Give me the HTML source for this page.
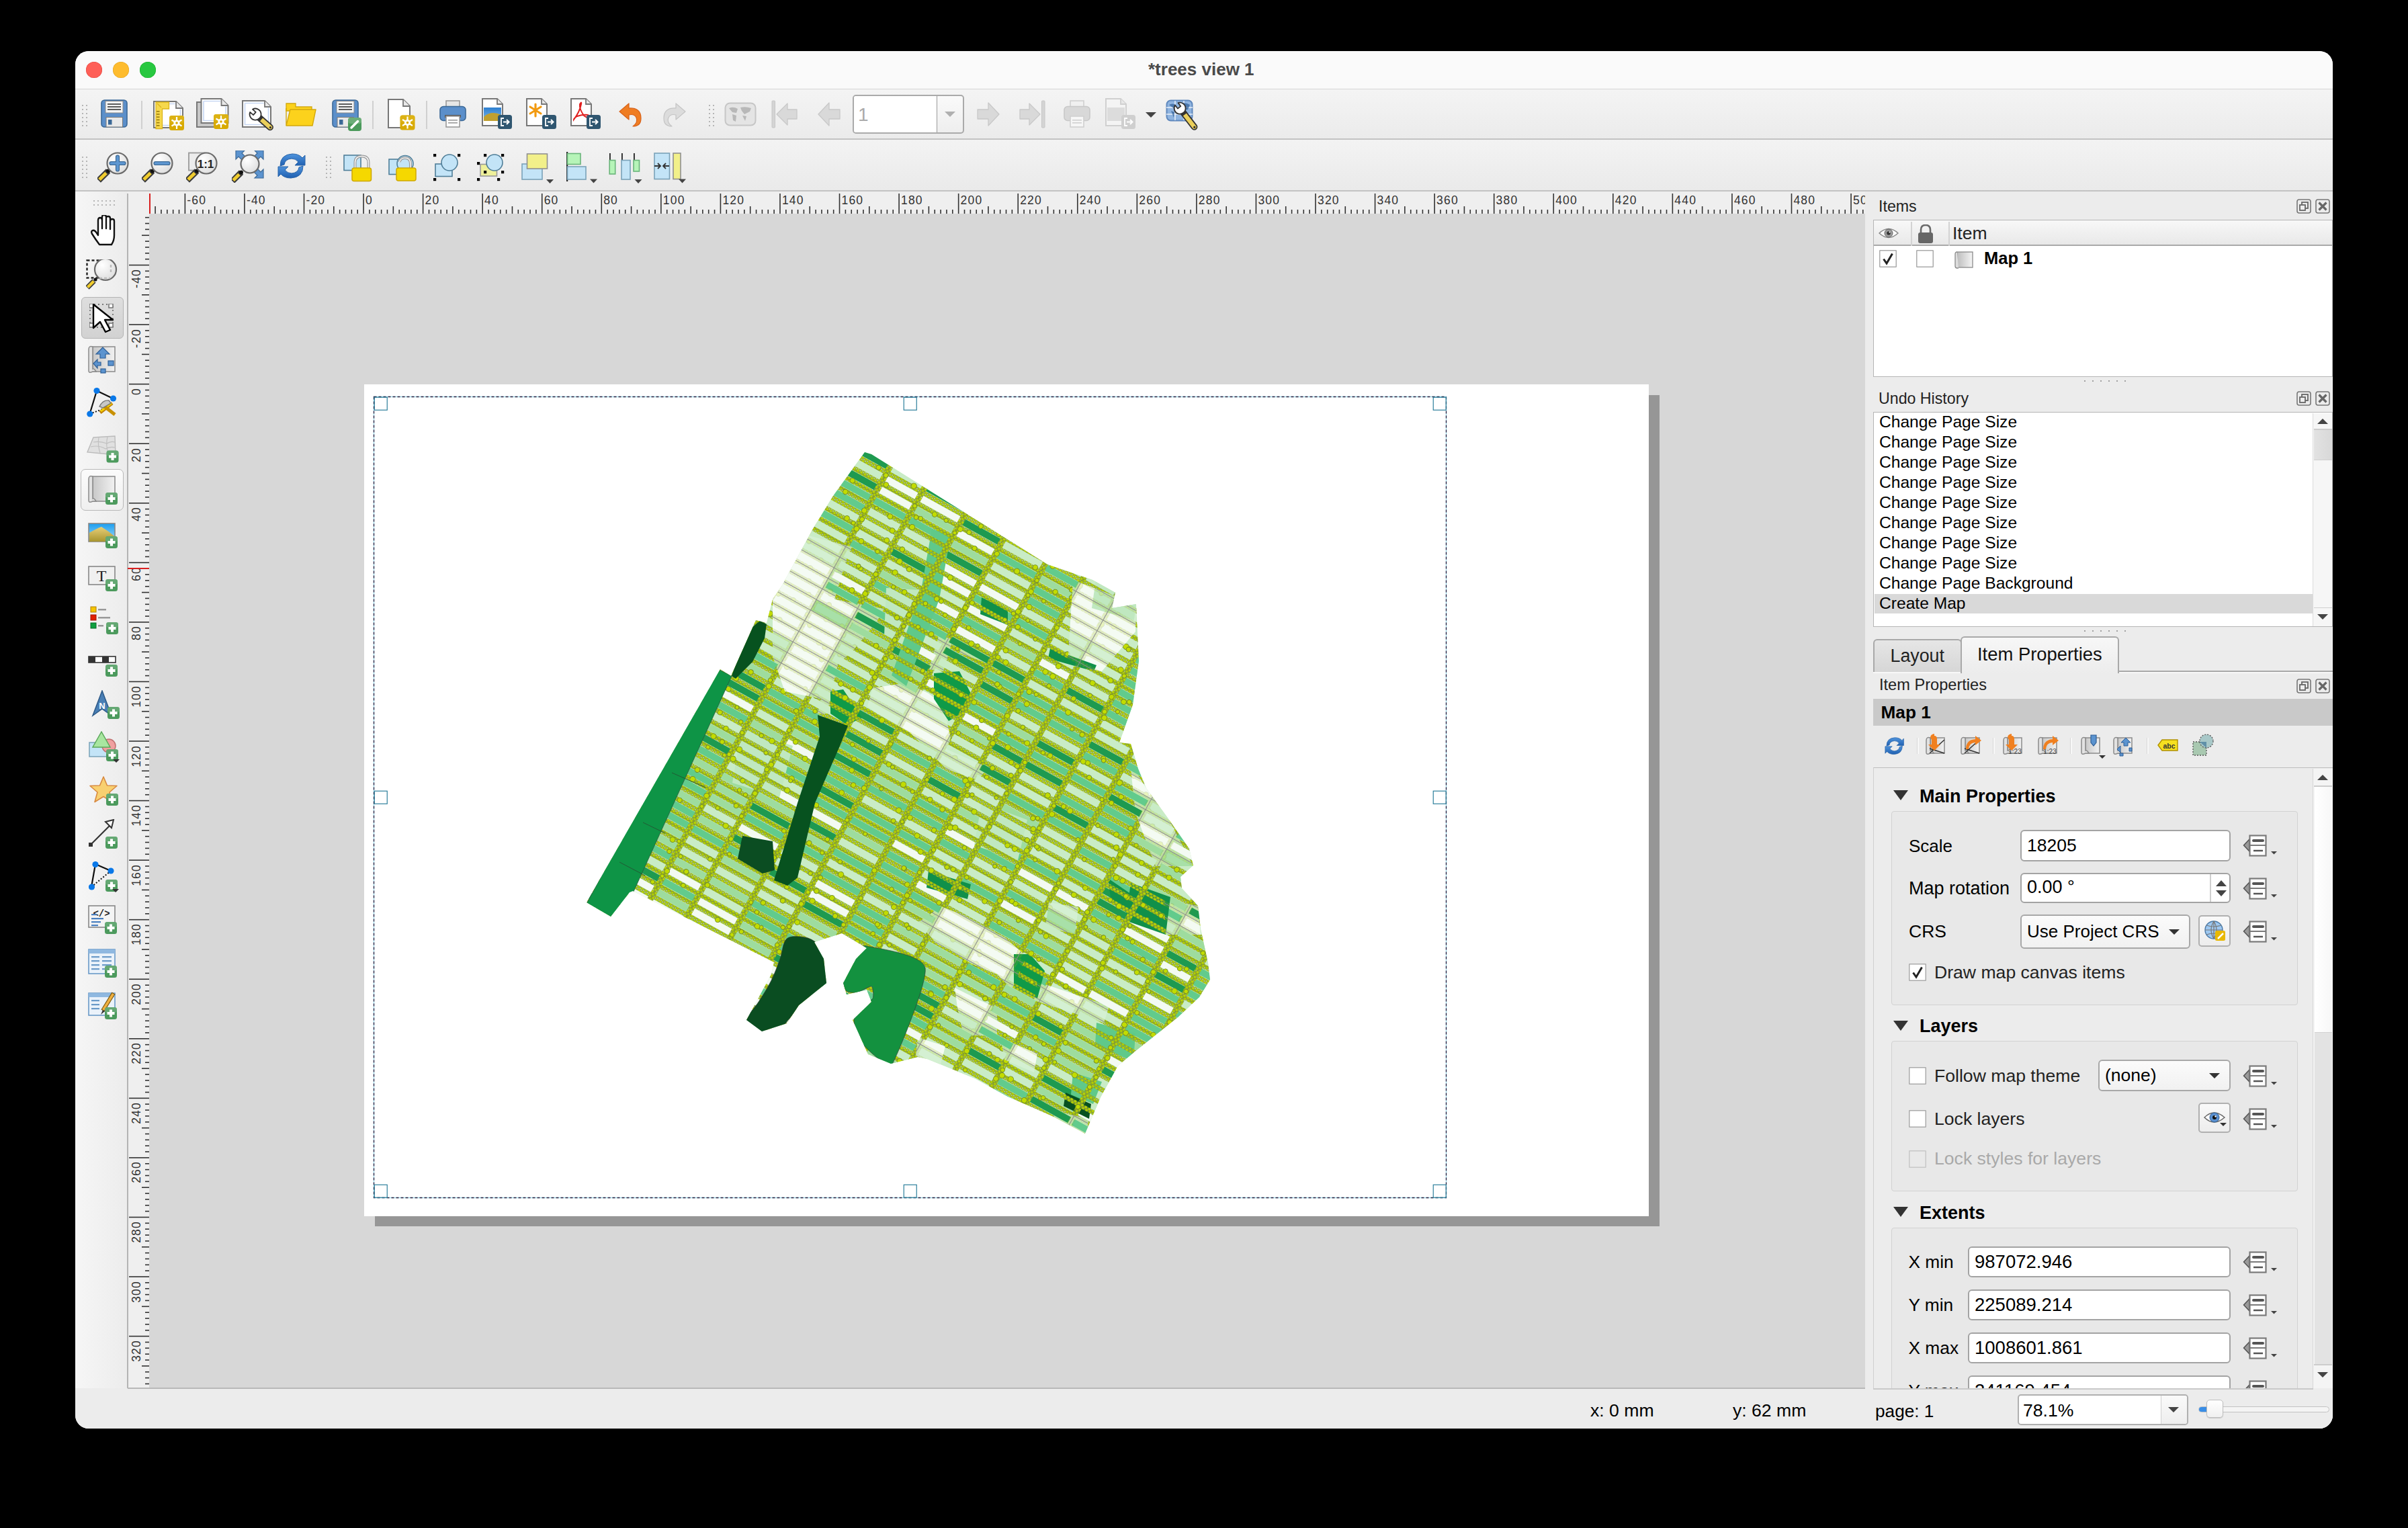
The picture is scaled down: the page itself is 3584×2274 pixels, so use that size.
<!DOCTYPE html>
<html><head><meta charset="utf-8"><title>trees view 1</title>
<style>
html,body{margin:0;padding:0;background:#000;}
body{width:3584px;height:2274px;overflow:hidden;position:relative;font-family:"Liberation Sans", sans-serif;}
#win{position:absolute;left:0;top:0;width:3584px;height:2274px;clip-path:inset(76px 112px 148px 112px round 20px);background:#ececec;}
</style></head><body><div id="win">
<div style="position:absolute;left:112px;top:76px;width:3360px;height:57px;background:#fafafa;border-bottom:1px solid #d6d6d6;box-sizing:border-box"></div><div style="position:absolute;left:128px;top:92px;width:24px;height:24px;border-radius:50%;background:#fe5f57;box-shadow:inset 0 0 0 0.5px #e0443e"></div><div style="position:absolute;left:168px;top:92px;width:24px;height:24px;border-radius:50%;background:#febc2e;box-shadow:inset 0 0 0 0.5px #dea123"></div><div style="position:absolute;left:208px;top:92px;width:24px;height:24px;border-radius:50%;background:#28c840;box-shadow:inset 0 0 0 0.5px #1aab29"></div><div style="position:absolute;left:1709px;top:89.90px;font-size:26px;line-height:1;font-weight:700;color:#4a4a4a;white-space:nowrap;">*trees view 1</div><div style="position:absolute;left:112px;top:133px;width:3360px;height:75px;background:linear-gradient(#f4f4f4,#ebebeb);border-bottom:2px solid #c3c3c3;box-sizing:border-box"></div><div style="position:absolute;left:112px;top:208px;width:3360px;height:77px;background:linear-gradient(#f3f3f3,#eaeaea);border-bottom:2px solid #c3c3c3;box-sizing:border-box"></div><div style="position:absolute;left:112px;top:285px;width:78px;height:1781px;background:linear-gradient(90deg,#f6f6f6,#ececec)"></div><div style="position:absolute;left:112px;top:2066px;width:3360px;height:60px;background:#ececec"></div><svg style="position:absolute;left:122px;top:156px;" width="8" height="32" viewBox="0 0 8 32"><rect x="0" y="0" width="2" height="2" fill="#b5b5b5"/><rect x="6" y="0" width="2" height="2" fill="#b5b5b5"/><rect x="0" y="6" width="2" height="2" fill="#b5b5b5"/><rect x="6" y="6" width="2" height="2" fill="#b5b5b5"/><rect x="0" y="12" width="2" height="2" fill="#b5b5b5"/><rect x="6" y="12" width="2" height="2" fill="#b5b5b5"/><rect x="0" y="18" width="2" height="2" fill="#b5b5b5"/><rect x="6" y="18" width="2" height="2" fill="#b5b5b5"/><rect x="0" y="24" width="2" height="2" fill="#b5b5b5"/><rect x="6" y="24" width="2" height="2" fill="#b5b5b5"/><rect x="0" y="30" width="2" height="2" fill="#b5b5b5"/><rect x="6" y="30" width="2" height="2" fill="#b5b5b5"/></svg><svg style="position:absolute;left:122px;top:233px;" width="8" height="32" viewBox="0 0 8 32"><rect x="0" y="0" width="2" height="2" fill="#b5b5b5"/><rect x="6" y="0" width="2" height="2" fill="#b5b5b5"/><rect x="0" y="6" width="2" height="2" fill="#b5b5b5"/><rect x="6" y="6" width="2" height="2" fill="#b5b5b5"/><rect x="0" y="12" width="2" height="2" fill="#b5b5b5"/><rect x="6" y="12" width="2" height="2" fill="#b5b5b5"/><rect x="0" y="18" width="2" height="2" fill="#b5b5b5"/><rect x="6" y="18" width="2" height="2" fill="#b5b5b5"/><rect x="0" y="24" width="2" height="2" fill="#b5b5b5"/><rect x="6" y="24" width="2" height="2" fill="#b5b5b5"/><rect x="0" y="30" width="2" height="2" fill="#b5b5b5"/><rect x="6" y="30" width="2" height="2" fill="#b5b5b5"/></svg><svg style="position:absolute;left:1055px;top:156px;" width="8" height="32" viewBox="0 0 8 32"><rect x="0" y="0" width="2" height="2" fill="#b5b5b5"/><rect x="6" y="0" width="2" height="2" fill="#b5b5b5"/><rect x="0" y="6" width="2" height="2" fill="#b5b5b5"/><rect x="6" y="6" width="2" height="2" fill="#b5b5b5"/><rect x="0" y="12" width="2" height="2" fill="#b5b5b5"/><rect x="6" y="12" width="2" height="2" fill="#b5b5b5"/><rect x="0" y="18" width="2" height="2" fill="#b5b5b5"/><rect x="6" y="18" width="2" height="2" fill="#b5b5b5"/><rect x="0" y="24" width="2" height="2" fill="#b5b5b5"/><rect x="6" y="24" width="2" height="2" fill="#b5b5b5"/><rect x="0" y="30" width="2" height="2" fill="#b5b5b5"/><rect x="6" y="30" width="2" height="2" fill="#b5b5b5"/></svg><svg style="position:absolute;left:485px;top:233px;" width="8" height="32" viewBox="0 0 8 32"><rect x="0" y="0" width="2" height="2" fill="#b5b5b5"/><rect x="6" y="0" width="2" height="2" fill="#b5b5b5"/><rect x="0" y="6" width="2" height="2" fill="#b5b5b5"/><rect x="6" y="6" width="2" height="2" fill="#b5b5b5"/><rect x="0" y="12" width="2" height="2" fill="#b5b5b5"/><rect x="6" y="12" width="2" height="2" fill="#b5b5b5"/><rect x="0" y="18" width="2" height="2" fill="#b5b5b5"/><rect x="6" y="18" width="2" height="2" fill="#b5b5b5"/><rect x="0" y="24" width="2" height="2" fill="#b5b5b5"/><rect x="6" y="24" width="2" height="2" fill="#b5b5b5"/><rect x="0" y="30" width="2" height="2" fill="#b5b5b5"/><rect x="6" y="30" width="2" height="2" fill="#b5b5b5"/></svg><svg style="position:absolute;left:139px;top:298px;" width="32" height="8" viewBox="0 0 32 8"><rect x="0" y="0" width="2" height="2" fill="#b5b5b5"/><rect x="6" y="0" width="2" height="2" fill="#b5b5b5"/><rect x="12" y="0" width="2" height="2" fill="#b5b5b5"/><rect x="18" y="0" width="2" height="2" fill="#b5b5b5"/><rect x="24" y="0" width="2" height="2" fill="#b5b5b5"/><rect x="30" y="0" width="2" height="2" fill="#b5b5b5"/><rect x="0" y="6" width="2" height="2" fill="#b5b5b5"/><rect x="6" y="6" width="2" height="2" fill="#b5b5b5"/><rect x="12" y="6" width="2" height="2" fill="#b5b5b5"/><rect x="18" y="6" width="2" height="2" fill="#b5b5b5"/><rect x="24" y="6" width="2" height="2" fill="#b5b5b5"/><rect x="30" y="6" width="2" height="2" fill="#b5b5b5"/></svg><div style="position:absolute;left:210px;top:150px;width:2px;height:42px;background:#d0d0d0"></div><div style="position:absolute;left:554px;top:150px;width:2px;height:42px;background:#d0d0d0"></div><div style="position:absolute;left:634px;top:150px;width:2px;height:42px;background:#d0d0d0"></div><div style="position:absolute;left:190px;top:285px;width:2586px;height:33px;background:#efefef"></div><div style="position:absolute;left:190px;top:318px;width:32px;height:1748px;background:#efefef"></div><div style="position:absolute;left:189px;top:288px;width:2px;height:1778px;background:#b4b4b4"></div><div style="position:absolute;left:222px;top:318px;width:2554px;height:1748px;background:#d7d7d7"></div><div style="position:absolute;left:190px;top:2065px;width:2586px;height:2px;background:#b8b8b8"></div><svg style="position:absolute;left:222px;top:288px;" width="2554" height="30" viewBox="0 0 2554 30"><rect x="-0.57" y="24" width="1.6" height="6" fill="#333"/><rect x="8.29" y="19" width="1.6" height="11" fill="#333"/><rect x="17.15" y="24" width="1.6" height="6" fill="#333"/><rect x="26.00" y="24" width="1.6" height="6" fill="#333"/><rect x="34.86" y="24" width="1.6" height="6" fill="#333"/><rect x="43.71" y="24" width="1.6" height="6" fill="#333"/><rect x="52.57" y="0" width="1.6" height="30" fill="#333"/><rect x="61.43" y="24" width="1.6" height="6" fill="#333"/><rect x="70.28" y="24" width="1.6" height="6" fill="#333"/><rect x="79.14" y="24" width="1.6" height="6" fill="#333"/><rect x="87.99" y="24" width="1.6" height="6" fill="#333"/><rect x="96.85" y="19" width="1.6" height="11" fill="#333"/><rect x="105.71" y="24" width="1.6" height="6" fill="#333"/><rect x="114.56" y="24" width="1.6" height="6" fill="#333"/><rect x="123.42" y="24" width="1.6" height="6" fill="#333"/><rect x="132.27" y="24" width="1.6" height="6" fill="#333"/><rect x="141.13" y="0" width="1.6" height="30" fill="#333"/><rect x="149.99" y="24" width="1.6" height="6" fill="#333"/><rect x="158.84" y="24" width="1.6" height="6" fill="#333"/><rect x="167.70" y="24" width="1.6" height="6" fill="#333"/><rect x="176.55" y="24" width="1.6" height="6" fill="#333"/><rect x="185.41" y="19" width="1.6" height="11" fill="#333"/><rect x="194.27" y="24" width="1.6" height="6" fill="#333"/><rect x="203.12" y="24" width="1.6" height="6" fill="#333"/><rect x="211.98" y="24" width="1.6" height="6" fill="#333"/><rect x="220.83" y="24" width="1.6" height="6" fill="#333"/><rect x="229.69" y="0" width="1.6" height="30" fill="#333"/><rect x="238.55" y="24" width="1.6" height="6" fill="#333"/><rect x="247.40" y="24" width="1.6" height="6" fill="#333"/><rect x="256.26" y="24" width="1.6" height="6" fill="#333"/><rect x="265.11" y="24" width="1.6" height="6" fill="#333"/><rect x="273.97" y="19" width="1.6" height="11" fill="#333"/><rect x="282.83" y="24" width="1.6" height="6" fill="#333"/><rect x="291.68" y="24" width="1.6" height="6" fill="#333"/><rect x="300.54" y="24" width="1.6" height="6" fill="#333"/><rect x="309.39" y="24" width="1.6" height="6" fill="#333"/><rect x="318.25" y="0" width="1.6" height="30" fill="#333"/><rect x="327.11" y="24" width="1.6" height="6" fill="#333"/><rect x="335.96" y="24" width="1.6" height="6" fill="#333"/><rect x="344.82" y="24" width="1.6" height="6" fill="#333"/><rect x="353.67" y="24" width="1.6" height="6" fill="#333"/><rect x="362.53" y="19" width="1.6" height="11" fill="#333"/><rect x="371.39" y="24" width="1.6" height="6" fill="#333"/><rect x="380.24" y="24" width="1.6" height="6" fill="#333"/><rect x="389.10" y="24" width="1.6" height="6" fill="#333"/><rect x="397.95" y="24" width="1.6" height="6" fill="#333"/><rect x="406.81" y="0" width="1.6" height="30" fill="#333"/><rect x="415.67" y="24" width="1.6" height="6" fill="#333"/><rect x="424.52" y="24" width="1.6" height="6" fill="#333"/><rect x="433.38" y="24" width="1.6" height="6" fill="#333"/><rect x="442.23" y="24" width="1.6" height="6" fill="#333"/><rect x="451.09" y="19" width="1.6" height="11" fill="#333"/><rect x="459.95" y="24" width="1.6" height="6" fill="#333"/><rect x="468.80" y="24" width="1.6" height="6" fill="#333"/><rect x="477.66" y="24" width="1.6" height="6" fill="#333"/><rect x="486.51" y="24" width="1.6" height="6" fill="#333"/><rect x="495.37" y="0" width="1.6" height="30" fill="#333"/><rect x="504.23" y="24" width="1.6" height="6" fill="#333"/><rect x="513.08" y="24" width="1.6" height="6" fill="#333"/><rect x="521.94" y="24" width="1.6" height="6" fill="#333"/><rect x="530.79" y="24" width="1.6" height="6" fill="#333"/><rect x="539.65" y="19" width="1.6" height="11" fill="#333"/><rect x="548.51" y="24" width="1.6" height="6" fill="#333"/><rect x="557.36" y="24" width="1.6" height="6" fill="#333"/><rect x="566.22" y="24" width="1.6" height="6" fill="#333"/><rect x="575.07" y="24" width="1.6" height="6" fill="#333"/><rect x="583.93" y="0" width="1.6" height="30" fill="#333"/><rect x="592.79" y="24" width="1.6" height="6" fill="#333"/><rect x="601.64" y="24" width="1.6" height="6" fill="#333"/><rect x="610.50" y="24" width="1.6" height="6" fill="#333"/><rect x="619.35" y="24" width="1.6" height="6" fill="#333"/><rect x="628.21" y="19" width="1.6" height="11" fill="#333"/><rect x="637.07" y="24" width="1.6" height="6" fill="#333"/><rect x="645.92" y="24" width="1.6" height="6" fill="#333"/><rect x="654.78" y="24" width="1.6" height="6" fill="#333"/><rect x="663.63" y="24" width="1.6" height="6" fill="#333"/><rect x="672.49" y="0" width="1.6" height="30" fill="#333"/><rect x="681.35" y="24" width="1.6" height="6" fill="#333"/><rect x="690.20" y="24" width="1.6" height="6" fill="#333"/><rect x="699.06" y="24" width="1.6" height="6" fill="#333"/><rect x="707.91" y="24" width="1.6" height="6" fill="#333"/><rect x="716.77" y="19" width="1.6" height="11" fill="#333"/><rect x="725.63" y="24" width="1.6" height="6" fill="#333"/><rect x="734.48" y="24" width="1.6" height="6" fill="#333"/><rect x="743.34" y="24" width="1.6" height="6" fill="#333"/><rect x="752.19" y="24" width="1.6" height="6" fill="#333"/><rect x="761.05" y="0" width="1.6" height="30" fill="#333"/><rect x="769.91" y="24" width="1.6" height="6" fill="#333"/><rect x="778.76" y="24" width="1.6" height="6" fill="#333"/><rect x="787.62" y="24" width="1.6" height="6" fill="#333"/><rect x="796.47" y="24" width="1.6" height="6" fill="#333"/><rect x="805.33" y="19" width="1.6" height="11" fill="#333"/><rect x="814.19" y="24" width="1.6" height="6" fill="#333"/><rect x="823.04" y="24" width="1.6" height="6" fill="#333"/><rect x="831.90" y="24" width="1.6" height="6" fill="#333"/><rect x="840.75" y="24" width="1.6" height="6" fill="#333"/><rect x="849.61" y="0" width="1.6" height="30" fill="#333"/><rect x="858.47" y="24" width="1.6" height="6" fill="#333"/><rect x="867.32" y="24" width="1.6" height="6" fill="#333"/><rect x="876.18" y="24" width="1.6" height="6" fill="#333"/><rect x="885.03" y="24" width="1.6" height="6" fill="#333"/><rect x="893.89" y="19" width="1.6" height="11" fill="#333"/><rect x="902.75" y="24" width="1.6" height="6" fill="#333"/><rect x="911.60" y="24" width="1.6" height="6" fill="#333"/><rect x="920.46" y="24" width="1.6" height="6" fill="#333"/><rect x="929.31" y="24" width="1.6" height="6" fill="#333"/><rect x="938.17" y="0" width="1.6" height="30" fill="#333"/><rect x="947.03" y="24" width="1.6" height="6" fill="#333"/><rect x="955.88" y="24" width="1.6" height="6" fill="#333"/><rect x="964.74" y="24" width="1.6" height="6" fill="#333"/><rect x="973.59" y="24" width="1.6" height="6" fill="#333"/><rect x="982.45" y="19" width="1.6" height="11" fill="#333"/><rect x="991.31" y="24" width="1.6" height="6" fill="#333"/><rect x="1000.16" y="24" width="1.6" height="6" fill="#333"/><rect x="1009.02" y="24" width="1.6" height="6" fill="#333"/><rect x="1017.87" y="24" width="1.6" height="6" fill="#333"/><rect x="1026.73" y="0" width="1.6" height="30" fill="#333"/><rect x="1035.59" y="24" width="1.6" height="6" fill="#333"/><rect x="1044.44" y="24" width="1.6" height="6" fill="#333"/><rect x="1053.30" y="24" width="1.6" height="6" fill="#333"/><rect x="1062.15" y="24" width="1.6" height="6" fill="#333"/><rect x="1071.01" y="19" width="1.6" height="11" fill="#333"/><rect x="1079.87" y="24" width="1.6" height="6" fill="#333"/><rect x="1088.72" y="24" width="1.6" height="6" fill="#333"/><rect x="1097.58" y="24" width="1.6" height="6" fill="#333"/><rect x="1106.43" y="24" width="1.6" height="6" fill="#333"/><rect x="1115.29" y="0" width="1.6" height="30" fill="#333"/><rect x="1124.15" y="24" width="1.6" height="6" fill="#333"/><rect x="1133.00" y="24" width="1.6" height="6" fill="#333"/><rect x="1141.86" y="24" width="1.6" height="6" fill="#333"/><rect x="1150.71" y="24" width="1.6" height="6" fill="#333"/><rect x="1159.57" y="19" width="1.6" height="11" fill="#333"/><rect x="1168.43" y="24" width="1.6" height="6" fill="#333"/><rect x="1177.28" y="24" width="1.6" height="6" fill="#333"/><rect x="1186.14" y="24" width="1.6" height="6" fill="#333"/><rect x="1194.99" y="24" width="1.6" height="6" fill="#333"/><rect x="1203.85" y="0" width="1.6" height="30" fill="#333"/><rect x="1212.71" y="24" width="1.6" height="6" fill="#333"/><rect x="1221.56" y="24" width="1.6" height="6" fill="#333"/><rect x="1230.42" y="24" width="1.6" height="6" fill="#333"/><rect x="1239.27" y="24" width="1.6" height="6" fill="#333"/><rect x="1248.13" y="19" width="1.6" height="11" fill="#333"/><rect x="1256.99" y="24" width="1.6" height="6" fill="#333"/><rect x="1265.84" y="24" width="1.6" height="6" fill="#333"/><rect x="1274.70" y="24" width="1.6" height="6" fill="#333"/><rect x="1283.55" y="24" width="1.6" height="6" fill="#333"/><rect x="1292.41" y="0" width="1.6" height="30" fill="#333"/><rect x="1301.27" y="24" width="1.6" height="6" fill="#333"/><rect x="1310.12" y="24" width="1.6" height="6" fill="#333"/><rect x="1318.98" y="24" width="1.6" height="6" fill="#333"/><rect x="1327.83" y="24" width="1.6" height="6" fill="#333"/><rect x="1336.69" y="19" width="1.6" height="11" fill="#333"/><rect x="1345.55" y="24" width="1.6" height="6" fill="#333"/><rect x="1354.40" y="24" width="1.6" height="6" fill="#333"/><rect x="1363.26" y="24" width="1.6" height="6" fill="#333"/><rect x="1372.11" y="24" width="1.6" height="6" fill="#333"/><rect x="1380.97" y="0" width="1.6" height="30" fill="#333"/><rect x="1389.83" y="24" width="1.6" height="6" fill="#333"/><rect x="1398.68" y="24" width="1.6" height="6" fill="#333"/><rect x="1407.54" y="24" width="1.6" height="6" fill="#333"/><rect x="1416.39" y="24" width="1.6" height="6" fill="#333"/><rect x="1425.25" y="19" width="1.6" height="11" fill="#333"/><rect x="1434.11" y="24" width="1.6" height="6" fill="#333"/><rect x="1442.96" y="24" width="1.6" height="6" fill="#333"/><rect x="1451.82" y="24" width="1.6" height="6" fill="#333"/><rect x="1460.67" y="24" width="1.6" height="6" fill="#333"/><rect x="1469.53" y="0" width="1.6" height="30" fill="#333"/><rect x="1478.39" y="24" width="1.6" height="6" fill="#333"/><rect x="1487.24" y="24" width="1.6" height="6" fill="#333"/><rect x="1496.10" y="24" width="1.6" height="6" fill="#333"/><rect x="1504.95" y="24" width="1.6" height="6" fill="#333"/><rect x="1513.81" y="19" width="1.6" height="11" fill="#333"/><rect x="1522.67" y="24" width="1.6" height="6" fill="#333"/><rect x="1531.52" y="24" width="1.6" height="6" fill="#333"/><rect x="1540.38" y="24" width="1.6" height="6" fill="#333"/><rect x="1549.23" y="24" width="1.6" height="6" fill="#333"/><rect x="1558.09" y="0" width="1.6" height="30" fill="#333"/><rect x="1566.95" y="24" width="1.6" height="6" fill="#333"/><rect x="1575.80" y="24" width="1.6" height="6" fill="#333"/><rect x="1584.66" y="24" width="1.6" height="6" fill="#333"/><rect x="1593.51" y="24" width="1.6" height="6" fill="#333"/><rect x="1602.37" y="19" width="1.6" height="11" fill="#333"/><rect x="1611.23" y="24" width="1.6" height="6" fill="#333"/><rect x="1620.08" y="24" width="1.6" height="6" fill="#333"/><rect x="1628.94" y="24" width="1.6" height="6" fill="#333"/><rect x="1637.79" y="24" width="1.6" height="6" fill="#333"/><rect x="1646.65" y="0" width="1.6" height="30" fill="#333"/><rect x="1655.51" y="24" width="1.6" height="6" fill="#333"/><rect x="1664.36" y="24" width="1.6" height="6" fill="#333"/><rect x="1673.22" y="24" width="1.6" height="6" fill="#333"/><rect x="1682.07" y="24" width="1.6" height="6" fill="#333"/><rect x="1690.93" y="19" width="1.6" height="11" fill="#333"/><rect x="1699.79" y="24" width="1.6" height="6" fill="#333"/><rect x="1708.64" y="24" width="1.6" height="6" fill="#333"/><rect x="1717.50" y="24" width="1.6" height="6" fill="#333"/><rect x="1726.35" y="24" width="1.6" height="6" fill="#333"/><rect x="1735.21" y="0" width="1.6" height="30" fill="#333"/><rect x="1744.07" y="24" width="1.6" height="6" fill="#333"/><rect x="1752.92" y="24" width="1.6" height="6" fill="#333"/><rect x="1761.78" y="24" width="1.6" height="6" fill="#333"/><rect x="1770.63" y="24" width="1.6" height="6" fill="#333"/><rect x="1779.49" y="19" width="1.6" height="11" fill="#333"/><rect x="1788.35" y="24" width="1.6" height="6" fill="#333"/><rect x="1797.20" y="24" width="1.6" height="6" fill="#333"/><rect x="1806.06" y="24" width="1.6" height="6" fill="#333"/><rect x="1814.91" y="24" width="1.6" height="6" fill="#333"/><rect x="1823.77" y="0" width="1.6" height="30" fill="#333"/><rect x="1832.63" y="24" width="1.6" height="6" fill="#333"/><rect x="1841.48" y="24" width="1.6" height="6" fill="#333"/><rect x="1850.34" y="24" width="1.6" height="6" fill="#333"/><rect x="1859.19" y="24" width="1.6" height="6" fill="#333"/><rect x="1868.05" y="19" width="1.6" height="11" fill="#333"/><rect x="1876.91" y="24" width="1.6" height="6" fill="#333"/><rect x="1885.76" y="24" width="1.6" height="6" fill="#333"/><rect x="1894.62" y="24" width="1.6" height="6" fill="#333"/><rect x="1903.47" y="24" width="1.6" height="6" fill="#333"/><rect x="1912.33" y="0" width="1.6" height="30" fill="#333"/><rect x="1921.19" y="24" width="1.6" height="6" fill="#333"/><rect x="1930.04" y="24" width="1.6" height="6" fill="#333"/><rect x="1938.90" y="24" width="1.6" height="6" fill="#333"/><rect x="1947.75" y="24" width="1.6" height="6" fill="#333"/><rect x="1956.61" y="19" width="1.6" height="11" fill="#333"/><rect x="1965.47" y="24" width="1.6" height="6" fill="#333"/><rect x="1974.32" y="24" width="1.6" height="6" fill="#333"/><rect x="1983.18" y="24" width="1.6" height="6" fill="#333"/><rect x="1992.03" y="24" width="1.6" height="6" fill="#333"/><rect x="2000.89" y="0" width="1.6" height="30" fill="#333"/><rect x="2009.75" y="24" width="1.6" height="6" fill="#333"/><rect x="2018.60" y="24" width="1.6" height="6" fill="#333"/><rect x="2027.46" y="24" width="1.6" height="6" fill="#333"/><rect x="2036.31" y="24" width="1.6" height="6" fill="#333"/><rect x="2045.17" y="19" width="1.6" height="11" fill="#333"/><rect x="2054.03" y="24" width="1.6" height="6" fill="#333"/><rect x="2062.88" y="24" width="1.6" height="6" fill="#333"/><rect x="2071.74" y="24" width="1.6" height="6" fill="#333"/><rect x="2080.59" y="24" width="1.6" height="6" fill="#333"/><rect x="2089.45" y="0" width="1.6" height="30" fill="#333"/><rect x="2098.31" y="24" width="1.6" height="6" fill="#333"/><rect x="2107.16" y="24" width="1.6" height="6" fill="#333"/><rect x="2116.02" y="24" width="1.6" height="6" fill="#333"/><rect x="2124.87" y="24" width="1.6" height="6" fill="#333"/><rect x="2133.73" y="19" width="1.6" height="11" fill="#333"/><rect x="2142.59" y="24" width="1.6" height="6" fill="#333"/><rect x="2151.44" y="24" width="1.6" height="6" fill="#333"/><rect x="2160.30" y="24" width="1.6" height="6" fill="#333"/><rect x="2169.15" y="24" width="1.6" height="6" fill="#333"/><rect x="2178.01" y="0" width="1.6" height="30" fill="#333"/><rect x="2186.87" y="24" width="1.6" height="6" fill="#333"/><rect x="2195.72" y="24" width="1.6" height="6" fill="#333"/><rect x="2204.58" y="24" width="1.6" height="6" fill="#333"/><rect x="2213.43" y="24" width="1.6" height="6" fill="#333"/><rect x="2222.29" y="19" width="1.6" height="11" fill="#333"/><rect x="2231.15" y="24" width="1.6" height="6" fill="#333"/><rect x="2240.00" y="24" width="1.6" height="6" fill="#333"/><rect x="2248.86" y="24" width="1.6" height="6" fill="#333"/><rect x="2257.71" y="24" width="1.6" height="6" fill="#333"/><rect x="2266.57" y="0" width="1.6" height="30" fill="#333"/><rect x="2275.43" y="24" width="1.6" height="6" fill="#333"/><rect x="2284.28" y="24" width="1.6" height="6" fill="#333"/><rect x="2293.14" y="24" width="1.6" height="6" fill="#333"/><rect x="2301.99" y="24" width="1.6" height="6" fill="#333"/><rect x="2310.85" y="19" width="1.6" height="11" fill="#333"/><rect x="2319.71" y="24" width="1.6" height="6" fill="#333"/><rect x="2328.56" y="24" width="1.6" height="6" fill="#333"/><rect x="2337.42" y="24" width="1.6" height="6" fill="#333"/><rect x="2346.27" y="24" width="1.6" height="6" fill="#333"/><rect x="2355.13" y="0" width="1.6" height="30" fill="#333"/><rect x="2363.99" y="24" width="1.6" height="6" fill="#333"/><rect x="2372.84" y="24" width="1.6" height="6" fill="#333"/><rect x="2381.70" y="24" width="1.6" height="6" fill="#333"/><rect x="2390.55" y="24" width="1.6" height="6" fill="#333"/><rect x="2399.41" y="19" width="1.6" height="11" fill="#333"/><rect x="2408.27" y="24" width="1.6" height="6" fill="#333"/><rect x="2417.12" y="24" width="1.6" height="6" fill="#333"/><rect x="2425.98" y="24" width="1.6" height="6" fill="#333"/><rect x="2434.83" y="24" width="1.6" height="6" fill="#333"/><rect x="2443.69" y="0" width="1.6" height="30" fill="#333"/><rect x="2452.55" y="24" width="1.6" height="6" fill="#333"/><rect x="2461.40" y="24" width="1.6" height="6" fill="#333"/><rect x="2470.26" y="24" width="1.6" height="6" fill="#333"/><rect x="2479.11" y="24" width="1.6" height="6" fill="#333"/><rect x="2487.97" y="19" width="1.6" height="11" fill="#333"/><rect x="2496.83" y="24" width="1.6" height="6" fill="#333"/><rect x="2505.68" y="24" width="1.6" height="6" fill="#333"/><rect x="2514.54" y="24" width="1.6" height="6" fill="#333"/><rect x="2523.39" y="24" width="1.6" height="6" fill="#333"/><rect x="2532.25" y="0" width="1.6" height="30" fill="#333"/><rect x="2541.11" y="24" width="1.6" height="6" fill="#333"/><rect x="2549.96" y="24" width="1.6" height="6" fill="#333"/></svg><div style="position:absolute;left:222px;top:285px;width:2554px;height:33px;overflow:hidden"><div style="position:absolute;margin-left:-222px;left:278.3px;top:-285px;margin-top:289.62px;font-size:17.5px;line-height:1;font-weight:400;color:#333;white-space:nowrap;letter-spacing:1.2px">-60</div><div style="position:absolute;margin-left:-222px;left:366.9px;top:-285px;margin-top:289.62px;font-size:17.5px;line-height:1;font-weight:400;color:#333;white-space:nowrap;letter-spacing:1.2px">-40</div><div style="position:absolute;margin-left:-222px;left:455.4px;top:-285px;margin-top:289.62px;font-size:17.5px;line-height:1;font-weight:400;color:#333;white-space:nowrap;letter-spacing:1.2px">-20</div><div style="position:absolute;margin-left:-222px;left:544.0px;top:-285px;margin-top:289.62px;font-size:17.5px;line-height:1;font-weight:400;color:#333;white-space:nowrap;letter-spacing:1.2px">0</div><div style="position:absolute;margin-left:-222px;left:632.6px;top:-285px;margin-top:289.62px;font-size:17.5px;line-height:1;font-weight:400;color:#333;white-space:nowrap;letter-spacing:1.2px">20</div><div style="position:absolute;margin-left:-222px;left:721.1px;top:-285px;margin-top:289.62px;font-size:17.5px;line-height:1;font-weight:400;color:#333;white-space:nowrap;letter-spacing:1.2px">40</div><div style="position:absolute;margin-left:-222px;left:809.7px;top:-285px;margin-top:289.62px;font-size:17.5px;line-height:1;font-weight:400;color:#333;white-space:nowrap;letter-spacing:1.2px">60</div><div style="position:absolute;margin-left:-222px;left:898.2px;top:-285px;margin-top:289.62px;font-size:17.5px;line-height:1;font-weight:400;color:#333;white-space:nowrap;letter-spacing:1.2px">80</div><div style="position:absolute;margin-left:-222px;left:986.8px;top:-285px;margin-top:289.62px;font-size:17.5px;line-height:1;font-weight:400;color:#333;white-space:nowrap;letter-spacing:1.2px">100</div><div style="position:absolute;margin-left:-222px;left:1075.4px;top:-285px;margin-top:289.62px;font-size:17.5px;line-height:1;font-weight:400;color:#333;white-space:nowrap;letter-spacing:1.2px">120</div><div style="position:absolute;margin-left:-222px;left:1163.9px;top:-285px;margin-top:289.62px;font-size:17.5px;line-height:1;font-weight:400;color:#333;white-space:nowrap;letter-spacing:1.2px">140</div><div style="position:absolute;margin-left:-222px;left:1252.5px;top:-285px;margin-top:289.62px;font-size:17.5px;line-height:1;font-weight:400;color:#333;white-space:nowrap;letter-spacing:1.2px">160</div><div style="position:absolute;margin-left:-222px;left:1341.0px;top:-285px;margin-top:289.62px;font-size:17.5px;line-height:1;font-weight:400;color:#333;white-space:nowrap;letter-spacing:1.2px">180</div><div style="position:absolute;margin-left:-222px;left:1429.6px;top:-285px;margin-top:289.62px;font-size:17.5px;line-height:1;font-weight:400;color:#333;white-space:nowrap;letter-spacing:1.2px">200</div><div style="position:absolute;margin-left:-222px;left:1518.2px;top:-285px;margin-top:289.62px;font-size:17.5px;line-height:1;font-weight:400;color:#333;white-space:nowrap;letter-spacing:1.2px">220</div><div style="position:absolute;margin-left:-222px;left:1606.7px;top:-285px;margin-top:289.62px;font-size:17.5px;line-height:1;font-weight:400;color:#333;white-space:nowrap;letter-spacing:1.2px">240</div><div style="position:absolute;margin-left:-222px;left:1695.3px;top:-285px;margin-top:289.62px;font-size:17.5px;line-height:1;font-weight:400;color:#333;white-space:nowrap;letter-spacing:1.2px">260</div><div style="position:absolute;margin-left:-222px;left:1783.8px;top:-285px;margin-top:289.62px;font-size:17.5px;line-height:1;font-weight:400;color:#333;white-space:nowrap;letter-spacing:1.2px">280</div><div style="position:absolute;margin-left:-222px;left:1872.4px;top:-285px;margin-top:289.62px;font-size:17.5px;line-height:1;font-weight:400;color:#333;white-space:nowrap;letter-spacing:1.2px">300</div><div style="position:absolute;margin-left:-222px;left:1961.0px;top:-285px;margin-top:289.62px;font-size:17.5px;line-height:1;font-weight:400;color:#333;white-space:nowrap;letter-spacing:1.2px">320</div><div style="position:absolute;margin-left:-222px;left:2049.5px;top:-285px;margin-top:289.62px;font-size:17.5px;line-height:1;font-weight:400;color:#333;white-space:nowrap;letter-spacing:1.2px">340</div><div style="position:absolute;margin-left:-222px;left:2138.1px;top:-285px;margin-top:289.62px;font-size:17.5px;line-height:1;font-weight:400;color:#333;white-space:nowrap;letter-spacing:1.2px">360</div><div style="position:absolute;margin-left:-222px;left:2226.6px;top:-285px;margin-top:289.62px;font-size:17.5px;line-height:1;font-weight:400;color:#333;white-space:nowrap;letter-spacing:1.2px">380</div><div style="position:absolute;margin-left:-222px;left:2315.2px;top:-285px;margin-top:289.62px;font-size:17.5px;line-height:1;font-weight:400;color:#333;white-space:nowrap;letter-spacing:1.2px">400</div><div style="position:absolute;margin-left:-222px;left:2403.8px;top:-285px;margin-top:289.62px;font-size:17.5px;line-height:1;font-weight:400;color:#333;white-space:nowrap;letter-spacing:1.2px">420</div><div style="position:absolute;margin-left:-222px;left:2492.3px;top:-285px;margin-top:289.62px;font-size:17.5px;line-height:1;font-weight:400;color:#333;white-space:nowrap;letter-spacing:1.2px">440</div><div style="position:absolute;margin-left:-222px;left:2580.9px;top:-285px;margin-top:289.62px;font-size:17.5px;line-height:1;font-weight:400;color:#333;white-space:nowrap;letter-spacing:1.2px">460</div><div style="position:absolute;margin-left:-222px;left:2669.4px;top:-285px;margin-top:289.62px;font-size:17.5px;line-height:1;font-weight:400;color:#333;white-space:nowrap;letter-spacing:1.2px">480</div><div style="position:absolute;margin-left:-222px;left:2758.0px;top:-285px;margin-top:289.62px;font-size:17.5px;line-height:1;font-weight:400;color:#333;white-space:nowrap;letter-spacing:1.2px">500</div></div><div style="position:absolute;left:222px;top:288px;width:2px;height:30px;background:#d92020"></div><svg style="position:absolute;left:192px;top:318px;" width="30" height="1748" viewBox="0 0 30 1748"><rect x="24" y="4.88" width="6" height="1.6" fill="#333"/><rect x="24" y="13.74" width="6" height="1.6" fill="#333"/><rect x="24" y="22.59" width="6" height="1.6" fill="#333"/><rect x="19" y="31.45" width="11" height="1.6" fill="#333"/><rect x="24" y="40.31" width="6" height="1.6" fill="#333"/><rect x="24" y="49.16" width="6" height="1.6" fill="#333"/><rect x="24" y="58.02" width="6" height="1.6" fill="#333"/><rect x="24" y="66.87" width="6" height="1.6" fill="#333"/><rect x="0" y="75.73" width="30" height="1.6" fill="#333"/><rect x="24" y="84.59" width="6" height="1.6" fill="#333"/><rect x="24" y="93.44" width="6" height="1.6" fill="#333"/><rect x="24" y="102.30" width="6" height="1.6" fill="#333"/><rect x="24" y="111.15" width="6" height="1.6" fill="#333"/><rect x="19" y="120.01" width="11" height="1.6" fill="#333"/><rect x="24" y="128.87" width="6" height="1.6" fill="#333"/><rect x="24" y="137.72" width="6" height="1.6" fill="#333"/><rect x="24" y="146.58" width="6" height="1.6" fill="#333"/><rect x="24" y="155.43" width="6" height="1.6" fill="#333"/><rect x="0" y="164.29" width="30" height="1.6" fill="#333"/><rect x="24" y="173.15" width="6" height="1.6" fill="#333"/><rect x="24" y="182.00" width="6" height="1.6" fill="#333"/><rect x="24" y="190.86" width="6" height="1.6" fill="#333"/><rect x="24" y="199.71" width="6" height="1.6" fill="#333"/><rect x="19" y="208.57" width="11" height="1.6" fill="#333"/><rect x="24" y="217.43" width="6" height="1.6" fill="#333"/><rect x="24" y="226.28" width="6" height="1.6" fill="#333"/><rect x="24" y="235.14" width="6" height="1.6" fill="#333"/><rect x="24" y="243.99" width="6" height="1.6" fill="#333"/><rect x="0" y="252.85" width="30" height="1.6" fill="#333"/><rect x="24" y="261.71" width="6" height="1.6" fill="#333"/><rect x="24" y="270.56" width="6" height="1.6" fill="#333"/><rect x="24" y="279.42" width="6" height="1.6" fill="#333"/><rect x="24" y="288.27" width="6" height="1.6" fill="#333"/><rect x="19" y="297.13" width="11" height="1.6" fill="#333"/><rect x="24" y="305.99" width="6" height="1.6" fill="#333"/><rect x="24" y="314.84" width="6" height="1.6" fill="#333"/><rect x="24" y="323.70" width="6" height="1.6" fill="#333"/><rect x="24" y="332.55" width="6" height="1.6" fill="#333"/><rect x="0" y="341.41" width="30" height="1.6" fill="#333"/><rect x="24" y="350.27" width="6" height="1.6" fill="#333"/><rect x="24" y="359.12" width="6" height="1.6" fill="#333"/><rect x="24" y="367.98" width="6" height="1.6" fill="#333"/><rect x="24" y="376.83" width="6" height="1.6" fill="#333"/><rect x="19" y="385.69" width="11" height="1.6" fill="#333"/><rect x="24" y="394.55" width="6" height="1.6" fill="#333"/><rect x="24" y="403.40" width="6" height="1.6" fill="#333"/><rect x="24" y="412.26" width="6" height="1.6" fill="#333"/><rect x="24" y="421.11" width="6" height="1.6" fill="#333"/><rect x="0" y="429.97" width="30" height="1.6" fill="#333"/><rect x="24" y="438.83" width="6" height="1.6" fill="#333"/><rect x="24" y="447.68" width="6" height="1.6" fill="#333"/><rect x="24" y="456.54" width="6" height="1.6" fill="#333"/><rect x="24" y="465.39" width="6" height="1.6" fill="#333"/><rect x="19" y="474.25" width="11" height="1.6" fill="#333"/><rect x="24" y="483.11" width="6" height="1.6" fill="#333"/><rect x="24" y="491.96" width="6" height="1.6" fill="#333"/><rect x="24" y="500.82" width="6" height="1.6" fill="#333"/><rect x="24" y="509.67" width="6" height="1.6" fill="#333"/><rect x="0" y="518.53" width="30" height="1.6" fill="#333"/><rect x="24" y="527.39" width="6" height="1.6" fill="#333"/><rect x="24" y="536.24" width="6" height="1.6" fill="#333"/><rect x="24" y="545.10" width="6" height="1.6" fill="#333"/><rect x="24" y="553.95" width="6" height="1.6" fill="#333"/><rect x="19" y="562.81" width="11" height="1.6" fill="#333"/><rect x="24" y="571.67" width="6" height="1.6" fill="#333"/><rect x="24" y="580.52" width="6" height="1.6" fill="#333"/><rect x="24" y="589.38" width="6" height="1.6" fill="#333"/><rect x="24" y="598.23" width="6" height="1.6" fill="#333"/><rect x="0" y="607.09" width="30" height="1.6" fill="#333"/><rect x="24" y="615.95" width="6" height="1.6" fill="#333"/><rect x="24" y="624.80" width="6" height="1.6" fill="#333"/><rect x="24" y="633.66" width="6" height="1.6" fill="#333"/><rect x="24" y="642.51" width="6" height="1.6" fill="#333"/><rect x="19" y="651.37" width="11" height="1.6" fill="#333"/><rect x="24" y="660.23" width="6" height="1.6" fill="#333"/><rect x="24" y="669.08" width="6" height="1.6" fill="#333"/><rect x="24" y="677.94" width="6" height="1.6" fill="#333"/><rect x="24" y="686.79" width="6" height="1.6" fill="#333"/><rect x="0" y="695.65" width="30" height="1.6" fill="#333"/><rect x="24" y="704.51" width="6" height="1.6" fill="#333"/><rect x="24" y="713.36" width="6" height="1.6" fill="#333"/><rect x="24" y="722.22" width="6" height="1.6" fill="#333"/><rect x="24" y="731.07" width="6" height="1.6" fill="#333"/><rect x="19" y="739.93" width="11" height="1.6" fill="#333"/><rect x="24" y="748.79" width="6" height="1.6" fill="#333"/><rect x="24" y="757.64" width="6" height="1.6" fill="#333"/><rect x="24" y="766.50" width="6" height="1.6" fill="#333"/><rect x="24" y="775.35" width="6" height="1.6" fill="#333"/><rect x="0" y="784.21" width="30" height="1.6" fill="#333"/><rect x="24" y="793.07" width="6" height="1.6" fill="#333"/><rect x="24" y="801.92" width="6" height="1.6" fill="#333"/><rect x="24" y="810.78" width="6" height="1.6" fill="#333"/><rect x="24" y="819.63" width="6" height="1.6" fill="#333"/><rect x="19" y="828.49" width="11" height="1.6" fill="#333"/><rect x="24" y="837.35" width="6" height="1.6" fill="#333"/><rect x="24" y="846.20" width="6" height="1.6" fill="#333"/><rect x="24" y="855.06" width="6" height="1.6" fill="#333"/><rect x="24" y="863.91" width="6" height="1.6" fill="#333"/><rect x="0" y="872.77" width="30" height="1.6" fill="#333"/><rect x="24" y="881.63" width="6" height="1.6" fill="#333"/><rect x="24" y="890.48" width="6" height="1.6" fill="#333"/><rect x="24" y="899.34" width="6" height="1.6" fill="#333"/><rect x="24" y="908.19" width="6" height="1.6" fill="#333"/><rect x="19" y="917.05" width="11" height="1.6" fill="#333"/><rect x="24" y="925.91" width="6" height="1.6" fill="#333"/><rect x="24" y="934.76" width="6" height="1.6" fill="#333"/><rect x="24" y="943.62" width="6" height="1.6" fill="#333"/><rect x="24" y="952.47" width="6" height="1.6" fill="#333"/><rect x="0" y="961.33" width="30" height="1.6" fill="#333"/><rect x="24" y="970.19" width="6" height="1.6" fill="#333"/><rect x="24" y="979.04" width="6" height="1.6" fill="#333"/><rect x="24" y="987.90" width="6" height="1.6" fill="#333"/><rect x="24" y="996.75" width="6" height="1.6" fill="#333"/><rect x="19" y="1005.61" width="11" height="1.6" fill="#333"/><rect x="24" y="1014.47" width="6" height="1.6" fill="#333"/><rect x="24" y="1023.32" width="6" height="1.6" fill="#333"/><rect x="24" y="1032.18" width="6" height="1.6" fill="#333"/><rect x="24" y="1041.03" width="6" height="1.6" fill="#333"/><rect x="0" y="1049.89" width="30" height="1.6" fill="#333"/><rect x="24" y="1058.75" width="6" height="1.6" fill="#333"/><rect x="24" y="1067.60" width="6" height="1.6" fill="#333"/><rect x="24" y="1076.46" width="6" height="1.6" fill="#333"/><rect x="24" y="1085.31" width="6" height="1.6" fill="#333"/><rect x="19" y="1094.17" width="11" height="1.6" fill="#333"/><rect x="24" y="1103.03" width="6" height="1.6" fill="#333"/><rect x="24" y="1111.88" width="6" height="1.6" fill="#333"/><rect x="24" y="1120.74" width="6" height="1.6" fill="#333"/><rect x="24" y="1129.59" width="6" height="1.6" fill="#333"/><rect x="0" y="1138.45" width="30" height="1.6" fill="#333"/><rect x="24" y="1147.31" width="6" height="1.6" fill="#333"/><rect x="24" y="1156.16" width="6" height="1.6" fill="#333"/><rect x="24" y="1165.02" width="6" height="1.6" fill="#333"/><rect x="24" y="1173.87" width="6" height="1.6" fill="#333"/><rect x="19" y="1182.73" width="11" height="1.6" fill="#333"/><rect x="24" y="1191.59" width="6" height="1.6" fill="#333"/><rect x="24" y="1200.44" width="6" height="1.6" fill="#333"/><rect x="24" y="1209.30" width="6" height="1.6" fill="#333"/><rect x="24" y="1218.15" width="6" height="1.6" fill="#333"/><rect x="0" y="1227.01" width="30" height="1.6" fill="#333"/><rect x="24" y="1235.87" width="6" height="1.6" fill="#333"/><rect x="24" y="1244.72" width="6" height="1.6" fill="#333"/><rect x="24" y="1253.58" width="6" height="1.6" fill="#333"/><rect x="24" y="1262.43" width="6" height="1.6" fill="#333"/><rect x="19" y="1271.29" width="11" height="1.6" fill="#333"/><rect x="24" y="1280.15" width="6" height="1.6" fill="#333"/><rect x="24" y="1289.00" width="6" height="1.6" fill="#333"/><rect x="24" y="1297.86" width="6" height="1.6" fill="#333"/><rect x="24" y="1306.71" width="6" height="1.6" fill="#333"/><rect x="0" y="1315.57" width="30" height="1.6" fill="#333"/><rect x="24" y="1324.43" width="6" height="1.6" fill="#333"/><rect x="24" y="1333.28" width="6" height="1.6" fill="#333"/><rect x="24" y="1342.14" width="6" height="1.6" fill="#333"/><rect x="24" y="1350.99" width="6" height="1.6" fill="#333"/><rect x="19" y="1359.85" width="11" height="1.6" fill="#333"/><rect x="24" y="1368.71" width="6" height="1.6" fill="#333"/><rect x="24" y="1377.56" width="6" height="1.6" fill="#333"/><rect x="24" y="1386.42" width="6" height="1.6" fill="#333"/><rect x="24" y="1395.27" width="6" height="1.6" fill="#333"/><rect x="0" y="1404.13" width="30" height="1.6" fill="#333"/><rect x="24" y="1412.99" width="6" height="1.6" fill="#333"/><rect x="24" y="1421.84" width="6" height="1.6" fill="#333"/><rect x="24" y="1430.70" width="6" height="1.6" fill="#333"/><rect x="24" y="1439.55" width="6" height="1.6" fill="#333"/><rect x="19" y="1448.41" width="11" height="1.6" fill="#333"/><rect x="24" y="1457.27" width="6" height="1.6" fill="#333"/><rect x="24" y="1466.12" width="6" height="1.6" fill="#333"/><rect x="24" y="1474.98" width="6" height="1.6" fill="#333"/><rect x="24" y="1483.83" width="6" height="1.6" fill="#333"/><rect x="0" y="1492.69" width="30" height="1.6" fill="#333"/><rect x="24" y="1501.55" width="6" height="1.6" fill="#333"/><rect x="24" y="1510.40" width="6" height="1.6" fill="#333"/><rect x="24" y="1519.26" width="6" height="1.6" fill="#333"/><rect x="24" y="1528.11" width="6" height="1.6" fill="#333"/><rect x="19" y="1536.97" width="11" height="1.6" fill="#333"/><rect x="24" y="1545.83" width="6" height="1.6" fill="#333"/><rect x="24" y="1554.68" width="6" height="1.6" fill="#333"/><rect x="24" y="1563.54" width="6" height="1.6" fill="#333"/><rect x="24" y="1572.39" width="6" height="1.6" fill="#333"/><rect x="0" y="1581.25" width="30" height="1.6" fill="#333"/><rect x="24" y="1590.11" width="6" height="1.6" fill="#333"/><rect x="24" y="1598.96" width="6" height="1.6" fill="#333"/><rect x="24" y="1607.82" width="6" height="1.6" fill="#333"/><rect x="24" y="1616.67" width="6" height="1.6" fill="#333"/><rect x="19" y="1625.53" width="11" height="1.6" fill="#333"/><rect x="24" y="1634.39" width="6" height="1.6" fill="#333"/><rect x="24" y="1643.24" width="6" height="1.6" fill="#333"/><rect x="24" y="1652.10" width="6" height="1.6" fill="#333"/><rect x="24" y="1660.95" width="6" height="1.6" fill="#333"/><rect x="0" y="1669.81" width="30" height="1.6" fill="#333"/><rect x="24" y="1678.67" width="6" height="1.6" fill="#333"/><rect x="24" y="1687.52" width="6" height="1.6" fill="#333"/><rect x="24" y="1696.38" width="6" height="1.6" fill="#333"/><rect x="24" y="1705.23" width="6" height="1.6" fill="#333"/><rect x="19" y="1714.09" width="11" height="1.6" fill="#333"/><rect x="24" y="1722.95" width="6" height="1.6" fill="#333"/><rect x="24" y="1731.80" width="6" height="1.6" fill="#333"/><rect x="24" y="1740.66" width="6" height="1.6" fill="#333"/></svg><div style="position:absolute;left:195px;top:400.0px;width:0;height:0"><div style="position:absolute;left:0;top:0;transform-origin:0 0;transform:rotate(-90deg) translate(-100%,0);font-size:17.5px;letter-spacing:1.2px;line-height:1;color:#333;white-space:nowrap;padding:0 0 0 0">-40</div></div><div style="position:absolute;left:195px;top:488.5px;width:0;height:0"><div style="position:absolute;left:0;top:0;transform-origin:0 0;transform:rotate(-90deg) translate(-100%,0);font-size:17.5px;letter-spacing:1.2px;line-height:1;color:#333;white-space:nowrap;padding:0 0 0 0">-20</div></div><div style="position:absolute;left:195px;top:577.1px;width:0;height:0"><div style="position:absolute;left:0;top:0;transform-origin:0 0;transform:rotate(-90deg) translate(-100%,0);font-size:17.5px;letter-spacing:1.2px;line-height:1;color:#333;white-space:nowrap;padding:0 0 0 0">0</div></div><div style="position:absolute;left:195px;top:665.7px;width:0;height:0"><div style="position:absolute;left:0;top:0;transform-origin:0 0;transform:rotate(-90deg) translate(-100%,0);font-size:17.5px;letter-spacing:1.2px;line-height:1;color:#333;white-space:nowrap;padding:0 0 0 0">20</div></div><div style="position:absolute;left:195px;top:754.2px;width:0;height:0"><div style="position:absolute;left:0;top:0;transform-origin:0 0;transform:rotate(-90deg) translate(-100%,0);font-size:17.5px;letter-spacing:1.2px;line-height:1;color:#333;white-space:nowrap;padding:0 0 0 0">40</div></div><div style="position:absolute;left:195px;top:842.8px;width:0;height:0"><div style="position:absolute;left:0;top:0;transform-origin:0 0;transform:rotate(-90deg) translate(-100%,0);font-size:17.5px;letter-spacing:1.2px;line-height:1;color:#333;white-space:nowrap;padding:0 0 0 0">60</div></div><div style="position:absolute;left:195px;top:931.3px;width:0;height:0"><div style="position:absolute;left:0;top:0;transform-origin:0 0;transform:rotate(-90deg) translate(-100%,0);font-size:17.5px;letter-spacing:1.2px;line-height:1;color:#333;white-space:nowrap;padding:0 0 0 0">80</div></div><div style="position:absolute;left:195px;top:1019.9px;width:0;height:0"><div style="position:absolute;left:0;top:0;transform-origin:0 0;transform:rotate(-90deg) translate(-100%,0);font-size:17.5px;letter-spacing:1.2px;line-height:1;color:#333;white-space:nowrap;padding:0 0 0 0">100</div></div><div style="position:absolute;left:195px;top:1108.5px;width:0;height:0"><div style="position:absolute;left:0;top:0;transform-origin:0 0;transform:rotate(-90deg) translate(-100%,0);font-size:17.5px;letter-spacing:1.2px;line-height:1;color:#333;white-space:nowrap;padding:0 0 0 0">120</div></div><div style="position:absolute;left:195px;top:1197.0px;width:0;height:0"><div style="position:absolute;left:0;top:0;transform-origin:0 0;transform:rotate(-90deg) translate(-100%,0);font-size:17.5px;letter-spacing:1.2px;line-height:1;color:#333;white-space:nowrap;padding:0 0 0 0">140</div></div><div style="position:absolute;left:195px;top:1285.6px;width:0;height:0"><div style="position:absolute;left:0;top:0;transform-origin:0 0;transform:rotate(-90deg) translate(-100%,0);font-size:17.5px;letter-spacing:1.2px;line-height:1;color:#333;white-space:nowrap;padding:0 0 0 0">160</div></div><div style="position:absolute;left:195px;top:1374.1px;width:0;height:0"><div style="position:absolute;left:0;top:0;transform-origin:0 0;transform:rotate(-90deg) translate(-100%,0);font-size:17.5px;letter-spacing:1.2px;line-height:1;color:#333;white-space:nowrap;padding:0 0 0 0">180</div></div><div style="position:absolute;left:195px;top:1462.7px;width:0;height:0"><div style="position:absolute;left:0;top:0;transform-origin:0 0;transform:rotate(-90deg) translate(-100%,0);font-size:17.5px;letter-spacing:1.2px;line-height:1;color:#333;white-space:nowrap;padding:0 0 0 0">200</div></div><div style="position:absolute;left:195px;top:1551.3px;width:0;height:0"><div style="position:absolute;left:0;top:0;transform-origin:0 0;transform:rotate(-90deg) translate(-100%,0);font-size:17.5px;letter-spacing:1.2px;line-height:1;color:#333;white-space:nowrap;padding:0 0 0 0">220</div></div><div style="position:absolute;left:195px;top:1639.8px;width:0;height:0"><div style="position:absolute;left:0;top:0;transform-origin:0 0;transform:rotate(-90deg) translate(-100%,0);font-size:17.5px;letter-spacing:1.2px;line-height:1;color:#333;white-space:nowrap;padding:0 0 0 0">240</div></div><div style="position:absolute;left:195px;top:1728.4px;width:0;height:0"><div style="position:absolute;left:0;top:0;transform-origin:0 0;transform:rotate(-90deg) translate(-100%,0);font-size:17.5px;letter-spacing:1.2px;line-height:1;color:#333;white-space:nowrap;padding:0 0 0 0">260</div></div><div style="position:absolute;left:195px;top:1816.9px;width:0;height:0"><div style="position:absolute;left:0;top:0;transform-origin:0 0;transform:rotate(-90deg) translate(-100%,0);font-size:17.5px;letter-spacing:1.2px;line-height:1;color:#333;white-space:nowrap;padding:0 0 0 0">280</div></div><div style="position:absolute;left:195px;top:1905.5px;width:0;height:0"><div style="position:absolute;left:0;top:0;transform-origin:0 0;transform:rotate(-90deg) translate(-100%,0);font-size:17.5px;letter-spacing:1.2px;line-height:1;color:#333;white-space:nowrap;padding:0 0 0 0">300</div></div><div style="position:absolute;left:195px;top:1994.1px;width:0;height:0"><div style="position:absolute;left:0;top:0;transform-origin:0 0;transform:rotate(-90deg) translate(-100%,0);font-size:17.5px;letter-spacing:1.2px;line-height:1;color:#333;white-space:nowrap;padding:0 0 0 0">320</div></div><div style="position:absolute;left:190px;top:845px;width:32px;height:2px;background:#d92020"></div><div style="position:absolute;left:558px;top:588px;width:1912px;height:1237px;background:#969696"></div><div style="position:absolute;left:542px;top:572px;width:1912px;height:1238px;background:#fff"></div><svg style="position:absolute;left:850px;top:640px" width="1000" height="1080" viewBox="0 0 1000 1080"><defs><clipPath id="mclip"><polygon points="437,33 447,36 709,200 776,223 810,242 805,265 841,259 845,344 836,409 816,465 833,467 844,504 856,533 890,580 920,623 926,648 907,665 909,682 933,708 937,742 948,793 951,818 935,844 903,874 839,925 814,946 788,993 774,1026 765,1047 716,1021 650,992 601,965 530,936 516,933 476,943 442,929 419,878 447,851 440,833 410,840 405,823 424,787 440,771 403,749 362,762 376,787 380,823 339,856 321,883 284,895 261,878 298,810 302,792 92,686 87,688 59,724 23,703 222,356 238,366 275,283 291,287 300,252 313,233 360,147 390,98 437,33"/></clipPath><pattern id="dotp" width="6" height="8" patternUnits="userSpaceOnUse" y="-4"><rect x="0" y="2.6" width="6" height="2.8" fill="#7d9a3a" opacity="0.85"/><circle cx="3" cy="2.2" r="2.4" fill="#bcd700" stroke="#7a9236" stroke-width="0.9"/><circle cx="0" cy="5.8" r="2.4" fill="#b2cf00" stroke="#7a9236" stroke-width="0.9"/><circle cx="6" cy="5.8" r="2.4" fill="#b2cf00" stroke="#7a9236" stroke-width="0.9"/></pattern><mask id="wzmask" maskUnits="userSpaceOnUse" x="0" y="0" width="1000" height="1080"><rect x="0" y="0" width="1000" height="1080" fill="#fff"/><polygon points="342,154 418,174 412,186 392,252 466,266 455,285 433,312 419,329 397,348 381,422 367,422 372,400 318,389 300,337 300,252 313,233" fill="#3a3a3a"/><polygon points="449,384 499,376 532,392 554,409 565,458 559,475 620,502 606,521 559,505 504,450 455,422 441,411" fill="#3a3a3a"/><polygon points="548,304 568,312 554,359 532,356" fill="#3a3a3a"/><polygon points="581,323 620,337 614,345 578,332" fill="#3a3a3a"/><polygon points="516,733 551,709 584,722 645,755 678,783 656,832 634,810 595,794 562,772 546,766" fill="#3a3a3a"/><polygon points="571,830 609,849 634,860 634,901 584,901 575,860" fill="#3a3a3a"/><polygon points="639,904 694,928 689,956 645,937" fill="#3a3a3a"/><polygon points="694,821 801,857 793,882 689,849" fill="#3a3a3a"/><polygon points="711,703 755,710 750,750 706,740" fill="#3a3a3a"/><polygon points="516,904 557,917 549,948 513,931" fill="#3a3a3a"/><polygon points="722,1014 771,1025 766,1047 716,1027" fill="#3a3a3a"/><polygon points="747,223 841,259 840,300 790,359 739,350" fill="#3a3a3a"/><polygon points="832,495 856,533 890,580 926,649 870,649 840,570" fill="#3a3a3a"/><polygon points="883,700 933,708 937,751 885,751" fill="#3a3a3a"/></mask><clipPath id="wzclip"><polygon points="342,154 418,174 412,186 392,252 466,266 455,285 433,312 419,329 397,348 381,422 367,422 372,400 318,389 300,337 300,252 313,233"/><polygon points="449,384 499,376 532,392 554,409 565,458 559,475 620,502 606,521 559,505 504,450 455,422 441,411"/><polygon points="548,304 568,312 554,359 532,356"/><polygon points="581,323 620,337 614,345 578,332"/><polygon points="516,733 551,709 584,722 645,755 678,783 656,832 634,810 595,794 562,772 546,766"/><polygon points="571,830 609,849 634,860 634,901 584,901 575,860"/><polygon points="639,904 694,928 689,956 645,937"/><polygon points="694,821 801,857 793,882 689,849"/><polygon points="711,703 755,710 750,750 706,740"/><polygon points="516,904 557,917 549,948 513,931"/><polygon points="722,1014 771,1025 766,1047 716,1027"/><polygon points="747,223 841,259 840,300 790,359 739,350"/><polygon points="832,495 856,533 890,580 926,649 870,649 840,570"/><polygon points="883,700 933,708 937,751 885,751"/></clipPath></defs><g clip-path="url(#mclip)"><rect x="0" y="0" width="1000" height="1080" fill="#c9ecc6"/><g transform="translate(480,540) rotate(29)"><rect x="-297" y="-426.0" width="54" height="10" fill="#1e9a50"/><rect x="-237" y="-426.0" width="54" height="10" fill="#c9ecc6"/><rect x="-177" y="-426.0" width="66" height="10" fill="#1e9a50"/><rect x="-105" y="-426.0" width="62" height="10" fill="#c9ecc6"/><rect x="-37" y="-426.0" width="66" height="10" fill="#9edc9e"/><rect x="35" y="-426.0" width="54" height="10" fill="#c9ecc6"/><rect x="95" y="-426.0" width="50" height="10" fill="#c9ecc6"/><rect x="-297" y="-408.0" width="54" height="10" fill="#c9ecc6"/><rect x="-237" y="-408.0" width="54" height="10" fill="#f3faf2"/><rect x="-177" y="-408.0" width="66" height="10" fill="#f3faf2"/><rect x="-105" y="-408.0" width="62" height="10" fill="#1e9a50"/><rect x="-37" y="-408.0" width="66" height="10" fill="#c9ecc6"/><rect x="35" y="-408.0" width="54" height="10" fill="#62cb8c"/><rect x="-297" y="-390.0" width="54" height="10" fill="#1e9a50"/><rect x="-237" y="-390.0" width="54" height="10" fill="#f3faf2"/><rect x="-177" y="-390.0" width="66" height="10" fill="#9edc9e"/><rect x="-105" y="-390.0" width="62" height="10" fill="#f3faf2"/><rect x="-37" y="-390.0" width="66" height="10" fill="#62cb8c"/><rect x="35" y="-390.0" width="54" height="10" fill="#9edc9e"/><rect x="-297" y="-372.0" width="54" height="10" fill="#62cb8c"/><rect x="-237" y="-372.0" width="54" height="10" fill="#62cb8c"/><rect x="-177" y="-372.0" width="66" height="10" fill="#62cb8c"/><rect x="-105" y="-372.0" width="62" height="10" fill="#9edc9e"/><rect x="-37" y="-372.0" width="66" height="10" fill="#c9ecc6"/><rect x="35" y="-372.0" width="54" height="10" fill="#62cb8c"/><rect x="219" y="-372.0" width="58" height="10" fill="#9edc9e"/><rect x="-297" y="-354.0" width="54" height="10" fill="#62cb8c"/><rect x="-237" y="-354.0" width="54" height="10" fill="#c9ecc6"/><rect x="-177" y="-354.0" width="66" height="10" fill="#c9ecc6"/><rect x="-105" y="-354.0" width="62" height="10" fill="#1e9a50"/><rect x="-37" y="-354.0" width="66" height="10" fill="#c9ecc6"/><rect x="35" y="-354.0" width="54" height="10" fill="#62cb8c"/><rect x="219" y="-354.0" width="58" height="10" fill="#62cb8c"/><rect x="-297" y="-336.0" width="54" height="10" fill="#c9ecc6"/><rect x="-237" y="-336.0" width="54" height="10" fill="#c9ecc6"/><rect x="-177" y="-336.0" width="66" height="10" fill="#c9ecc6"/><rect x="-105" y="-336.0" width="62" height="10" fill="#f3faf2"/><rect x="-37" y="-336.0" width="66" height="10" fill="#f3faf2"/><rect x="35" y="-336.0" width="54" height="10" fill="#c9ecc6"/><rect x="219" y="-336.0" width="58" height="10" fill="#62cb8c"/><rect x="-297" y="-318.0" width="54" height="10" fill="#62cb8c"/><rect x="-237" y="-318.0" width="54" height="10" fill="#c9ecc6"/><rect x="-177" y="-318.0" width="66" height="10" fill="#1e9a50"/><rect x="-105" y="-318.0" width="62" height="10" fill="#f3faf2"/><rect x="-37" y="-318.0" width="66" height="10" fill="#62cb8c"/><rect x="35" y="-318.0" width="54" height="10" fill="#62cb8c"/><rect x="95" y="-318.0" width="50" height="10" fill="#c9ecc6"/><rect x="219" y="-318.0" width="58" height="10" fill="#62cb8c"/><rect x="-297" y="-300.0" width="54" height="10" fill="#c9ecc6"/><rect x="-237" y="-300.0" width="54" height="10" fill="#62cb8c"/><rect x="-177" y="-300.0" width="66" height="10" fill="#c9ecc6"/><rect x="-105" y="-300.0" width="62" height="10" fill="#c9ecc6"/><rect x="-37" y="-300.0" width="66" height="10" fill="#f3faf2"/><rect x="35" y="-300.0" width="54" height="10" fill="#c9ecc6"/><rect x="95" y="-300.0" width="50" height="10" fill="#c9ecc6"/><rect x="151" y="-300.0" width="62" height="10" fill="#c9ecc6"/><rect x="219" y="-300.0" width="58" height="10" fill="#62cb8c"/><rect x="-237" y="-282.0" width="54" height="10" fill="#c9ecc6"/><rect x="-177" y="-282.0" width="66" height="10" fill="#9edc9e"/><rect x="-105" y="-282.0" width="62" height="10" fill="#f3faf2"/><rect x="-37" y="-282.0" width="66" height="10" fill="#62cb8c"/><rect x="35" y="-282.0" width="54" height="10" fill="#9edc9e"/><rect x="95" y="-282.0" width="50" height="10" fill="#f3faf2"/><rect x="151" y="-282.0" width="62" height="10" fill="#c9ecc6"/><rect x="219" y="-282.0" width="58" height="10" fill="#62cb8c"/><rect x="-237" y="-264.0" width="54" height="10" fill="#c9ecc6"/><rect x="-177" y="-264.0" width="66" height="10" fill="#62cb8c"/><rect x="-105" y="-264.0" width="62" height="10" fill="#62cb8c"/><rect x="-37" y="-264.0" width="66" height="10" fill="#f3faf2"/><rect x="35" y="-264.0" width="54" height="10" fill="#c9ecc6"/><rect x="95" y="-264.0" width="50" height="10" fill="#62cb8c"/><rect x="151" y="-264.0" width="62" height="10" fill="#1e9a50"/><rect x="219" y="-264.0" width="58" height="10" fill="#62cb8c"/><rect x="-237" y="-246.0" width="54" height="10" fill="#f3faf2"/><rect x="-177" y="-246.0" width="66" height="10" fill="#c9ecc6"/><rect x="-105" y="-246.0" width="62" height="10" fill="#62cb8c"/><rect x="-37" y="-246.0" width="66" height="10" fill="#1e9a50"/><rect x="35" y="-246.0" width="54" height="10" fill="#1e9a50"/><rect x="95" y="-246.0" width="50" height="10" fill="#c9ecc6"/><rect x="151" y="-246.0" width="62" height="10" fill="#c9ecc6"/><rect x="219" y="-246.0" width="58" height="10" fill="#c9ecc6"/><rect x="-237" y="-228.0" width="54" height="10" fill="#62cb8c"/><rect x="-177" y="-228.0" width="66" height="10" fill="#62cb8c"/><rect x="-105" y="-228.0" width="62" height="10" fill="#c9ecc6"/><rect x="-37" y="-228.0" width="66" height="10" fill="#1e9a50"/><rect x="35" y="-228.0" width="54" height="10" fill="#62cb8c"/><rect x="95" y="-228.0" width="50" height="10" fill="#62cb8c"/><rect x="151" y="-228.0" width="62" height="10" fill="#62cb8c"/><rect x="219" y="-228.0" width="58" height="10" fill="#c9ecc6"/><rect x="283" y="-228.0" width="54" height="10" fill="#c9ecc6"/><rect x="-177" y="-210.0" width="66" height="10" fill="#1e9a50"/><rect x="-105" y="-210.0" width="62" height="10" fill="#f3faf2"/><rect x="-37" y="-210.0" width="66" height="10" fill="#c9ecc6"/><rect x="35" y="-210.0" width="54" height="10" fill="#1e9a50"/><rect x="95" y="-210.0" width="50" height="10" fill="#62cb8c"/><rect x="151" y="-210.0" width="62" height="10" fill="#62cb8c"/><rect x="219" y="-210.0" width="58" height="10" fill="#1e9a50"/><rect x="283" y="-210.0" width="54" height="10" fill="#62cb8c"/><rect x="-177" y="-192.0" width="66" height="10" fill="#9edc9e"/><rect x="-105" y="-192.0" width="62" height="10" fill="#1e9a50"/><rect x="-37" y="-192.0" width="66" height="10" fill="#c9ecc6"/><rect x="35" y="-192.0" width="54" height="10" fill="#62cb8c"/><rect x="95" y="-192.0" width="50" height="10" fill="#c9ecc6"/><rect x="151" y="-192.0" width="62" height="10" fill="#c9ecc6"/><rect x="219" y="-192.0" width="58" height="10" fill="#62cb8c"/><rect x="343" y="-192.0" width="50" height="10" fill="#1e9a50"/><rect x="-177" y="-174.0" width="66" height="10" fill="#c9ecc6"/><rect x="-105" y="-174.0" width="62" height="10" fill="#9edc9e"/><rect x="-37" y="-174.0" width="66" height="10" fill="#f3faf2"/><rect x="35" y="-174.0" width="54" height="10" fill="#62cb8c"/><rect x="95" y="-174.0" width="50" height="10" fill="#9edc9e"/><rect x="151" y="-174.0" width="62" height="10" fill="#1e9a50"/><rect x="219" y="-174.0" width="58" height="10" fill="#c9ecc6"/><rect x="283" y="-174.0" width="54" height="10" fill="#62cb8c"/><rect x="343" y="-174.0" width="50" height="10" fill="#c9ecc6"/><rect x="-177" y="-156.0" width="66" height="10" fill="#c9ecc6"/><rect x="-105" y="-156.0" width="62" height="10" fill="#9edc9e"/><rect x="35" y="-156.0" width="54" height="10" fill="#f3faf2"/><rect x="95" y="-156.0" width="50" height="10" fill="#62cb8c"/><rect x="151" y="-156.0" width="62" height="10" fill="#62cb8c"/><rect x="219" y="-156.0" width="58" height="10" fill="#62cb8c"/><rect x="283" y="-156.0" width="54" height="10" fill="#1e9a50"/><rect x="399" y="-156.0" width="66" height="10" fill="#62cb8c"/><rect x="-369" y="-138.0" width="66" height="10" fill="#9edc9e"/><rect x="-177" y="-138.0" width="66" height="10" fill="#c9ecc6"/><rect x="35" y="-138.0" width="54" height="10" fill="#9edc9e"/><rect x="95" y="-138.0" width="50" height="10" fill="#1e9a50"/><rect x="151" y="-138.0" width="62" height="10" fill="#1e9a50"/><rect x="219" y="-138.0" width="58" height="10" fill="#c9ecc6"/><rect x="283" y="-138.0" width="54" height="10" fill="#62cb8c"/><rect x="399" y="-138.0" width="66" height="10" fill="#f3faf2"/><rect x="-369" y="-120.0" width="66" height="10" fill="#c9ecc6"/><rect x="-297" y="-120.0" width="54" height="10" fill="#c9ecc6"/><rect x="-177" y="-120.0" width="66" height="10" fill="#62cb8c"/><rect x="35" y="-120.0" width="54" height="10" fill="#c9ecc6"/><rect x="95" y="-120.0" width="50" height="10" fill="#c9ecc6"/><rect x="151" y="-120.0" width="62" height="10" fill="#c9ecc6"/><rect x="219" y="-120.0" width="58" height="10" fill="#62cb8c"/><rect x="283" y="-120.0" width="54" height="10" fill="#62cb8c"/><rect x="343" y="-120.0" width="50" height="10" fill="#9edc9e"/><rect x="-369" y="-102.0" width="66" height="10" fill="#c9ecc6"/><rect x="-297" y="-102.0" width="54" height="10" fill="#c9ecc6"/><rect x="-177" y="-102.0" width="66" height="10" fill="#c9ecc6"/><rect x="95" y="-102.0" width="50" height="10" fill="#1e9a50"/><rect x="151" y="-102.0" width="62" height="10" fill="#c9ecc6"/><rect x="219" y="-102.0" width="58" height="10" fill="#1e9a50"/><rect x="283" y="-102.0" width="54" height="10" fill="#c9ecc6"/><rect x="343" y="-102.0" width="50" height="10" fill="#c9ecc6"/><rect x="399" y="-102.0" width="66" height="10" fill="#9edc9e"/><rect x="-369" y="-84.0" width="66" height="10" fill="#62cb8c"/><rect x="-297" y="-84.0" width="54" height="10" fill="#62cb8c"/><rect x="-177" y="-84.0" width="66" height="10" fill="#c9ecc6"/><rect x="-105" y="-84.0" width="62" height="10" fill="#1e9a50"/><rect x="-37" y="-84.0" width="66" height="10" fill="#c9ecc6"/><rect x="95" y="-84.0" width="50" height="10" fill="#c9ecc6"/><rect x="151" y="-84.0" width="62" height="10" fill="#62cb8c"/><rect x="219" y="-84.0" width="58" height="10" fill="#62cb8c"/><rect x="283" y="-84.0" width="54" height="10" fill="#c9ecc6"/><rect x="343" y="-84.0" width="50" height="10" fill="#c9ecc6"/><rect x="399" y="-84.0" width="66" height="10" fill="#c9ecc6"/><rect x="471" y="-84.0" width="50" height="10" fill="#62cb8c"/><rect x="-297" y="-66.0" width="54" height="10" fill="#9edc9e"/><rect x="-177" y="-66.0" width="66" height="10" fill="#c9ecc6"/><rect x="-105" y="-66.0" width="62" height="10" fill="#c9ecc6"/><rect x="-37" y="-66.0" width="66" height="10" fill="#62cb8c"/><rect x="35" y="-66.0" width="54" height="10" fill="#62cb8c"/><rect x="95" y="-66.0" width="50" height="10" fill="#c9ecc6"/><rect x="151" y="-66.0" width="62" height="10" fill="#9edc9e"/><rect x="219" y="-66.0" width="58" height="10" fill="#c9ecc6"/><rect x="283" y="-66.0" width="54" height="10" fill="#62cb8c"/><rect x="343" y="-66.0" width="50" height="10" fill="#c9ecc6"/><rect x="399" y="-66.0" width="66" height="10" fill="#9edc9e"/><rect x="471" y="-66.0" width="50" height="10" fill="#1e9a50"/><rect x="-369" y="-48.0" width="66" height="10" fill="#c9ecc6"/><rect x="-297" y="-48.0" width="54" height="10" fill="#1e9a50"/><rect x="-237" y="-48.0" width="54" height="10" fill="#62cb8c"/><rect x="-177" y="-48.0" width="66" height="10" fill="#62cb8c"/><rect x="-105" y="-48.0" width="62" height="10" fill="#1e9a50"/><rect x="-37" y="-48.0" width="66" height="10" fill="#c9ecc6"/><rect x="35" y="-48.0" width="54" height="10" fill="#1e9a50"/><rect x="95" y="-48.0" width="50" height="10" fill="#c9ecc6"/><rect x="151" y="-48.0" width="62" height="10" fill="#c9ecc6"/><rect x="219" y="-48.0" width="58" height="10" fill="#c9ecc6"/><rect x="283" y="-48.0" width="54" height="10" fill="#c9ecc6"/><rect x="343" y="-48.0" width="50" height="10" fill="#62cb8c"/><rect x="399" y="-48.0" width="66" height="10" fill="#62cb8c"/><rect x="-369" y="-30.0" width="66" height="10" fill="#62cb8c"/><rect x="-297" y="-30.0" width="54" height="10" fill="#1e9a50"/><rect x="-237" y="-30.0" width="54" height="10" fill="#62cb8c"/><rect x="-177" y="-30.0" width="66" height="10" fill="#62cb8c"/><rect x="-105" y="-30.0" width="62" height="10" fill="#62cb8c"/><rect x="-37" y="-30.0" width="66" height="10" fill="#9edc9e"/><rect x="35" y="-30.0" width="54" height="10" fill="#c9ecc6"/><rect x="95" y="-30.0" width="50" height="10" fill="#9edc9e"/><rect x="151" y="-30.0" width="62" height="10" fill="#9edc9e"/><rect x="219" y="-30.0" width="58" height="10" fill="#c9ecc6"/><rect x="283" y="-30.0" width="54" height="10" fill="#62cb8c"/><rect x="343" y="-30.0" width="50" height="10" fill="#1e9a50"/><rect x="399" y="-30.0" width="66" height="10" fill="#c9ecc6"/><rect x="471" y="-30.0" width="50" height="10" fill="#9edc9e"/><rect x="-369" y="-12.0" width="66" height="10" fill="#c9ecc6"/><rect x="-297" y="-12.0" width="54" height="10" fill="#f3faf2"/><rect x="-237" y="-12.0" width="54" height="10" fill="#c9ecc6"/><rect x="-177" y="-12.0" width="66" height="10" fill="#9edc9e"/><rect x="-105" y="-12.0" width="62" height="10" fill="#1e9a50"/><rect x="-37" y="-12.0" width="66" height="10" fill="#9edc9e"/><rect x="35" y="-12.0" width="54" height="10" fill="#62cb8c"/><rect x="95" y="-12.0" width="50" height="10" fill="#c9ecc6"/><rect x="151" y="-12.0" width="62" height="10" fill="#62cb8c"/><rect x="219" y="-12.0" width="58" height="10" fill="#62cb8c"/><rect x="283" y="-12.0" width="54" height="10" fill="#c9ecc6"/><rect x="343" y="-12.0" width="50" height="10" fill="#1e9a50"/><rect x="399" y="-12.0" width="66" height="10" fill="#f3faf2"/><rect x="471" y="-12.0" width="50" height="10" fill="#9edc9e"/><rect x="527" y="-12.0" width="66" height="10" fill="#c9ecc6"/><rect x="-369" y="6.0" width="66" height="10" fill="#62cb8c"/><rect x="-297" y="6.0" width="54" height="10" fill="#62cb8c"/><rect x="-237" y="6.0" width="54" height="10" fill="#9edc9e"/><rect x="-177" y="6.0" width="66" height="10" fill="#f3faf2"/><rect x="-105" y="6.0" width="62" height="10" fill="#62cb8c"/><rect x="-37" y="6.0" width="66" height="10" fill="#62cb8c"/><rect x="35" y="6.0" width="54" height="10" fill="#62cb8c"/><rect x="95" y="6.0" width="50" height="10" fill="#f3faf2"/><rect x="151" y="6.0" width="62" height="10" fill="#62cb8c"/><rect x="219" y="6.0" width="58" height="10" fill="#f3faf2"/><rect x="283" y="6.0" width="54" height="10" fill="#f3faf2"/><rect x="343" y="6.0" width="50" height="10" fill="#62cb8c"/><rect x="399" y="6.0" width="66" height="10" fill="#f3faf2"/><rect x="471" y="6.0" width="50" height="10" fill="#1e9a50"/><rect x="527" y="6.0" width="66" height="10" fill="#62cb8c"/><rect x="-369" y="24.0" width="66" height="10" fill="#f3faf2"/><rect x="-297" y="24.0" width="54" height="10" fill="#c9ecc6"/><rect x="-237" y="24.0" width="54" height="10" fill="#c9ecc6"/><rect x="-177" y="24.0" width="66" height="10" fill="#9edc9e"/><rect x="-105" y="24.0" width="62" height="10" fill="#62cb8c"/><rect x="-37" y="24.0" width="66" height="10" fill="#c9ecc6"/><rect x="35" y="24.0" width="54" height="10" fill="#c9ecc6"/><rect x="95" y="24.0" width="50" height="10" fill="#62cb8c"/><rect x="151" y="24.0" width="62" height="10" fill="#c9ecc6"/><rect x="219" y="24.0" width="58" height="10" fill="#c9ecc6"/><rect x="343" y="24.0" width="50" height="10" fill="#9edc9e"/><rect x="399" y="24.0" width="66" height="10" fill="#62cb8c"/><rect x="471" y="24.0" width="50" height="10" fill="#f3faf2"/><rect x="527" y="24.0" width="66" height="10" fill="#62cb8c"/><rect x="-369" y="42.0" width="66" height="10" fill="#62cb8c"/><rect x="-297" y="42.0" width="54" height="10" fill="#9edc9e"/><rect x="-237" y="42.0" width="54" height="10" fill="#9edc9e"/><rect x="-177" y="42.0" width="66" height="10" fill="#62cb8c"/><rect x="-105" y="42.0" width="62" height="10" fill="#1e9a50"/><rect x="-37" y="42.0" width="66" height="10" fill="#62cb8c"/><rect x="35" y="42.0" width="54" height="10" fill="#62cb8c"/><rect x="95" y="42.0" width="50" height="10" fill="#c9ecc6"/><rect x="151" y="42.0" width="62" height="10" fill="#c9ecc6"/><rect x="219" y="42.0" width="58" height="10" fill="#62cb8c"/><rect x="343" y="42.0" width="50" height="10" fill="#c9ecc6"/><rect x="399" y="42.0" width="66" height="10" fill="#62cb8c"/><rect x="471" y="42.0" width="50" height="10" fill="#1e9a50"/><rect x="527" y="42.0" width="66" height="10" fill="#62cb8c"/><rect x="-369" y="60.0" width="66" height="10" fill="#62cb8c"/><rect x="-297" y="60.0" width="54" height="10" fill="#1e9a50"/><rect x="-237" y="60.0" width="54" height="10" fill="#c9ecc6"/><rect x="-177" y="60.0" width="66" height="10" fill="#c9ecc6"/><rect x="-105" y="60.0" width="62" height="10" fill="#62cb8c"/><rect x="-37" y="60.0" width="66" height="10" fill="#62cb8c"/><rect x="35" y="60.0" width="54" height="10" fill="#f3faf2"/><rect x="95" y="60.0" width="50" height="10" fill="#c9ecc6"/><rect x="151" y="60.0" width="62" height="10" fill="#62cb8c"/><rect x="219" y="60.0" width="58" height="10" fill="#f3faf2"/><rect x="283" y="60.0" width="54" height="10" fill="#c9ecc6"/><rect x="343" y="60.0" width="50" height="10" fill="#c9ecc6"/><rect x="399" y="60.0" width="66" height="10" fill="#c9ecc6"/><rect x="471" y="60.0" width="50" height="10" fill="#62cb8c"/><rect x="527" y="60.0" width="66" height="10" fill="#c9ecc6"/><rect x="-369" y="78.0" width="66" height="10" fill="#9edc9e"/><rect x="-297" y="78.0" width="54" height="10" fill="#62cb8c"/><rect x="-237" y="78.0" width="54" height="10" fill="#c9ecc6"/><rect x="-177" y="78.0" width="66" height="10" fill="#f3faf2"/><rect x="-105" y="78.0" width="62" height="10" fill="#f3faf2"/><rect x="-37" y="78.0" width="66" height="10" fill="#9edc9e"/><rect x="35" y="78.0" width="54" height="10" fill="#62cb8c"/><rect x="95" y="78.0" width="50" height="10" fill="#c9ecc6"/><rect x="151" y="78.0" width="62" height="10" fill="#c9ecc6"/><rect x="219" y="78.0" width="58" height="10" fill="#9edc9e"/><rect x="283" y="78.0" width="54" height="10" fill="#9edc9e"/><rect x="343" y="78.0" width="50" height="10" fill="#c9ecc6"/><rect x="399" y="78.0" width="66" height="10" fill="#c9ecc6"/><rect x="471" y="78.0" width="50" height="10" fill="#f3faf2"/><rect x="527" y="78.0" width="66" height="10" fill="#62cb8c"/><rect x="-369" y="96.0" width="66" height="10" fill="#62cb8c"/><rect x="-297" y="96.0" width="54" height="10" fill="#9edc9e"/><rect x="-237" y="96.0" width="54" height="10" fill="#9edc9e"/><rect x="-177" y="96.0" width="66" height="10" fill="#9edc9e"/><rect x="-105" y="96.0" width="62" height="10" fill="#1e9a50"/><rect x="-37" y="96.0" width="66" height="10" fill="#c9ecc6"/><rect x="35" y="96.0" width="54" height="10" fill="#62cb8c"/><rect x="95" y="96.0" width="50" height="10" fill="#f3faf2"/><rect x="151" y="96.0" width="62" height="10" fill="#c9ecc6"/><rect x="219" y="96.0" width="58" height="10" fill="#62cb8c"/><rect x="283" y="96.0" width="54" height="10" fill="#62cb8c"/><rect x="343" y="96.0" width="50" height="10" fill="#c9ecc6"/><rect x="399" y="96.0" width="66" height="10" fill="#62cb8c"/><rect x="471" y="96.0" width="50" height="10" fill="#62cb8c"/><rect x="527" y="96.0" width="66" height="10" fill="#f3faf2"/><rect x="-369" y="114.0" width="66" height="10" fill="#c9ecc6"/><rect x="-297" y="114.0" width="54" height="10" fill="#62cb8c"/><rect x="-237" y="114.0" width="54" height="10" fill="#9edc9e"/><rect x="-177" y="114.0" width="66" height="10" fill="#1e9a50"/><rect x="-105" y="114.0" width="62" height="10" fill="#9edc9e"/><rect x="-37" y="114.0" width="66" height="10" fill="#62cb8c"/><rect x="35" y="114.0" width="54" height="10" fill="#62cb8c"/><rect x="95" y="114.0" width="50" height="10" fill="#62cb8c"/><rect x="283" y="114.0" width="54" height="10" fill="#c9ecc6"/><rect x="343" y="114.0" width="50" height="10" fill="#f3faf2"/><rect x="399" y="114.0" width="66" height="10" fill="#f3faf2"/><rect x="471" y="114.0" width="50" height="10" fill="#62cb8c"/><rect x="-369" y="132.0" width="66" height="10" fill="#c9ecc6"/><rect x="-297" y="132.0" width="54" height="10" fill="#62cb8c"/><rect x="-237" y="132.0" width="54" height="10" fill="#9edc9e"/><rect x="-177" y="132.0" width="66" height="10" fill="#62cb8c"/><rect x="-105" y="132.0" width="62" height="10" fill="#62cb8c"/><rect x="-37" y="132.0" width="66" height="10" fill="#c9ecc6"/><rect x="35" y="132.0" width="54" height="10" fill="#62cb8c"/><rect x="95" y="132.0" width="50" height="10" fill="#9edc9e"/><rect x="283" y="132.0" width="54" height="10" fill="#62cb8c"/><rect x="471" y="132.0" width="50" height="10" fill="#62cb8c"/><rect x="-369" y="150.0" width="66" height="10" fill="#62cb8c"/><rect x="-297" y="150.0" width="54" height="10" fill="#9edc9e"/><rect x="-237" y="150.0" width="54" height="10" fill="#c9ecc6"/><rect x="-177" y="150.0" width="66" height="10" fill="#f3faf2"/><rect x="-105" y="150.0" width="62" height="10" fill="#c9ecc6"/><rect x="-37" y="150.0" width="66" height="10" fill="#62cb8c"/><rect x="35" y="150.0" width="54" height="10" fill="#c9ecc6"/><rect x="95" y="150.0" width="50" height="10" fill="#c9ecc6"/><rect x="283" y="150.0" width="54" height="10" fill="#c9ecc6"/><rect x="399" y="150.0" width="66" height="10" fill="#c9ecc6"/><rect x="471" y="150.0" width="50" height="10" fill="#9edc9e"/><rect x="-369" y="168.0" width="66" height="10" fill="#9edc9e"/><rect x="-297" y="168.0" width="54" height="10" fill="#62cb8c"/><rect x="-237" y="168.0" width="54" height="10" fill="#9edc9e"/><rect x="-177" y="168.0" width="66" height="10" fill="#1e9a50"/><rect x="-105" y="168.0" width="62" height="10" fill="#c9ecc6"/><rect x="-37" y="168.0" width="66" height="10" fill="#f3faf2"/><rect x="35" y="168.0" width="54" height="10" fill="#62cb8c"/><rect x="95" y="168.0" width="50" height="10" fill="#9edc9e"/><rect x="151" y="168.0" width="62" height="10" fill="#9edc9e"/><rect x="219" y="168.0" width="58" height="10" fill="#62cb8c"/><rect x="283" y="168.0" width="54" height="10" fill="#9edc9e"/><rect x="343" y="168.0" width="50" height="10" fill="#c9ecc6"/><rect x="399" y="168.0" width="66" height="10" fill="#9edc9e"/><rect x="471" y="168.0" width="50" height="10" fill="#9edc9e"/><rect x="-369" y="186.0" width="66" height="10" fill="#9edc9e"/><rect x="-297" y="186.0" width="54" height="10" fill="#62cb8c"/><rect x="-237" y="186.0" width="54" height="10" fill="#62cb8c"/><rect x="-177" y="186.0" width="66" height="10" fill="#62cb8c"/><rect x="-105" y="186.0" width="62" height="10" fill="#1e9a50"/><rect x="-37" y="186.0" width="66" height="10" fill="#f3faf2"/><rect x="35" y="186.0" width="54" height="10" fill="#62cb8c"/><rect x="95" y="186.0" width="50" height="10" fill="#c9ecc6"/><rect x="151" y="186.0" width="62" height="10" fill="#9edc9e"/><rect x="219" y="186.0" width="58" height="10" fill="#9edc9e"/><rect x="283" y="186.0" width="54" height="10" fill="#62cb8c"/><rect x="343" y="186.0" width="50" height="10" fill="#1e9a50"/><rect x="399" y="186.0" width="66" height="10" fill="#9edc9e"/><rect x="471" y="186.0" width="50" height="10" fill="#f3faf2"/><rect x="-369" y="204.0" width="66" height="10" fill="#62cb8c"/><rect x="-297" y="204.0" width="54" height="10" fill="#9edc9e"/><rect x="-237" y="204.0" width="54" height="10" fill="#c9ecc6"/><rect x="-177" y="204.0" width="66" height="10" fill="#9edc9e"/><rect x="-105" y="204.0" width="62" height="10" fill="#c9ecc6"/><rect x="-37" y="204.0" width="66" height="10" fill="#1e9a50"/><rect x="35" y="204.0" width="54" height="10" fill="#62cb8c"/><rect x="95" y="204.0" width="50" height="10" fill="#c9ecc6"/><rect x="151" y="204.0" width="62" height="10" fill="#9edc9e"/><rect x="283" y="204.0" width="54" height="10" fill="#9edc9e"/><rect x="343" y="204.0" width="50" height="10" fill="#62cb8c"/><rect x="399" y="204.0" width="66" height="10" fill="#9edc9e"/><rect x="471" y="204.0" width="50" height="10" fill="#1e9a50"/><rect x="-369" y="222.0" width="66" height="10" fill="#c9ecc6"/><rect x="-297" y="222.0" width="54" height="10" fill="#9edc9e"/><rect x="-237" y="222.0" width="54" height="10" fill="#c9ecc6"/><rect x="-177" y="222.0" width="66" height="10" fill="#c9ecc6"/><rect x="-105" y="222.0" width="62" height="10" fill="#c9ecc6"/><rect x="-37" y="222.0" width="66" height="10" fill="#9edc9e"/><rect x="35" y="222.0" width="54" height="10" fill="#62cb8c"/><rect x="95" y="222.0" width="50" height="10" fill="#62cb8c"/><rect x="151" y="222.0" width="62" height="10" fill="#62cb8c"/><rect x="283" y="222.0" width="54" height="10" fill="#f3faf2"/><rect x="343" y="222.0" width="50" height="10" fill="#9edc9e"/><rect x="399" y="222.0" width="66" height="10" fill="#9edc9e"/><rect x="471" y="222.0" width="50" height="10" fill="#c9ecc6"/><rect x="-369" y="240.0" width="66" height="10" fill="#62cb8c"/><rect x="-297" y="240.0" width="54" height="10" fill="#62cb8c"/><rect x="-237" y="240.0" width="54" height="10" fill="#9edc9e"/><rect x="-177" y="240.0" width="66" height="10" fill="#9edc9e"/><rect x="-105" y="240.0" width="62" height="10" fill="#62cb8c"/><rect x="-37" y="240.0" width="66" height="10" fill="#c9ecc6"/><rect x="35" y="240.0" width="54" height="10" fill="#f3faf2"/><rect x="95" y="240.0" width="50" height="10" fill="#62cb8c"/><rect x="151" y="240.0" width="62" height="10" fill="#1e9a50"/><rect x="219" y="240.0" width="58" height="10" fill="#c9ecc6"/><rect x="283" y="240.0" width="54" height="10" fill="#62cb8c"/><rect x="399" y="240.0" width="66" height="10" fill="#c9ecc6"/><rect x="471" y="240.0" width="50" height="10" fill="#c9ecc6"/><rect x="-369" y="258.0" width="66" height="10" fill="#f3faf2"/><rect x="-297" y="258.0" width="54" height="10" fill="#c9ecc6"/><rect x="-237" y="258.0" width="54" height="10" fill="#f3faf2"/><rect x="-177" y="258.0" width="66" height="10" fill="#c9ecc6"/><rect x="-105" y="258.0" width="62" height="10" fill="#62cb8c"/><rect x="-37" y="258.0" width="66" height="10" fill="#62cb8c"/><rect x="35" y="258.0" width="54" height="10" fill="#62cb8c"/><rect x="95" y="258.0" width="50" height="10" fill="#f3faf2"/><rect x="151" y="258.0" width="62" height="10" fill="#1e9a50"/><rect x="219" y="258.0" width="58" height="10" fill="#9edc9e"/><rect x="283" y="258.0" width="54" height="10" fill="#c9ecc6"/><rect x="399" y="258.0" width="66" height="10" fill="#1e9a50"/><rect x="471" y="258.0" width="50" height="10" fill="#c9ecc6"/><rect x="-369" y="276.0" width="66" height="10" fill="#9edc9e"/><rect x="-297" y="276.0" width="54" height="10" fill="#1e9a50"/><rect x="-237" y="276.0" width="54" height="10" fill="#62cb8c"/><rect x="-177" y="276.0" width="66" height="10" fill="#f3faf2"/><rect x="-105" y="276.0" width="62" height="10" fill="#9edc9e"/><rect x="-37" y="276.0" width="66" height="10" fill="#62cb8c"/><rect x="35" y="276.0" width="54" height="10" fill="#c9ecc6"/><rect x="95" y="276.0" width="50" height="10" fill="#62cb8c"/><rect x="151" y="276.0" width="62" height="10" fill="#62cb8c"/><rect x="219" y="276.0" width="58" height="10" fill="#9edc9e"/><rect x="283" y="276.0" width="54" height="10" fill="#1e9a50"/><rect x="343" y="276.0" width="50" height="10" fill="#c9ecc6"/><rect x="399" y="276.0" width="66" height="10" fill="#9edc9e"/><rect x="471" y="276.0" width="50" height="10" fill="#f3faf2"/><rect x="-369" y="294.0" width="66" height="10" fill="#9edc9e"/><rect x="-297" y="294.0" width="54" height="10" fill="#f3faf2"/><rect x="-237" y="294.0" width="54" height="10" fill="#9edc9e"/><rect x="-177" y="294.0" width="66" height="10" fill="#f3faf2"/><rect x="-105" y="294.0" width="62" height="10" fill="#9edc9e"/><rect x="-37" y="294.0" width="66" height="10" fill="#1e9a50"/><rect x="35" y="294.0" width="54" height="10" fill="#1e9a50"/><rect x="95" y="294.0" width="50" height="10" fill="#c9ecc6"/><rect x="151" y="294.0" width="62" height="10" fill="#f3faf2"/><rect x="283" y="294.0" width="54" height="10" fill="#c9ecc6"/><rect x="343" y="294.0" width="50" height="10" fill="#62cb8c"/><rect x="399" y="294.0" width="66" height="10" fill="#1e9a50"/><rect x="471" y="294.0" width="50" height="10" fill="#62cb8c"/><rect x="-369" y="312.0" width="66" height="10" fill="#f3faf2"/><rect x="-297" y="312.0" width="54" height="10" fill="#f3faf2"/><rect x="-237" y="312.0" width="54" height="10" fill="#f3faf2"/><rect x="-177" y="312.0" width="66" height="10" fill="#c9ecc6"/><rect x="-105" y="312.0" width="62" height="10" fill="#c9ecc6"/><rect x="-37" y="312.0" width="66" height="10" fill="#f3faf2"/><rect x="35" y="312.0" width="54" height="10" fill="#c9ecc6"/><rect x="95" y="312.0" width="50" height="10" fill="#c9ecc6"/><rect x="151" y="312.0" width="62" height="10" fill="#62cb8c"/><rect x="283" y="312.0" width="54" height="10" fill="#c9ecc6"/><rect x="343" y="312.0" width="50" height="10" fill="#62cb8c"/><rect x="399" y="312.0" width="66" height="10" fill="#62cb8c"/><rect x="-369" y="330.0" width="66" height="10" fill="#9edc9e"/><rect x="-297" y="330.0" width="54" height="10" fill="#c9ecc6"/><rect x="-37" y="330.0" width="66" height="10" fill="#f3faf2"/><rect x="35" y="330.0" width="54" height="10" fill="#62cb8c"/><rect x="95" y="330.0" width="50" height="10" fill="#c9ecc6"/><rect x="151" y="330.0" width="62" height="10" fill="#c9ecc6"/><rect x="219" y="330.0" width="58" height="10" fill="#f3faf2"/><rect x="-369" y="348.0" width="66" height="10" fill="#1e9a50"/><rect x="-297" y="348.0" width="54" height="10" fill="#62cb8c"/><rect x="-37" y="348.0" width="66" height="10" fill="#62cb8c"/><rect x="95" y="348.0" width="50" height="10" fill="#c9ecc6"/><rect x="151" y="348.0" width="62" height="10" fill="#9edc9e"/><rect x="-369" y="366.0" width="66" height="10" fill="#62cb8c"/><rect x="-297" y="366.0" width="54" height="10" fill="#9edc9e"/><rect x="-37" y="366.0" width="66" height="10" fill="#f3faf2"/><rect x="-37" y="384.0" width="66" height="10" fill="#c9ecc6"/></g><g clip-path="url(#wzclip)"><g transform="translate(480,540) rotate(29)"><rect x="92" y="-412.0" width="56" height="18" fill="#f4fbf3"/><rect x="148" y="-412.0" width="68" height="18" fill="#d4f0d2"/><rect x="92" y="-394.0" width="56" height="18" fill="#f4fbf3"/><rect x="148" y="-394.0" width="68" height="18" fill="#f4fbf3"/><rect x="92" y="-376.0" width="56" height="18" fill="#f4fbf3"/><rect x="148" y="-376.0" width="68" height="18" fill="#f4fbf3"/><rect x="92" y="-358.0" width="56" height="18" fill="#f4fbf3"/><rect x="148" y="-358.0" width="68" height="18" fill="#f4fbf3"/><rect x="92" y="-340.0" width="56" height="18" fill="#d4f0d2"/><rect x="148" y="-340.0" width="68" height="18" fill="#d4f0d2"/><rect x="148" y="-322.0" width="68" height="18" fill="#f4fbf3"/><rect x="-300" y="-286.0" width="60" height="18" fill="#d4f0d2"/><rect x="-300" y="-268.0" width="60" height="18" fill="#d4f0d2"/><rect x="-300" y="-250.0" width="60" height="18" fill="#f4fbf3"/><rect x="-300" y="-232.0" width="60" height="18" fill="#f4fbf3"/><rect x="-300" y="-214.0" width="60" height="18" fill="#f4fbf3"/><rect x="-240" y="-214.0" width="60" height="18" fill="#f4fbf3"/><rect x="-300" y="-196.0" width="60" height="18" fill="#f4fbf3"/><rect x="-240" y="-196.0" width="60" height="18" fill="#a8e0a8"/><rect x="280" y="-196.0" width="60" height="18" fill="#f4fbf3"/><rect x="-300" y="-178.0" width="60" height="18" fill="#f4fbf3"/><rect x="-240" y="-178.0" width="60" height="18" fill="#f4fbf3"/><rect x="-300" y="-160.0" width="60" height="18" fill="#f4fbf3"/><rect x="-240" y="-160.0" width="60" height="18" fill="#f4fbf3"/><rect x="-40" y="-160.0" width="72" height="18" fill="#f4fbf3"/><rect x="340" y="-160.0" width="56" height="18" fill="#d4f0d2"/><rect x="-300" y="-142.0" width="60" height="18" fill="#f4fbf3"/><rect x="-240" y="-142.0" width="60" height="18" fill="#f4fbf3"/><rect x="-108" y="-142.0" width="68" height="18" fill="#f4fbf3"/><rect x="-40" y="-142.0" width="72" height="18" fill="#d4f0d2"/><rect x="340" y="-142.0" width="56" height="18" fill="#f4fbf3"/><rect x="-240" y="-124.0" width="60" height="18" fill="#f4fbf3"/><rect x="-108" y="-124.0" width="68" height="18" fill="#d4f0d2"/><rect x="-40" y="-124.0" width="72" height="18" fill="#f4fbf3"/><rect x="396" y="-124.0" width="72" height="18" fill="#a8e0a8"/><rect x="-240" y="-106.0" width="60" height="18" fill="#f4fbf3"/><rect x="-108" y="-106.0" width="68" height="18" fill="#d4f0d2"/><rect x="-40" y="-106.0" width="72" height="18" fill="#f4fbf3"/><rect x="32" y="-106.0" width="60" height="18" fill="#d4f0d2"/><rect x="-240" y="-88.0" width="60" height="18" fill="#f4fbf3"/><rect x="32" y="-88.0" width="60" height="18" fill="#d4f0d2"/><rect x="-240" y="-70.0" width="60" height="18" fill="#f4fbf3"/><rect x="468" y="-52.0" width="56" height="18" fill="#f4fbf3"/><rect x="280" y="20.0" width="60" height="18" fill="#d4f0d2"/><rect x="280" y="38.0" width="60" height="18" fill="#a8e0a8"/><rect x="148" y="110.0" width="68" height="18" fill="#f4fbf3"/><rect x="216" y="110.0" width="64" height="18" fill="#f4fbf3"/><rect x="148" y="128.0" width="68" height="18" fill="#f4fbf3"/><rect x="216" y="128.0" width="64" height="18" fill="#f4fbf3"/><rect x="340" y="128.0" width="56" height="18" fill="#f4fbf3"/><rect x="396" y="128.0" width="72" height="18" fill="#d4f0d2"/><rect x="148" y="146.0" width="68" height="18" fill="#d4f0d2"/><rect x="216" y="146.0" width="64" height="18" fill="#f4fbf3"/><rect x="340" y="146.0" width="56" height="18" fill="#d4f0d2"/><rect x="216" y="200.0" width="64" height="18" fill="#f4fbf3"/><rect x="216" y="218.0" width="64" height="18" fill="#f4fbf3"/><rect x="340" y="236.0" width="56" height="18" fill="#f4fbf3"/><rect x="340" y="254.0" width="56" height="18" fill="#d4f0d2"/><rect x="216" y="290.0" width="64" height="18" fill="#f4fbf3"/><rect x="216" y="308.0" width="64" height="18" fill="#d4f0d2"/></g></g><polygon points="469,235 518,238 526,290 499,329 466,307" fill="#c0e8c0"/><polygon points="537,147 565,156 548,252 499,381 477,365 521,238" fill="#5fc98a"/><polygon points="540,362 578,359 595,392 590,417 562,433 540,400" fill="#0f9a48"/><polygon points="386,389 405,386 433,428 411,439 386,422" fill="#0f9a48"/><polygon points="611,249 650,268 650,290 609,274" fill="#10904a"/><polygon points="713,325 782,350 778,359 710,340" fill="#10904a"/><polygon points="833,674 892,695 885,751 825,730" fill="#10904a"/><polygon points="659,780 683,780 705,805 694,846 659,830" fill="#0f9a48"/><polygon points="532,656 595,676 590,698 529,681" fill="#10904a"/><polygon points="736,986 774,1003 771,1025 733,1006" fill="#07501f"/><polygon points="799,667 840,695 837,725 804,703" fill="#10904a"/><polygon points="782,882 840,898 837,940 780,915" fill="#5fc98a"/><polygon points="747,956 790,970 777,1003 744,989" fill="#5fc98a"/><polygon points="611,555 679,580 665,640 600,618" fill="#c0e8c0"/><polygon points="254,444 330,470 310,547 240,525" fill="#c0e8c0"/><polygon points="781,223 841,259 838,283 775,265" fill="#c0e8c0"/><g mask="url(#wzmask)"><g transform="translate(480,540) rotate(29)"><g stroke="url(#dotp)" stroke-width="7"><line x1="-720" y1="-700.0" x2="720" y2="-700.0"/><line x1="-720" y1="-682.0" x2="720" y2="-682.0"/><line x1="-720" y1="-664.0" x2="720" y2="-664.0"/><line x1="-720" y1="-646.0" x2="720" y2="-646.0"/><line x1="-720" y1="-628.0" x2="720" y2="-628.0"/><line x1="-720" y1="-610.0" x2="720" y2="-610.0"/><line x1="-720" y1="-592.0" x2="720" y2="-592.0"/><line x1="-720" y1="-574.0" x2="720" y2="-574.0"/><line x1="-720" y1="-556.0" x2="720" y2="-556.0"/><line x1="-720" y1="-538.0" x2="720" y2="-538.0"/><line x1="-720" y1="-520.0" x2="720" y2="-520.0"/><line x1="-720" y1="-502.0" x2="720" y2="-502.0"/><line x1="-720" y1="-484.0" x2="720" y2="-484.0"/><line x1="-720" y1="-466.0" x2="720" y2="-466.0"/><line x1="-720" y1="-448.0" x2="720" y2="-448.0"/><line x1="-720" y1="-430.0" x2="720" y2="-430.0"/><line x1="-720" y1="-412.0" x2="720" y2="-412.0"/><line x1="-720" y1="-394.0" x2="720" y2="-394.0"/><line x1="-720" y1="-376.0" x2="720" y2="-376.0"/><line x1="-720" y1="-358.0" x2="720" y2="-358.0"/><line x1="-720" y1="-340.0" x2="720" y2="-340.0"/><line x1="-720" y1="-322.0" x2="720" y2="-322.0"/><line x1="-720" y1="-304.0" x2="720" y2="-304.0"/><line x1="-720" y1="-286.0" x2="720" y2="-286.0"/><line x1="-720" y1="-268.0" x2="720" y2="-268.0"/><line x1="-720" y1="-250.0" x2="720" y2="-250.0"/><line x1="-720" y1="-232.0" x2="720" y2="-232.0"/><line x1="-720" y1="-214.0" x2="720" y2="-214.0"/><line x1="-720" y1="-196.0" x2="720" y2="-196.0"/><line x1="-720" y1="-178.0" x2="720" y2="-178.0"/><line x1="-720" y1="-160.0" x2="720" y2="-160.0"/><line x1="-720" y1="-142.0" x2="720" y2="-142.0"/><line x1="-720" y1="-124.0" x2="720" y2="-124.0"/><line x1="-720" y1="-106.0" x2="720" y2="-106.0"/><line x1="-720" y1="-88.0" x2="720" y2="-88.0"/><line x1="-720" y1="-70.0" x2="720" y2="-70.0"/><line x1="-720" y1="-52.0" x2="720" y2="-52.0"/><line x1="-720" y1="-34.0" x2="720" y2="-34.0"/><line x1="-720" y1="-16.0" x2="720" y2="-16.0"/><line x1="-720" y1="2.0" x2="720" y2="2.0"/><line x1="-720" y1="20.0" x2="720" y2="20.0"/><line x1="-720" y1="38.0" x2="720" y2="38.0"/><line x1="-720" y1="56.0" x2="720" y2="56.0"/><line x1="-720" y1="74.0" x2="720" y2="74.0"/><line x1="-720" y1="92.0" x2="720" y2="92.0"/><line x1="-720" y1="110.0" x2="720" y2="110.0"/><line x1="-720" y1="128.0" x2="720" y2="128.0"/><line x1="-720" y1="146.0" x2="720" y2="146.0"/><line x1="-720" y1="164.0" x2="720" y2="164.0"/><line x1="-720" y1="182.0" x2="720" y2="182.0"/><line x1="-720" y1="200.0" x2="720" y2="200.0"/><line x1="-720" y1="218.0" x2="720" y2="218.0"/><line x1="-720" y1="236.0" x2="720" y2="236.0"/><line x1="-720" y1="254.0" x2="720" y2="254.0"/><line x1="-720" y1="272.0" x2="720" y2="272.0"/><line x1="-720" y1="290.0" x2="720" y2="290.0"/><line x1="-720" y1="308.0" x2="720" y2="308.0"/><line x1="-720" y1="326.0" x2="720" y2="326.0"/><line x1="-720" y1="344.0" x2="720" y2="344.0"/><line x1="-720" y1="362.0" x2="720" y2="362.0"/><line x1="-720" y1="380.0" x2="720" y2="380.0"/><line x1="-720" y1="398.0" x2="720" y2="398.0"/><line x1="-720" y1="416.0" x2="720" y2="416.0"/><line x1="-720" y1="434.0" x2="720" y2="434.0"/><line x1="-720" y1="452.0" x2="720" y2="452.0"/><line x1="-720" y1="470.0" x2="720" y2="470.0"/><line x1="-720" y1="488.0" x2="720" y2="488.0"/><line x1="-720" y1="506.0" x2="720" y2="506.0"/><line x1="-720" y1="524.0" x2="720" y2="524.0"/><line x1="-720" y1="542.0" x2="720" y2="542.0"/><line x1="-720" y1="560.0" x2="720" y2="560.0"/><line x1="-720" y1="578.0" x2="720" y2="578.0"/><line x1="-720" y1="596.0" x2="720" y2="596.0"/><line x1="-720" y1="614.0" x2="720" y2="614.0"/><line x1="-720" y1="632.0" x2="720" y2="632.0"/><line x1="-720" y1="650.0" x2="720" y2="650.0"/><line x1="-720" y1="668.0" x2="720" y2="668.0"/><line x1="-720" y1="686.0" x2="720" y2="686.0"/></g><g stroke="#7d9a3a" stroke-width="3"><line x1="-720" y1="-720" x2="-720" y2="720"/><line x1="-652" y1="-720" x2="-652" y2="720"/><line x1="-580" y1="-720" x2="-580" y2="720"/><line x1="-512" y1="-720" x2="-512" y2="720"/><line x1="-444" y1="-720" x2="-444" y2="720"/><line x1="-372" y1="-720" x2="-372" y2="720"/><line x1="-300" y1="-720" x2="-300" y2="720"/><line x1="-240" y1="-720" x2="-240" y2="720"/><line x1="-180" y1="-720" x2="-180" y2="720"/><line x1="-108" y1="-720" x2="-108" y2="720"/><line x1="-40" y1="-720" x2="-40" y2="720"/><line x1="32" y1="-720" x2="32" y2="720"/><line x1="92" y1="-720" x2="92" y2="720"/><line x1="148" y1="-720" x2="148" y2="720"/><line x1="216" y1="-720" x2="216" y2="720"/><line x1="280" y1="-720" x2="280" y2="720"/><line x1="340" y1="-720" x2="340" y2="720"/><line x1="396" y1="-720" x2="396" y2="720"/><line x1="468" y1="-720" x2="468" y2="720"/><line x1="524" y1="-720" x2="524" y2="720"/><line x1="596" y1="-720" x2="596" y2="720"/><line x1="664" y1="-720" x2="664" y2="720"/></g><g stroke="url(#dotp)" stroke-width="9"><line x1="-720" y1="-720" x2="-720" y2="720"/><line x1="-652" y1="-720" x2="-652" y2="720"/><line x1="-580" y1="-720" x2="-580" y2="720"/><line x1="-512" y1="-720" x2="-512" y2="720"/><line x1="-444" y1="-720" x2="-444" y2="720"/><line x1="-372" y1="-720" x2="-372" y2="720"/><line x1="-300" y1="-720" x2="-300" y2="720"/><line x1="-240" y1="-720" x2="-240" y2="720"/><line x1="-180" y1="-720" x2="-180" y2="720"/><line x1="-108" y1="-720" x2="-108" y2="720"/><line x1="-40" y1="-720" x2="-40" y2="720"/><line x1="32" y1="-720" x2="32" y2="720"/><line x1="92" y1="-720" x2="92" y2="720"/><line x1="148" y1="-720" x2="148" y2="720"/><line x1="216" y1="-720" x2="216" y2="720"/><line x1="280" y1="-720" x2="280" y2="720"/><line x1="340" y1="-720" x2="340" y2="720"/><line x1="396" y1="-720" x2="396" y2="720"/><line x1="468" y1="-720" x2="468" y2="720"/><line x1="524" y1="-720" x2="524" y2="720"/><line x1="596" y1="-720" x2="596" y2="720"/><line x1="664" y1="-720" x2="664" y2="720"/></g><g fill="#c2dc00" stroke="#6f8a2c" stroke-width="0.9"><circle cx="-254.3" cy="-412.6" r="3.5"/><circle cx="-195.0" cy="-414.2" r="4.1"/><circle cx="-49.7" cy="-412.2" r="3.1"/><circle cx="-78.7" cy="-410.1" r="3.4"/><circle cx="43.5" cy="-410.0" r="3.9"/><circle cx="126.6" cy="-409.5" r="3.2"/><circle cx="-239.1" cy="-407.8" r="3.4"/><circle cx="93.2" cy="-404.0" r="3.9"/><circle cx="149.3" cy="-406.5" r="3.5"/><circle cx="-232.1" cy="-395.8" r="3.7"/><circle cx="-128.2" cy="-392.6" r="3.0"/><circle cx="-147.5" cy="-392.2" r="3.8"/><circle cx="-89.8" cy="-393.7" r="3.4"/><circle cx="-103.4" cy="-391.5" r="3.9"/><circle cx="21.7" cy="-395.7" r="3.7"/><circle cx="85.6" cy="-392.7" r="3.6"/><circle cx="163.3" cy="-394.6" r="3.0"/><circle cx="-179.5" cy="-388.8" r="3.0"/><circle cx="-108.1" cy="-382.6" r="2.9"/><circle cx="-38.1" cy="-385.8" r="3.7"/><circle cx="33.3" cy="-379.9" r="3.0"/><circle cx="90.6" cy="-382.7" r="3.4"/><circle cx="-278.8" cy="-376.8" r="3.7"/><circle cx="-162.9" cy="-376.8" r="3.2"/><circle cx="-169.4" cy="-374.9" r="3.2"/><circle cx="-71.1" cy="-376.7" r="3.5"/><circle cx="0.7" cy="-377.5" r="4.1"/><circle cx="65.5" cy="-378.4" r="3.7"/><circle cx="166.7" cy="-375.6" r="3.8"/><circle cx="33.6" cy="-361.1" r="3.8"/><circle cx="149.3" cy="-369.5" r="3.9"/><circle cx="-280.0" cy="-357.1" r="3.8"/><circle cx="-204.0" cy="-357.3" r="3.9"/><circle cx="-227.8" cy="-358.4" r="2.8"/><circle cx="-168.4" cy="-358.5" r="3.3"/><circle cx="-167.6" cy="-359.3" r="4.1"/><circle cx="57.0" cy="-358.0" r="2.9"/><circle cx="115.7" cy="-357.4" r="3.8"/><circle cx="197.1" cy="-358.1" r="4.2"/><circle cx="202.3" cy="-356.2" r="3.4"/><circle cx="-241.8" cy="-346.3" r="3.9"/><circle cx="32.4" cy="-354.2" r="2.9"/><circle cx="-190.9" cy="-340.4" r="3.9"/><circle cx="-134.4" cy="-340.4" r="3.0"/><circle cx="42.4" cy="-339.8" r="4.1"/><circle cx="166.6" cy="-341.0" r="3.3"/><circle cx="-238.4" cy="-333.3" r="3.4"/><circle cx="31.2" cy="-325.9" r="3.9"/><circle cx="93.4" cy="-332.8" r="3.4"/><circle cx="149.5" cy="-325.1" r="3.0"/><circle cx="-258.9" cy="-323.8" r="3.8"/><circle cx="-247.2" cy="-322.3" r="2.9"/><circle cx="-191.2" cy="-323.9" r="3.8"/><circle cx="-164.4" cy="-323.3" r="3.7"/><circle cx="-81.6" cy="-321.2" r="4.0"/><circle cx="26.5" cy="-320.0" r="3.1"/><circle cx="50.4" cy="-321.3" r="2.9"/><circle cx="207.0" cy="-324.1" r="4.1"/><circle cx="152.4" cy="-321.6" r="3.6"/><circle cx="-238.8" cy="-317.2" r="3.9"/><circle cx="33.6" cy="-318.3" r="2.9"/><circle cx="215.9" cy="-318.6" r="3.1"/><circle cx="-223.8" cy="-304.3" r="3.9"/><circle cx="-195.1" cy="-302.5" r="3.1"/><circle cx="-141.2" cy="-302.2" r="3.6"/><circle cx="-159.3" cy="-305.5" r="4.2"/><circle cx="19.9" cy="-305.6" r="3.0"/><circle cx="-34.9" cy="-304.0" r="3.4"/><circle cx="73.6" cy="-302.2" r="2.8"/><circle cx="41.9" cy="-305.6" r="3.7"/><circle cx="125.9" cy="-306.2" r="3.4"/><circle cx="201.2" cy="-302.8" r="3.9"/><circle cx="-40.1" cy="-292.6" r="3.6"/><circle cx="93.0" cy="-293.8" r="3.0"/><circle cx="-157.1" cy="-287.9" r="4.0"/><circle cx="-76.3" cy="-283.8" r="3.3"/><circle cx="-83.8" cy="-283.6" r="3.7"/><circle cx="57.0" cy="-285.3" r="2.9"/><circle cx="123.2" cy="-283.9" r="4.0"/><circle cx="179.8" cy="-286.5" r="4.0"/><circle cx="241.2" cy="-288.3" r="3.4"/><circle cx="233.8" cy="-284.5" r="3.9"/><circle cx="-240.1" cy="-276.5" r="3.3"/><circle cx="-180.9" cy="-271.6" r="3.5"/><circle cx="214.4" cy="-282.3" r="3.7"/><circle cx="-291.7" cy="-266.1" r="3.3"/><circle cx="-255.9" cy="-267.9" r="2.9"/><circle cx="-204.4" cy="-268.1" r="3.1"/><circle cx="-209.3" cy="-269.9" r="3.1"/><circle cx="-148.9" cy="-267.8" r="3.0"/><circle cx="-130.8" cy="-269.2" r="3.8"/><circle cx="-95.2" cy="-269.5" r="3.2"/><circle cx="-61.2" cy="-268.5" r="3.3"/><circle cx="-21.5" cy="-269.0" r="3.3"/><circle cx="43.3" cy="-266.3" r="3.8"/><circle cx="123.2" cy="-266.5" r="4.2"/><circle cx="110.3" cy="-267.1" r="4.1"/><circle cx="185.5" cy="-268.7" r="3.0"/><circle cx="233.1" cy="-267.3" r="2.9"/><circle cx="-240.4" cy="-259.3" r="3.0"/><circle cx="-109.6" cy="-260.9" r="3.3"/><circle cx="-39.7" cy="-256.6" r="3.5"/><circle cx="91.6" cy="-260.6" r="2.9"/><circle cx="216.0" cy="-258.0" r="3.4"/><circle cx="-262.6" cy="-250.6" r="3.3"/><circle cx="-234.4" cy="-249.0" r="3.1"/><circle cx="3.2" cy="-252.2" r="2.9"/><circle cx="-6.3" cy="-250.3" r="4.2"/><circle cx="38.0" cy="-251.8" r="3.5"/><circle cx="52.0" cy="-250.7" r="4.2"/><circle cx="125.1" cy="-251.2" r="3.2"/><circle cx="166.1" cy="-252.5" r="3.6"/><circle cx="220.2" cy="-249.8" r="4.0"/><circle cx="262.9" cy="-252.1" r="4.0"/><circle cx="-240.4" cy="-245.1" r="3.0"/><circle cx="-180.7" cy="-238.7" r="3.8"/><circle cx="-108.3" cy="-242.6" r="3.6"/><circle cx="-293.9" cy="-231.4" r="3.4"/><circle cx="-270.9" cy="-232.8" r="3.4"/><circle cx="-222.8" cy="-231.3" r="3.3"/><circle cx="-200.5" cy="-233.6" r="4.0"/><circle cx="-122.1" cy="-230.4" r="3.6"/><circle cx="-65.5" cy="-233.9" r="3.8"/><circle cx="-87.9" cy="-233.7" r="3.1"/><circle cx="-21.2" cy="-233.6" r="2.8"/><circle cx="49.9" cy="-233.1" r="3.2"/><circle cx="114.6" cy="-231.1" r="3.0"/><circle cx="103.6" cy="-229.5" r="4.0"/><circle cx="169.2" cy="-230.8" r="4.2"/><circle cx="-107.1" cy="-224.1" r="3.0"/><circle cx="91.1" cy="-218.6" r="3.3"/><circle cx="-263.5" cy="-215.1" r="3.1"/><circle cx="-225.5" cy="-213.7" r="3.6"/><circle cx="-228.1" cy="-216.5" r="3.9"/><circle cx="-14.5" cy="-215.8" r="3.9"/><circle cx="61.2" cy="-214.4" r="3.9"/><circle cx="56.6" cy="-216.2" r="3.6"/><circle cx="109.3" cy="-211.8" r="4.0"/><circle cx="186.3" cy="-211.8" r="2.9"/><circle cx="203.4" cy="-211.8" r="3.6"/><circle cx="-109.0" cy="-199.9" r="3.4"/><circle cx="-39.9" cy="-203.0" r="3.8"/><circle cx="-253.8" cy="-196.7" r="3.7"/><circle cx="-219.8" cy="-198.2" r="3.7"/><circle cx="-83.9" cy="-194.8" r="3.1"/><circle cx="-1.0" cy="-195.1" r="3.0"/><circle cx="102.9" cy="-196.7" r="3.4"/><circle cx="248.1" cy="-196.5" r="3.3"/><circle cx="250.1" cy="-193.7" r="3.1"/><circle cx="300.7" cy="-194.7" r="3.0"/><circle cx="-239.3" cy="-181.6" r="3.2"/><circle cx="-180.6" cy="-181.1" r="3.0"/><circle cx="92.5" cy="-182.3" r="3.8"/><circle cx="-269.9" cy="-178.6" r="3.6"/><circle cx="-293.8" cy="-175.9" r="3.5"/><circle cx="-212.8" cy="-177.5" r="3.6"/><circle cx="-187.6" cy="-179.7" r="3.5"/><circle cx="-128.8" cy="-178.9" r="3.8"/><circle cx="-100.9" cy="-175.7" r="3.9"/><circle cx="-50.2" cy="-179.9" r="3.1"/><circle cx="17.1" cy="-176.5" r="3.5"/><circle cx="39.4" cy="-176.1" r="3.8"/><circle cx="120.8" cy="-178.8" r="3.1"/><circle cx="231.0" cy="-179.1" r="3.7"/><circle cx="224.1" cy="-177.7" r="3.9"/><circle cx="329.6" cy="-180.1" r="3.5"/><circle cx="286.9" cy="-176.2" r="4.2"/><circle cx="-240.8" cy="-170.0" r="3.5"/><circle cx="-179.3" cy="-169.4" r="3.4"/><circle cx="-107.4" cy="-168.6" r="3.2"/><circle cx="-287.1" cy="-159.6" r="2.9"/><circle cx="-230.0" cy="-157.8" r="3.7"/><circle cx="-156.3" cy="-162.5" r="2.9"/><circle cx="-59.8" cy="-160.7" r="3.2"/><circle cx="-23.2" cy="-162.1" r="3.2"/><circle cx="-12.0" cy="-159.4" r="3.2"/><circle cx="62.3" cy="-157.8" r="3.3"/><circle cx="107.3" cy="-159.6" r="3.2"/><circle cx="137.9" cy="-161.1" r="4.0"/><circle cx="165.5" cy="-160.1" r="3.1"/><circle cx="176.8" cy="-161.4" r="3.7"/><circle cx="243.5" cy="-161.1" r="3.4"/><circle cx="299.2" cy="-159.0" r="3.7"/><circle cx="344.7" cy="-160.6" r="3.6"/><circle cx="-106.8" cy="-156.8" r="2.8"/><circle cx="338.3" cy="-155.0" r="3.4"/><circle cx="-273.5" cy="-143.4" r="3.6"/><circle cx="-290.3" cy="-144.2" r="4.2"/><circle cx="-194.9" cy="-139.8" r="3.5"/><circle cx="-205.6" cy="-142.0" r="4.0"/><circle cx="-169.9" cy="-140.5" r="2.8"/><circle cx="-114.7" cy="-141.0" r="3.9"/><circle cx="-64.2" cy="-139.7" r="3.5"/><circle cx="60.4" cy="-144.4" r="4.0"/><circle cx="85.1" cy="-140.0" r="2.8"/><circle cx="115.8" cy="-141.7" r="4.2"/><circle cx="275.9" cy="-141.7" r="2.9"/><circle cx="290.7" cy="-144.1" r="3.5"/><circle cx="360.9" cy="-143.3" r="3.6"/><circle cx="-107.7" cy="-136.9" r="3.5"/><circle cx="93.3" cy="-136.3" r="3.8"/><circle cx="148.9" cy="-134.5" r="3.2"/><circle cx="-291.9" cy="-125.2" r="3.0"/><circle cx="-218.9" cy="-124.1" r="3.7"/><circle cx="-189.9" cy="-121.8" r="3.6"/><circle cx="-66.5" cy="-125.2" r="3.6"/><circle cx="-90.8" cy="-126.1" r="3.9"/><circle cx="-13.1" cy="-124.3" r="3.4"/><circle cx="-32.8" cy="-122.3" r="2.9"/><circle cx="64.5" cy="-124.5" r="3.1"/><circle cx="41.2" cy="-124.6" r="3.2"/><circle cx="141.6" cy="-123.9" r="3.5"/><circle cx="131.2" cy="-124.6" r="3.6"/><circle cx="334.0" cy="-124.7" r="3.6"/><circle cx="384.3" cy="-125.5" r="3.9"/><circle cx="-300.9" cy="-111.5" r="3.3"/><circle cx="-107.3" cy="-120.0" r="4.0"/><circle cx="31.3" cy="-111.2" r="3.7"/><circle cx="149.1" cy="-120.4" r="3.5"/><circle cx="397.7" cy="-112.0" r="3.5"/><circle cx="-195.4" cy="-106.3" r="3.9"/><circle cx="-127.6" cy="-105.1" r="3.9"/><circle cx="-147.5" cy="-104.0" r="3.8"/><circle cx="6.6" cy="-105.8" r="3.0"/><circle cx="110.9" cy="-103.7" r="3.6"/><circle cx="140.3" cy="-107.4" r="3.4"/><circle cx="202.4" cy="-107.9" r="4.0"/><circle cx="242.8" cy="-104.0" r="4.1"/><circle cx="231.2" cy="-105.0" r="3.5"/><circle cx="319.9" cy="-106.6" r="3.9"/><circle cx="289.5" cy="-104.8" r="3.0"/><circle cx="353.7" cy="-106.8" r="3.0"/><circle cx="424.1" cy="-104.5" r="3.8"/><circle cx="-240.0" cy="-95.4" r="3.2"/><circle cx="-106.3" cy="-93.4" r="3.1"/><circle cx="-41.1" cy="-92.1" r="2.9"/><circle cx="31.7" cy="-96.6" r="3.3"/><circle cx="90.7" cy="-95.6" r="3.6"/><circle cx="218.0" cy="-98.8" r="3.0"/><circle cx="-284.6" cy="-89.5" r="3.5"/><circle cx="-229.7" cy="-86.7" r="3.6"/><circle cx="-131.9" cy="-88.7" r="4.1"/><circle cx="-67.5" cy="-86.3" r="4.2"/><circle cx="54.6" cy="-89.6" r="4.0"/><circle cx="109.8" cy="-87.7" r="3.2"/><circle cx="221.6" cy="-86.5" r="4.1"/><circle cx="329.4" cy="-89.7" r="4.0"/><circle cx="373.3" cy="-87.8" r="3.8"/><circle cx="419.6" cy="-88.4" r="3.9"/><circle cx="-239.1" cy="-74.4" r="2.9"/><circle cx="90.0" cy="-73.8" r="4.0"/><circle cx="147.5" cy="-80.8" r="3.0"/><circle cx="339.7" cy="-83.3" r="3.9"/><circle cx="-291.5" cy="-69.0" r="3.7"/><circle cx="-190.3" cy="-72.0" r="3.0"/><circle cx="-171.0" cy="-70.1" r="3.6"/><circle cx="21.6" cy="-71.2" r="3.1"/><circle cx="84.8" cy="-67.6" r="4.1"/><circle cx="137.2" cy="-67.8" r="2.8"/><circle cx="199.7" cy="-67.5" r="3.6"/><circle cx="205.9" cy="-70.9" r="3.0"/><circle cx="273.7" cy="-72.3" r="3.0"/><circle cx="333.8" cy="-72.4" r="2.8"/><circle cx="377.0" cy="-69.9" r="3.6"/><circle cx="-241.9" cy="-57.8" r="3.1"/><circle cx="-39.3" cy="-61.5" r="3.1"/><circle cx="90.6" cy="-64.0" r="3.4"/><circle cx="215.0" cy="-59.1" r="3.1"/><circle cx="341.5" cy="-64.8" r="3.1"/><circle cx="395.3" cy="-58.3" r="3.6"/><circle cx="-273.0" cy="-54.3" r="3.6"/><circle cx="-216.7" cy="-52.7" r="4.1"/><circle cx="-112.0" cy="-52.4" r="3.7"/><circle cx="-161.1" cy="-49.5" r="3.1"/><circle cx="-70.3" cy="-49.8" r="2.9"/><circle cx="97.6" cy="-49.7" r="3.4"/><circle cx="103.6" cy="-54.2" r="3.0"/><circle cx="209.6" cy="-49.8" r="3.3"/><circle cx="207.8" cy="-53.8" r="3.8"/><circle cx="296.3" cy="-51.0" r="3.1"/><circle cx="361.6" cy="-50.9" r="4.1"/><circle cx="351.0" cy="-50.1" r="4.2"/><circle cx="443.3" cy="-53.9" r="3.2"/><circle cx="-239.4" cy="-48.8" r="3.9"/><circle cx="33.9" cy="-41.3" r="2.9"/><circle cx="466.6" cy="-43.4" r="3.6"/><circle cx="-287.5" cy="-35.6" r="3.8"/><circle cx="-186.0" cy="-36.4" r="3.4"/><circle cx="-136.8" cy="-36.2" r="2.8"/><circle cx="-154.1" cy="-35.7" r="4.2"/><circle cx="-88.4" cy="-33.4" r="3.3"/><circle cx="-20.0" cy="-32.8" r="3.0"/><circle cx="-26.8" cy="-33.6" r="3.7"/><circle cx="64.1" cy="-34.2" r="3.3"/><circle cx="83.5" cy="-35.3" r="4.1"/><circle cx="118.5" cy="-33.7" r="4.1"/><circle cx="208.0" cy="-34.9" r="3.6"/><circle cx="228.8" cy="-31.8" r="3.2"/><circle cx="225.4" cy="-33.1" r="3.3"/><circle cx="379.8" cy="-32.5" r="3.7"/><circle cx="376.9" cy="-33.2" r="3.4"/><circle cx="436.7" cy="-33.3" r="3.4"/><circle cx="405.8" cy="-34.0" r="3.5"/><circle cx="518.6" cy="-35.1" r="3.4"/><circle cx="149.4" cy="-25.0" r="3.2"/><circle cx="214.9" cy="-21.0" r="3.8"/><circle cx="-289.9" cy="-16.1" r="3.8"/><circle cx="-75.7" cy="-15.3" r="3.7"/><circle cx="23.7" cy="-15.3" r="2.9"/><circle cx="6.7" cy="-18.0" r="4.2"/><circle cx="52.2" cy="-17.6" r="3.8"/><circle cx="75.4" cy="-13.6" r="3.7"/><circle cx="132.0" cy="-15.2" r="3.4"/><circle cx="198.1" cy="-14.6" r="4.0"/><circle cx="186.1" cy="-13.8" r="3.7"/><circle cx="232.6" cy="-14.9" r="2.9"/><circle cx="269.5" cy="-16.0" r="4.2"/><circle cx="318.0" cy="-14.6" r="3.8"/><circle cx="359.2" cy="-17.1" r="3.1"/><circle cx="375.1" cy="-15.1" r="4.1"/><circle cx="421.0" cy="-18.2" r="2.8"/><circle cx="518.2" cy="-14.6" r="3.3"/><circle cx="-181.2" cy="-6.0" r="3.1"/><circle cx="-109.7" cy="-12.4" r="3.2"/><circle cx="279.9" cy="-1.5" r="2.9"/><circle cx="-265.5" cy="1.6" r="2.8"/><circle cx="-164.4" cy="4.4" r="3.7"/><circle cx="-70.9" cy="0.9" r="3.8"/><circle cx="-18.8" cy="3.5" r="2.9"/><circle cx="98.9" cy="4.4" r="4.1"/><circle cx="105.3" cy="0.8" r="4.1"/><circle cx="308.2" cy="2.6" r="4.0"/><circle cx="367.9" cy="3.4" r="3.1"/><circle cx="383.1" cy="0.7" r="4.0"/><circle cx="403.0" cy="3.1" r="3.0"/><circle cx="403.5" cy="1.9" r="2.8"/><circle cx="-41.9" cy="15.0" r="3.7"/><circle cx="214.1" cy="6.1" r="3.1"/><circle cx="280.7" cy="7.5" r="3.3"/><circle cx="338.1" cy="15.5" r="3.5"/><circle cx="396.9" cy="12.5" r="3.5"/><circle cx="-249.9" cy="17.9" r="3.1"/><circle cx="-284.1" cy="20.5" r="3.6"/><circle cx="-213.4" cy="20.8" r="3.1"/><circle cx="-195.9" cy="20.2" r="4.2"/><circle cx="-140.0" cy="19.5" r="4.0"/><circle cx="-58.0" cy="18.8" r="3.7"/><circle cx="19.3" cy="19.0" r="4.1"/><circle cx="39.1" cy="20.4" r="3.9"/><circle cx="79.5" cy="19.5" r="3.6"/><circle cx="131.8" cy="20.4" r="3.2"/><circle cx="184.7" cy="22.4" r="3.0"/><circle cx="198.8" cy="19.1" r="3.8"/><circle cx="323.4" cy="19.2" r="4.1"/><circle cx="352.0" cy="20.6" r="4.1"/><circle cx="418.5" cy="21.5" r="3.4"/><circle cx="409.3" cy="20.5" r="3.4"/><circle cx="499.3" cy="22.3" r="3.3"/><circle cx="508.4" cy="17.9" r="3.2"/><circle cx="-240.5" cy="30.9" r="3.0"/><circle cx="-178.5" cy="34.2" r="3.1"/><circle cx="-109.5" cy="24.0" r="3.8"/><circle cx="32.0" cy="31.3" r="2.8"/><circle cx="216.8" cy="31.4" r="3.2"/><circle cx="339.9" cy="26.8" r="3.3"/><circle cx="-264.7" cy="37.1" r="3.7"/><circle cx="-195.0" cy="39.9" r="3.0"/><circle cx="-117.4" cy="38.9" r="3.0"/><circle cx="-67.7" cy="37.2" r="3.9"/><circle cx="19.8" cy="36.6" r="3.3"/><circle cx="61.6" cy="38.8" r="4.0"/><circle cx="286.3" cy="37.3" r="4.2"/><circle cx="347.0" cy="36.0" r="2.8"/><circle cx="377.5" cy="36.4" r="3.2"/><circle cx="444.5" cy="37.1" r="3.5"/><circle cx="482.6" cy="35.6" r="3.1"/><circle cx="-301.3" cy="42.9" r="2.9"/><circle cx="-179.8" cy="51.6" r="3.8"/><circle cx="93.3" cy="45.3" r="3.1"/><circle cx="467.2" cy="45.7" r="3.6"/><circle cx="523.8" cy="47.3" r="3.2"/><circle cx="-260.0" cy="57.2" r="3.4"/><circle cx="-275.3" cy="56.3" r="4.0"/><circle cx="-232.1" cy="54.7" r="4.2"/><circle cx="-143.1" cy="55.0" r="4.0"/><circle cx="-142.9" cy="58.5" r="2.9"/><circle cx="77.5" cy="57.1" r="3.9"/><circle cx="123.0" cy="58.2" r="3.4"/><circle cx="132.6" cy="56.5" r="3.6"/><circle cx="156.1" cy="57.2" r="3.1"/><circle cx="232.1" cy="55.7" r="3.6"/><circle cx="238.9" cy="56.4" r="3.7"/><circle cx="446.2" cy="58.1" r="3.6"/><circle cx="508.6" cy="55.2" r="4.1"/><circle cx="-241.9" cy="68.6" r="3.0"/><circle cx="-181.9" cy="61.0" r="3.4"/><circle cx="-41.0" cy="68.9" r="3.0"/><circle cx="216.3" cy="63.6" r="3.8"/><circle cx="280.9" cy="61.2" r="3.4"/><circle cx="395.1" cy="70.0" r="3.6"/><circle cx="466.7" cy="61.8" r="3.1"/><circle cx="-247.4" cy="73.1" r="2.8"/><circle cx="-274.7" cy="74.4" r="3.0"/><circle cx="-233.5" cy="71.6" r="4.2"/><circle cx="-140.3" cy="73.4" r="4.1"/><circle cx="-91.8" cy="71.6" r="3.7"/><circle cx="-7.3" cy="73.9" r="2.9"/><circle cx="105.1" cy="73.8" r="4.0"/><circle cx="196.7" cy="75.3" r="3.8"/><circle cx="155.1" cy="75.6" r="3.0"/><circle cx="254.4" cy="76.0" r="3.1"/><circle cx="291.5" cy="75.1" r="3.0"/><circle cx="301.8" cy="76.4" r="3.9"/><circle cx="418.3" cy="72.5" r="3.0"/><circle cx="475.5" cy="74.1" r="2.9"/><circle cx="-300.8" cy="88.9" r="2.8"/><circle cx="91.1" cy="85.0" r="3.0"/><circle cx="340.6" cy="80.2" r="3.2"/><circle cx="398.0" cy="78.2" r="3.7"/><circle cx="-290.1" cy="94.4" r="3.8"/><circle cx="-205.3" cy="92.9" r="3.6"/><circle cx="-112.1" cy="93.7" r="3.7"/><circle cx="-88.4" cy="92.0" r="2.9"/><circle cx="68.7" cy="90.9" r="3.3"/><circle cx="67.6" cy="90.5" r="3.4"/><circle cx="163.2" cy="92.0" r="3.6"/><circle cx="231.1" cy="92.3" r="3.3"/><circle cx="-180.1" cy="100.7" r="3.6"/><circle cx="-107.8" cy="97.9" r="3.7"/><circle cx="340.4" cy="103.2" r="3.3"/><circle cx="524.7" cy="99.3" r="3.6"/><circle cx="-272.1" cy="111.6" r="3.8"/><circle cx="-191.5" cy="109.4" r="3.0"/><circle cx="-202.6" cy="107.6" r="3.1"/><circle cx="-52.8" cy="108.3" r="3.3"/><circle cx="83.8" cy="109.4" r="3.7"/><circle cx="138.4" cy="110.3" r="3.6"/><circle cx="236.1" cy="111.4" r="3.7"/><circle cx="295.0" cy="109.7" r="4.0"/><circle cx="309.1" cy="112.0" r="3.0"/><circle cx="346.8" cy="108.2" r="3.6"/><circle cx="475.5" cy="110.5" r="3.4"/><circle cx="-301.5" cy="121.4" r="3.4"/><circle cx="30.9" cy="114.8" r="3.6"/><circle cx="91.5" cy="123.9" r="3.7"/><circle cx="146.7" cy="114.7" r="3.0"/><circle cx="217.5" cy="121.8" r="3.5"/><circle cx="279.3" cy="115.2" r="4.0"/><circle cx="338.2" cy="121.5" r="3.3"/><circle cx="396.2" cy="124.7" r="3.2"/><circle cx="-271.5" cy="127.0" r="4.1"/><circle cx="-195.7" cy="130.3" r="3.4"/><circle cx="-115.3" cy="128.6" r="3.2"/><circle cx="-49.8" cy="129.5" r="2.9"/><circle cx="-73.8" cy="126.2" r="3.6"/><circle cx="-20.1" cy="128.3" r="3.2"/><circle cx="66.9" cy="126.8" r="3.1"/><circle cx="137.7" cy="130.2" r="3.1"/><circle cx="99.0" cy="128.0" r="3.1"/><circle cx="201.6" cy="128.0" r="3.7"/><circle cx="231.1" cy="125.9" r="3.1"/><circle cx="290.7" cy="129.0" r="3.6"/><circle cx="363.5" cy="128.7" r="3.3"/><circle cx="363.7" cy="127.3" r="3.7"/><circle cx="429.8" cy="128.3" r="3.2"/><circle cx="512.5" cy="127.4" r="3.7"/><circle cx="-241.4" cy="138.7" r="3.9"/><circle cx="-181.0" cy="140.1" r="3.1"/><circle cx="91.2" cy="136.1" r="3.1"/><circle cx="216.6" cy="140.6" r="3.2"/><circle cx="278.5" cy="131.9" r="3.8"/><circle cx="395.8" cy="138.2" r="3.2"/><circle cx="467.7" cy="135.2" r="4.0"/><circle cx="-218.2" cy="146.6" r="3.0"/><circle cx="-9.7" cy="144.3" r="4.2"/><circle cx="82.7" cy="148.3" r="3.9"/><circle cx="160.0" cy="145.1" r="3.0"/><circle cx="183.1" cy="147.9" r="3.9"/><circle cx="225.2" cy="144.2" r="2.9"/><circle cx="229.0" cy="148.3" r="3.2"/><circle cx="291.3" cy="144.3" r="3.6"/><circle cx="316.7" cy="146.5" r="2.9"/><circle cx="382.6" cy="143.5" r="3.6"/><circle cx="475.3" cy="144.8" r="3.9"/><circle cx="-299.3" cy="150.3" r="3.0"/><circle cx="-239.9" cy="156.0" r="2.8"/><circle cx="33.3" cy="160.7" r="3.0"/><circle cx="278.5" cy="151.0" r="3.1"/><circle cx="-273.3" cy="163.8" r="3.5"/><circle cx="-194.7" cy="164.0" r="4.1"/><circle cx="-113.8" cy="165.0" r="3.0"/><circle cx="-70.2" cy="166.1" r="3.6"/><circle cx="-50.3" cy="164.8" r="3.1"/><circle cx="-34.1" cy="163.1" r="3.3"/><circle cx="76.8" cy="161.8" r="3.8"/><circle cx="112.1" cy="162.4" r="3.3"/><circle cx="117.3" cy="165.3" r="3.1"/><circle cx="230.6" cy="163.1" r="3.9"/><circle cx="286.3" cy="163.9" r="2.9"/><circle cx="459.8" cy="161.8" r="3.2"/><circle cx="518.0" cy="166.2" r="3.0"/><circle cx="-178.4" cy="177.4" r="3.4"/><circle cx="-108.9" cy="170.5" r="3.3"/><circle cx="147.0" cy="175.8" r="3.2"/><circle cx="214.3" cy="167.6" r="3.3"/><circle cx="466.1" cy="175.1" r="3.2"/><circle cx="-127.5" cy="180.3" r="3.1"/><circle cx="-68.3" cy="183.2" r="2.8"/><circle cx="-103.5" cy="182.2" r="3.0"/><circle cx="-29.5" cy="183.4" r="3.6"/><circle cx="-4.4" cy="181.2" r="3.9"/><circle cx="77.2" cy="183.7" r="4.1"/><circle cx="73.7" cy="182.9" r="3.4"/><circle cx="227.4" cy="179.5" r="3.6"/><circle cx="270.3" cy="180.8" r="4.1"/><circle cx="289.8" cy="182.7" r="3.9"/><circle cx="306.4" cy="181.1" r="4.1"/><circle cx="386.2" cy="183.4" r="3.2"/><circle cx="347.9" cy="183.0" r="3.8"/><circle cx="-39.8" cy="191.0" r="3.0"/><circle cx="215.2" cy="185.2" r="3.7"/><circle cx="469.7" cy="190.8" r="3.6"/><circle cx="-291.3" cy="198.5" r="3.8"/><circle cx="-169.6" cy="198.1" r="2.9"/><circle cx="-71.1" cy="199.7" r="3.2"/><circle cx="-27.8" cy="199.3" r="4.1"/><circle cx="12.8" cy="202.3" r="3.6"/><circle cx="74.6" cy="198.2" r="3.2"/><circle cx="104.3" cy="201.2" r="3.0"/><circle cx="267.5" cy="201.6" r="3.6"/><circle cx="224.2" cy="201.2" r="4.0"/><circle cx="403.9" cy="201.2" r="3.5"/><circle cx="457.2" cy="202.5" r="3.4"/><circle cx="-40.2" cy="211.2" r="3.5"/><circle cx="30.0" cy="207.8" r="3.1"/><circle cx="90.9" cy="208.0" r="3.6"/><circle cx="281.5" cy="210.3" r="3.7"/><circle cx="466.3" cy="211.0" r="2.9"/><circle cx="-254.0" cy="220.3" r="3.9"/><circle cx="-244.5" cy="217.8" r="2.8"/><circle cx="-191.1" cy="218.6" r="3.3"/><circle cx="-66.5" cy="220.4" r="3.6"/><circle cx="60.0" cy="220.0" r="3.4"/><circle cx="207.0" cy="215.8" r="3.6"/><circle cx="235.4" cy="219.0" r="2.9"/><circle cx="322.7" cy="219.2" r="2.9"/><circle cx="361.1" cy="215.7" r="3.7"/><circle cx="376.8" cy="218.4" r="3.2"/><circle cx="400.9" cy="217.0" r="4.1"/><circle cx="-300.9" cy="230.8" r="3.7"/><circle cx="93.0" cy="231.1" r="4.0"/><circle cx="216.3" cy="228.5" r="3.5"/><circle cx="281.9" cy="227.1" r="3.1"/><circle cx="468.7" cy="224.1" r="3.1"/><circle cx="-249.8" cy="238.1" r="3.2"/><circle cx="-231.3" cy="236.4" r="2.9"/><circle cx="-90.6" cy="237.1" r="3.6"/><circle cx="-32.1" cy="237.9" r="3.9"/><circle cx="137.1" cy="236.0" r="3.4"/><circle cx="108.9" cy="236.7" r="2.8"/><circle cx="192.7" cy="234.1" r="3.8"/><circle cx="194.1" cy="235.1" r="3.9"/><circle cx="243.2" cy="236.1" r="3.2"/><circle cx="319.8" cy="235.0" r="2.9"/><circle cx="361.6" cy="234.5" r="2.8"/><circle cx="390.2" cy="237.3" r="4.2"/><circle cx="404.0" cy="234.3" r="2.9"/><circle cx="439.2" cy="236.6" r="4.1"/><circle cx="-106.7" cy="245.4" r="2.9"/><circle cx="-39.6" cy="249.5" r="2.9"/><circle cx="92.7" cy="249.0" r="3.7"/><circle cx="146.6" cy="250.6" r="3.9"/><circle cx="339.5" cy="249.9" r="2.9"/><circle cx="394.2" cy="249.6" r="3.2"/><circle cx="467.4" cy="241.4" r="3.3"/><circle cx="-293.1" cy="253.7" r="3.9"/><circle cx="-213.1" cy="252.1" r="3.6"/><circle cx="-175.8" cy="254.3" r="3.6"/><circle cx="-47.1" cy="255.0" r="3.1"/><circle cx="-92.1" cy="253.9" r="3.2"/><circle cx="116.0" cy="251.7" r="3.0"/><circle cx="204.9" cy="253.4" r="4.2"/><circle cx="162.2" cy="255.1" r="4.1"/><circle cx="275.8" cy="252.7" r="3.5"/><circle cx="325.8" cy="254.5" r="3.5"/><circle cx="-300.8" cy="258.7" r="3.4"/><circle cx="-238.5" cy="265.2" r="3.8"/><circle cx="147.4" cy="257.7" r="3.7"/><circle cx="339.7" cy="267.4" r="4.0"/><circle cx="-207.1" cy="272.2" r="3.3"/><circle cx="-75.2" cy="270.5" r="2.9"/><circle cx="-81.3" cy="272.0" r="3.9"/><circle cx="135.5" cy="272.9" r="3.8"/><circle cx="102.6" cy="272.0" r="3.7"/><circle cx="225.9" cy="269.9" r="2.9"/><circle cx="312.8" cy="270.3" r="3.2"/><circle cx="327.7" cy="272.4" r="3.7"/><circle cx="-299.8" cy="279.9" r="3.9"/><circle cx="-241.2" cy="275.2" r="2.8"/><circle cx="-41.9" cy="281.9" r="3.1"/><circle cx="216.4" cy="278.5" r="3.7"/><circle cx="281.5" cy="283.1" r="3.9"/><circle cx="341.8" cy="282.0" r="3.1"/><circle cx="466.5" cy="275.5" r="3.5"/><circle cx="-249.4" cy="289.8" r="3.1"/><circle cx="-137.4" cy="292.2" r="3.7"/><circle cx="-98.0" cy="290.5" r="3.2"/><circle cx="19.3" cy="291.1" r="3.1"/><circle cx="-34.2" cy="289.3" r="3.4"/><circle cx="183.1" cy="290.5" r="3.6"/><circle cx="251.2" cy="290.3" r="3.1"/><circle cx="359.0" cy="288.0" r="4.1"/><circle cx="345.0" cy="289.5" r="4.1"/><circle cx="411.4" cy="291.4" r="2.9"/><circle cx="414.6" cy="288.9" r="3.1"/><circle cx="-108.1" cy="301.3" r="3.1"/><circle cx="339.5" cy="298.2" r="3.7"/><circle cx="469.8" cy="304.8" r="3.4"/><circle cx="-68.5" cy="309.1" r="3.7"/><circle cx="27.5" cy="307.9" r="4.0"/><circle cx="7.0" cy="307.3" r="4.0"/><circle cx="100.3" cy="308.9" r="3.8"/><circle cx="180.8" cy="309.1" r="3.8"/><circle cx="175.5" cy="308.6" r="3.2"/><circle cx="293.2" cy="309.1" r="3.0"/><circle cx="391.8" cy="305.9" r="4.0"/><circle cx="-300.6" cy="316.3" r="3.8"/><circle cx="149.8" cy="318.2" r="3.1"/><circle cx="-21.2" cy="325.3" r="4.0"/><circle cx="-6.2" cy="326.7" r="3.7"/><circle cx="107.4" cy="328.4" r="3.6"/><circle cx="173.6" cy="325.7" r="4.2"/><circle cx="30.6" cy="331.3" r="3.2"/><circle cx="-35.2" cy="341.8" r="3.2"/><circle cx="201.3" cy="344.6" r="3.8"/><circle cx="166.4" cy="342.0" r="2.8"/><circle cx="-301.4" cy="356.0" r="3.4"/><circle cx="146.0" cy="358.2" r="3.1"/><circle cx="-17.8" cy="382.2" r="3.4"/><circle cx="-15.6" cy="398.1" r="3.8"/></g></g></g><g clip-path="url(#wzclip)"><g transform="translate(480,540) rotate(29)"><g stroke="#8c8c8c" stroke-width="1"><line x1="-720" y1="-700.0" x2="720" y2="-700.0"/><line x1="-720" y1="-682.0" x2="720" y2="-682.0"/><line x1="-720" y1="-664.0" x2="720" y2="-664.0"/><line x1="-720" y1="-646.0" x2="720" y2="-646.0"/><line x1="-720" y1="-628.0" x2="720" y2="-628.0"/><line x1="-720" y1="-610.0" x2="720" y2="-610.0"/><line x1="-720" y1="-592.0" x2="720" y2="-592.0"/><line x1="-720" y1="-574.0" x2="720" y2="-574.0"/><line x1="-720" y1="-556.0" x2="720" y2="-556.0"/><line x1="-720" y1="-538.0" x2="720" y2="-538.0"/><line x1="-720" y1="-520.0" x2="720" y2="-520.0"/><line x1="-720" y1="-502.0" x2="720" y2="-502.0"/><line x1="-720" y1="-484.0" x2="720" y2="-484.0"/><line x1="-720" y1="-466.0" x2="720" y2="-466.0"/><line x1="-720" y1="-448.0" x2="720" y2="-448.0"/><line x1="-720" y1="-430.0" x2="720" y2="-430.0"/><line x1="-720" y1="-412.0" x2="720" y2="-412.0"/><line x1="-720" y1="-394.0" x2="720" y2="-394.0"/><line x1="-720" y1="-376.0" x2="720" y2="-376.0"/><line x1="-720" y1="-358.0" x2="720" y2="-358.0"/><line x1="-720" y1="-340.0" x2="720" y2="-340.0"/><line x1="-720" y1="-322.0" x2="720" y2="-322.0"/><line x1="-720" y1="-304.0" x2="720" y2="-304.0"/><line x1="-720" y1="-286.0" x2="720" y2="-286.0"/><line x1="-720" y1="-268.0" x2="720" y2="-268.0"/><line x1="-720" y1="-250.0" x2="720" y2="-250.0"/><line x1="-720" y1="-232.0" x2="720" y2="-232.0"/><line x1="-720" y1="-214.0" x2="720" y2="-214.0"/><line x1="-720" y1="-196.0" x2="720" y2="-196.0"/><line x1="-720" y1="-178.0" x2="720" y2="-178.0"/><line x1="-720" y1="-160.0" x2="720" y2="-160.0"/><line x1="-720" y1="-142.0" x2="720" y2="-142.0"/><line x1="-720" y1="-124.0" x2="720" y2="-124.0"/><line x1="-720" y1="-106.0" x2="720" y2="-106.0"/><line x1="-720" y1="-88.0" x2="720" y2="-88.0"/><line x1="-720" y1="-70.0" x2="720" y2="-70.0"/><line x1="-720" y1="-52.0" x2="720" y2="-52.0"/><line x1="-720" y1="-34.0" x2="720" y2="-34.0"/><line x1="-720" y1="-16.0" x2="720" y2="-16.0"/><line x1="-720" y1="2.0" x2="720" y2="2.0"/><line x1="-720" y1="20.0" x2="720" y2="20.0"/><line x1="-720" y1="38.0" x2="720" y2="38.0"/><line x1="-720" y1="56.0" x2="720" y2="56.0"/><line x1="-720" y1="74.0" x2="720" y2="74.0"/><line x1="-720" y1="92.0" x2="720" y2="92.0"/><line x1="-720" y1="110.0" x2="720" y2="110.0"/><line x1="-720" y1="128.0" x2="720" y2="128.0"/><line x1="-720" y1="146.0" x2="720" y2="146.0"/><line x1="-720" y1="164.0" x2="720" y2="164.0"/><line x1="-720" y1="182.0" x2="720" y2="182.0"/><line x1="-720" y1="200.0" x2="720" y2="200.0"/><line x1="-720" y1="218.0" x2="720" y2="218.0"/><line x1="-720" y1="236.0" x2="720" y2="236.0"/><line x1="-720" y1="254.0" x2="720" y2="254.0"/><line x1="-720" y1="272.0" x2="720" y2="272.0"/><line x1="-720" y1="290.0" x2="720" y2="290.0"/><line x1="-720" y1="308.0" x2="720" y2="308.0"/><line x1="-720" y1="326.0" x2="720" y2="326.0"/><line x1="-720" y1="344.0" x2="720" y2="344.0"/><line x1="-720" y1="362.0" x2="720" y2="362.0"/><line x1="-720" y1="380.0" x2="720" y2="380.0"/><line x1="-720" y1="398.0" x2="720" y2="398.0"/><line x1="-720" y1="416.0" x2="720" y2="416.0"/><line x1="-720" y1="434.0" x2="720" y2="434.0"/><line x1="-720" y1="452.0" x2="720" y2="452.0"/><line x1="-720" y1="470.0" x2="720" y2="470.0"/><line x1="-720" y1="488.0" x2="720" y2="488.0"/><line x1="-720" y1="506.0" x2="720" y2="506.0"/><line x1="-720" y1="524.0" x2="720" y2="524.0"/><line x1="-720" y1="542.0" x2="720" y2="542.0"/><line x1="-720" y1="560.0" x2="720" y2="560.0"/><line x1="-720" y1="578.0" x2="720" y2="578.0"/><line x1="-720" y1="596.0" x2="720" y2="596.0"/><line x1="-720" y1="614.0" x2="720" y2="614.0"/><line x1="-720" y1="632.0" x2="720" y2="632.0"/><line x1="-720" y1="650.0" x2="720" y2="650.0"/><line x1="-720" y1="668.0" x2="720" y2="668.0"/><line x1="-720" y1="686.0" x2="720" y2="686.0"/><line x1="-720" y1="-720" x2="-720" y2="720"/><line x1="-652" y1="-720" x2="-652" y2="720"/><line x1="-580" y1="-720" x2="-580" y2="720"/><line x1="-512" y1="-720" x2="-512" y2="720"/><line x1="-444" y1="-720" x2="-444" y2="720"/><line x1="-372" y1="-720" x2="-372" y2="720"/><line x1="-300" y1="-720" x2="-300" y2="720"/><line x1="-240" y1="-720" x2="-240" y2="720"/><line x1="-180" y1="-720" x2="-180" y2="720"/><line x1="-108" y1="-720" x2="-108" y2="720"/><line x1="-40" y1="-720" x2="-40" y2="720"/><line x1="32" y1="-720" x2="32" y2="720"/><line x1="92" y1="-720" x2="92" y2="720"/><line x1="148" y1="-720" x2="148" y2="720"/><line x1="216" y1="-720" x2="216" y2="720"/><line x1="280" y1="-720" x2="280" y2="720"/><line x1="340" y1="-720" x2="340" y2="720"/><line x1="396" y1="-720" x2="396" y2="720"/><line x1="468" y1="-720" x2="468" y2="720"/><line x1="524" y1="-720" x2="524" y2="720"/><line x1="596" y1="-720" x2="596" y2="720"/><line x1="664" y1="-720" x2="664" y2="720"/></g></g></g><polygon points="221,357 239,366 87,700 59,725 23,705 167,437" fill="#0e9446" stroke="#2a5a3a" stroke-width="0.8"/><line x1="150" y1="510" x2="200" y2="532" stroke="#235a35" stroke-width="1"/><line x1="107" y1="584" x2="140" y2="600" stroke="#235a35" stroke-width="1"/><line x1="72" y1="643" x2="110" y2="663" stroke="#235a35" stroke-width="1"/><polygon points="281,284 291,289 288,310 270,345 245,370 239,366 255,320 269,294" fill="#07521f"/><path d="M321.0 757.0 C327.2 751.7 340.5 753.8 348.0 755.0 C355.5 756.2 361.0 759.5 366.0 764.0 C371.0 768.5 375.3 774.3 378.0 782.0 C380.7 789.7 382.0 801.5 382.0 810.0 C382.0 818.5 381.3 826.2 378.0 833.0 C374.7 839.8 368.5 846.5 362.0 851.0 C355.5 855.5 345.2 855.8 339.0 860.0 C332.8 864.2 329.7 871.0 325.0 876.0 C320.3 881.0 317.8 886.5 311.0 890.0 C304.2 893.5 291.5 897.3 284.0 897.0 C276.5 896.7 269.8 891.5 266.0 888.0 C262.2 884.5 258.8 882.2 261.0 876.0 C263.2 869.8 272.8 860.5 279.0 851.0 C285.2 841.5 292.7 829.7 298.0 819.0 C303.3 808.3 307.2 797.3 311.0 787.0 C314.8 776.7 314.8 762.3 321.0 757.0 Z" fill="#0a4d21" stroke="#333" stroke-width="0.6"/><path d="M440.0 768.0 C451.2 770.6 522.5 779.7 527.0 800.0 C531.5 820.3 487.1 926.1 479.0 942.0 C470.9 957.9 463.6 939.7 458.0 936.0 C452.4 932.3 435.3 916.8 431.0 910.0 C426.7 903.2 420.8 884.4 421.0 878.0 C421.2 871.6 429.7 858.7 433.0 855.0 C436.3 851.3 447.4 849.1 449.0 846.0 C450.6 842.9 449.7 829.0 447.0 828.0 C444.3 827.0 430.3 836.2 426.0 837.0 C421.7 837.8 412.4 836.9 410.0 835.0 C407.6 833.1 404.4 825.5 405.0 821.0 C405.6 816.5 412.0 801.0 415.0 796.0 C418.0 791.0 428.1 781.3 431.0 778.0 C433.9 774.7 428.8 765.4 440.0 768.0 Z" fill="#13913f" stroke="#333" stroke-width="0.6"/><polygon points="367,424 412,440 400,470 363,555 337,666 322,678 302,670 337,555 370,456" fill="#07521f"/><polygon points="255,604 300,612 303,655 285,660 248,638" fill="#0b4d22"/></g></svg><svg style="position:absolute;left:500px;top:560px;" width="1700" height="1260" viewBox="0 0 1700 1260"><rect x="56.5" y="30.5" width="1596.0" height="1192.0" fill="none" stroke="#9fdcec" stroke-width="1.3"/><rect x="56.5" y="30.5" width="1596.0" height="1192.0" fill="none" stroke="#2a2040" stroke-width="1.3" stroke-dasharray="4 3"/><rect x="57.25" y="31.25" width="19" height="19" fill="none" stroke="#2d7f9c" stroke-width="1.2"/><rect x="57.25" y="617.25" width="19" height="19" fill="none" stroke="#2d7f9c" stroke-width="1.2"/><rect x="57.25" y="1203.25" width="19" height="19" fill="none" stroke="#2d7f9c" stroke-width="1.2"/><rect x="845.25" y="31.25" width="19" height="19" fill="none" stroke="#2d7f9c" stroke-width="1.2"/><rect x="845.25" y="1203.25" width="19" height="19" fill="none" stroke="#2d7f9c" stroke-width="1.2"/><rect x="1633.25" y="31.25" width="19" height="19" fill="none" stroke="#2d7f9c" stroke-width="1.2"/><rect x="1633.25" y="617.25" width="19" height="19" fill="none" stroke="#2d7f9c" stroke-width="1.2"/><rect x="1633.25" y="1203.25" width="19" height="19" fill="none" stroke="#2d7f9c" stroke-width="1.2"/></svg><div style="position:absolute;left:2776px;top:285px;width:696px;height:1781px;background:#ececec"></div><div style="position:absolute;left:2796px;top:295.78px;font-size:23.2px;line-height:1;font-weight:400;color:#222;white-space:nowrap;">Items</div><svg style="position:absolute;left:3418px;top:296px;" width="22" height="22" viewBox="0 0 22 22"><rect x="1" y="1" width="20" height="20" rx="3" fill="none" stroke="#777" stroke-width="1.6"/><rect x="8" y="5" width="9" height="9" fill="none" stroke="#666" stroke-width="1.8"/><rect x="5" y="9" width="8" height="8" fill="#eee" stroke="#666" stroke-width="1.8"/></svg><svg style="position:absolute;left:3446px;top:296px;" width="22" height="22" viewBox="0 0 22 22"><rect x="1" y="1" width="20" height="20" rx="3" fill="none" stroke="#777" stroke-width="1.6"/><path d="M5.5 5.5 L16.5 16.5 M16.5 5.5 L5.5 16.5" stroke="#666" stroke-width="3.2"/></svg><div style="position:absolute;left:2788px;top:327px;width:684px;height:234px;background:#fff;border:1.5px solid #b5b5b5;box-sizing:border-box"></div><div style="position:absolute;left:2789px;top:328px;width:682px;height:38px;background:linear-gradient(#f8f8f8,#e8e8e8);border-bottom:2px solid #a9a9a9;box-sizing:border-box"></div><div style="position:absolute;left:2844px;top:330px;width:1.5px;height:36px;background:#d3d3d3"></div><div style="position:absolute;left:2900px;top:330px;width:1.5px;height:36px;background:#d3d3d3"></div><svg style="position:absolute;left:2796px;top:336px;" width="30" height="22" viewBox="0 0 30 22"><path d="M1 11 Q15 -2 29 11 Q15 24 1 11 Z" fill="#fafafa" stroke="#888" stroke-width="1.4"/><circle cx="15" cy="11" r="6" fill="#9a9a9a" stroke="#666" stroke-width="1"/><circle cx="15" cy="11" r="2.8" fill="#333"/><circle cx="16.5" cy="9.5" r="1" fill="#fff"/></svg><svg style="position:absolute;left:2854px;top:334px;" width="24" height="28" viewBox="0 0 24 28"><path d="M5 12 L5 8 Q5 1 12 1 Q19 1 19 8 L19 12" fill="none" stroke="#6a6a6a" stroke-width="2.6"/><rect x="1" y="12" width="22" height="16" rx="3" fill="#666"/></svg><div style="position:absolute;left:2906px;top:334.48px;font-size:26.5px;line-height:1;font-weight:400;color:#222;white-space:nowrap;">Item</div><svg style="position:absolute;left:2797px;top:372px;" width="26" height="26" viewBox="0 0 26 26"><rect x="0.75" y="0.75" width="24.5" height="24.5" rx="0.5" fill="#fff" stroke="#ababab" stroke-width="1.5"/><path d="M6.5 13.5 L11 20 L19.5 5.5" fill="none" stroke="#222" stroke-width="3" stroke-linecap="butt" stroke-linejoin="miter"/></svg><svg style="position:absolute;left:2852px;top:372px;" width="26" height="26" viewBox="0 0 26 26"><rect x="0.75" y="0.75" width="24.5" height="24.5" rx="0.5" fill="#fff" stroke="#ababab" stroke-width="1.5"/></svg><svg style="position:absolute;left:2909px;top:372px;" width="30" height="30" viewBox="0 0 30 30"><rect x="4" y="3" width="23" height="23" fill="url(#mg)" stroke="#8a8a8a" stroke-width="1.3"/><path d="M4 3 Q1 3 1 6 L1 24 Q1 27 4 27 L6 27" fill="#ddd" stroke="#8a8a8a" stroke-width="1.3"/><defs><linearGradient id="mg" x1="0" x2="1"><stop offset="0" stop-color="#bdbdbd"/><stop offset="1" stop-color="#f5f5f5"/></linearGradient></defs></svg><div style="position:absolute;left:2953px;top:372.32px;font-size:25.5px;line-height:1;font-weight:700;color:#000;white-space:nowrap;">Map 1</div><svg style="position:absolute;left:3102px;top:566px;" width="62" height="3" viewBox="0 0 62 3"><rect x="0" y="0" width="2" height="2" fill="#a0a0a0"/><rect x="12" y="0" width="2" height="2" fill="#a0a0a0"/><rect x="24" y="0" width="2" height="2" fill="#a0a0a0"/><rect x="36" y="0" width="2" height="2" fill="#a0a0a0"/><rect x="48" y="0" width="2" height="2" fill="#a0a0a0"/><rect x="60" y="0" width="2" height="2" fill="#a0a0a0"/></svg><div style="position:absolute;left:2796px;top:581.78px;font-size:23.2px;line-height:1;font-weight:400;color:#222;white-space:nowrap;">Undo History</div><svg style="position:absolute;left:3418px;top:582px;" width="22" height="22" viewBox="0 0 22 22"><rect x="1" y="1" width="20" height="20" rx="3" fill="none" stroke="#777" stroke-width="1.6"/><rect x="8" y="5" width="9" height="9" fill="none" stroke="#666" stroke-width="1.8"/><rect x="5" y="9" width="8" height="8" fill="#eee" stroke="#666" stroke-width="1.8"/></svg><svg style="position:absolute;left:3446px;top:582px;" width="22" height="22" viewBox="0 0 22 22"><rect x="1" y="1" width="20" height="20" rx="3" fill="none" stroke="#777" stroke-width="1.6"/><path d="M5.5 5.5 L16.5 16.5 M16.5 5.5 L5.5 16.5" stroke="#666" stroke-width="3.2"/></svg><div style="position:absolute;left:2788px;top:613px;width:684px;height:320px;background:#fff;border:1.5px solid #b5b5b5;box-sizing:border-box"></div><div style="position:absolute;left:2789.5px;top:884px;width:1653px;height:29px;background:#d9d9d9;width:653px"></div><div style="position:absolute;left:2797px;top:616.09px;font-size:24.6px;line-height:1;font-weight:400;color:#000;white-space:nowrap;">Change Page Size</div><div style="position:absolute;left:2797px;top:646.09px;font-size:24.6px;line-height:1;font-weight:400;color:#000;white-space:nowrap;">Change Page Size</div><div style="position:absolute;left:2797px;top:676.09px;font-size:24.6px;line-height:1;font-weight:400;color:#000;white-space:nowrap;">Change Page Size</div><div style="position:absolute;left:2797px;top:706.09px;font-size:24.6px;line-height:1;font-weight:400;color:#000;white-space:nowrap;">Change Page Size</div><div style="position:absolute;left:2797px;top:736.09px;font-size:24.6px;line-height:1;font-weight:400;color:#000;white-space:nowrap;">Change Page Size</div><div style="position:absolute;left:2797px;top:766.09px;font-size:24.6px;line-height:1;font-weight:400;color:#000;white-space:nowrap;">Change Page Size</div><div style="position:absolute;left:2797px;top:796.09px;font-size:24.6px;line-height:1;font-weight:400;color:#000;white-space:nowrap;">Change Page Size</div><div style="position:absolute;left:2797px;top:826.09px;font-size:24.6px;line-height:1;font-weight:400;color:#000;white-space:nowrap;">Change Page Size</div><div style="position:absolute;left:2797px;top:856.09px;font-size:24.6px;line-height:1;font-weight:400;color:#000;white-space:nowrap;">Change Page Background</div><div style="position:absolute;left:2797px;top:886.09px;font-size:24.6px;line-height:1;font-weight:400;color:#000;white-space:nowrap;">Create Map</div><div style="position:absolute;left:3442px;top:614.5px;width:28.5px;height:317px;background:#f6f6f6;border-left:1.5px solid #dcdcdc;box-sizing:border-box"></div><svg style="position:absolute;left:3447px;top:621px;" width="20" height="12" viewBox="0 0 20 12"><path d="M2 10 L18 10 L10 2 Z" fill="#444"/></svg><svg style="position:absolute;left:3447px;top:912px;" width="20" height="12" viewBox="0 0 20 12"><path d="M2 2 L18 2 L10 10 Z" fill="#444"/></svg><div style="position:absolute;left:3443.5px;top:640px;width:27px;height:45px;background:linear-gradient(90deg,#e2e2e2,#d8d8d8);border-bottom:1.5px solid #cfcfcf;box-sizing:border-box"></div><div style="position:absolute;left:3444px;top:638px;width:27px;height:1.5px;background:#ccc"></div><div style="position:absolute;left:3444px;top:903.5px;width:27px;height:1.5px;background:#d0d0d0"></div><svg style="position:absolute;left:3102px;top:938px;" width="62" height="3" viewBox="0 0 62 3"><rect x="0" y="0" width="2" height="2" fill="#a0a0a0"/><rect x="12" y="0" width="2" height="2" fill="#a0a0a0"/><rect x="24" y="0" width="2" height="2" fill="#a0a0a0"/><rect x="36" y="0" width="2" height="2" fill="#a0a0a0"/><rect x="48" y="0" width="2" height="2" fill="#a0a0a0"/><rect x="60" y="0" width="2" height="2" fill="#a0a0a0"/></svg><div style="position:absolute;left:2788px;top:998px;width:684px;height:2px;background:#a9a9a9"></div><div style="position:absolute;left:2788px;top:1000px;width:684px;height:2px;background:#f8f8f8"></div><div style="position:absolute;left:2788px;top:951px;width:132px;height:49px;background:linear-gradient(#e6e6e6,#d6d6d6);border:2px solid #a9a9a9;border-bottom:none;border-radius:6px 6px 0 0;box-sizing:border-box"></div><div style="position:absolute;left:2918px;top:947px;width:236px;height:55px;background:linear-gradient(#f7f7f7,#ececec);border:2px solid #a9a9a9;border-bottom:none;border-radius:6px 6px 0 0;box-sizing:border-box"></div><div style="position:absolute;left:2813.5px;top:962.72px;font-size:26.8px;line-height:1;font-weight:400;color:#222;white-space:nowrap;">Layout</div><div style="position:absolute;left:2943px;top:960.21px;font-size:27.4px;line-height:1;font-weight:400;color:#111;white-space:nowrap;">Item Properties</div><div style="position:absolute;left:2797px;top:1008.44px;font-size:23.6px;line-height:1;font-weight:400;color:#222;white-space:nowrap;">Item Properties</div><svg style="position:absolute;left:3418px;top:1010px;" width="22" height="22" viewBox="0 0 22 22"><rect x="1" y="1" width="20" height="20" rx="3" fill="none" stroke="#777" stroke-width="1.6"/><rect x="8" y="5" width="9" height="9" fill="none" stroke="#666" stroke-width="1.8"/><rect x="5" y="9" width="8" height="8" fill="#eee" stroke="#666" stroke-width="1.8"/></svg><svg style="position:absolute;left:3446px;top:1010px;" width="22" height="22" viewBox="0 0 22 22"><rect x="1" y="1" width="20" height="20" rx="3" fill="none" stroke="#777" stroke-width="1.6"/><path d="M5.5 5.5 L16.5 16.5 M16.5 5.5 L5.5 16.5" stroke="#666" stroke-width="3.2"/></svg><div style="position:absolute;left:2788px;top:1040px;width:684px;height:40px;background:#c9c9c9"></div><div style="position:absolute;left:2799.5px;top:1047.23px;font-size:26.2px;line-height:1;font-weight:700;color:#000;white-space:nowrap;">Map 1</div><div style="position:absolute;left:2853px;top:1098px;width:2px;height:24px;background:#f8f8f8;border-left:1px solid #d8d8d8"></div><div style="position:absolute;left:2966px;top:1098px;width:2px;height:24px;background:#f8f8f8;border-left:1px solid #d8d8d8"></div><div style="position:absolute;left:3081px;top:1098px;width:2px;height:24px;background:#f8f8f8;border-left:1px solid #d8d8d8"></div><div style="position:absolute;left:3195px;top:1098px;width:2px;height:24px;background:#f8f8f8;border-left:1px solid #d8d8d8"></div><div style="position:absolute;left:2788px;top:1142px;width:684px;height:924px;border-top:1.5px solid #bdbdbd;border-left:1.5px solid #cfcfcf;box-sizing:border-box;background:#ececec"></div><div style="position:absolute;left:3442px;top:1143.5px;width:29.5px;height:922.5px;background:#f4f4f4;border-left:1.5px solid #d6d6d6;box-sizing:border-box"></div><svg style="position:absolute;left:3447px;top:1151px;" width="20" height="12" viewBox="0 0 20 12"><path d="M2 10 L18 10 L10 2 Z" fill="#444"/></svg><svg style="position:absolute;left:3447px;top:2040px;" width="20" height="12" viewBox="0 0 20 12"><path d="M2 2 L18 2 L10 10 Z" fill="#444"/></svg><div style="position:absolute;left:3444px;top:1169px;width:27px;height:1.5px;background:#ccc"></div><div style="position:absolute;left:3444px;top:2030px;width:27px;height:1.5px;background:#ccc"></div><div style="position:absolute;left:3444.5px;top:1171px;width:26px;height:365px;background:linear-gradient(90deg,#ffffff,#f7f7f7)"></div><div style="position:absolute;left:3444.5px;top:1536px;width:26px;height:494px;background:#e3e3e3;border-top:1.5px solid #d2d2d2;box-sizing:border-box"></div><svg style="position:absolute;left:2818px;top:1176px;" width="22" height="16" viewBox="0 0 22 16"><path d="M0 0 L22 0 L11 15 Z" fill="#333"/></svg><div style="position:absolute;left:2857px;top:1171.55px;font-size:27px;line-height:1;font-weight:700;color:#000;white-space:nowrap;">Main Properties</div><div style="position:absolute;left:2815px;top:1207px;width:605px;height:289px;border:1.5px solid #d2d2d2;border-radius:4px;background:#e8e8e8;box-sizing:border-box"></div><div style="position:absolute;left:2841px;top:1245.90px;font-size:26px;line-height:1;font-weight:400;color:#000;white-space:nowrap;">Scale</div><div style="position:absolute;left:3007px;top:1234.5px;width:313px;height:47px;background:#fff;border:2px solid #a3a3a3;border-radius:6px;box-sizing:border-box"></div><div style="position:absolute;left:3017px;top:1244.62px;font-size:26.5px;line-height:1;font-weight:400;color:#000;white-space:nowrap;">18205</div><svg style="position:absolute;left:3338px;top:1247px;overflow:visible" width="54" height="28" viewBox="0 0 54 28"><path d="M1.5 11 L10 2 L10 20 Z" fill="#9a9a9a" stroke="#555" stroke-width="1.6" stroke-linejoin="round"/><rect x="10.5" y="-3.5" width="24" height="30" fill="#fff" stroke="#7a7a7a" stroke-width="2.2"/><line x1="10.5" y1="11" x2="34.5" y2="11" stroke="#7a7a7a" stroke-width="2"/><line x1="16" y1="4" x2="30" y2="4" stroke="#555" stroke-width="4" stroke-linecap="round"/><line x1="16" y1="19" x2="30" y2="19" stroke="#555" stroke-width="2.5"/><path d="M42 20 L51 20 L46.5 24.5 Z" fill="#444"/></svg><div style="position:absolute;left:2841px;top:1308.55px;font-size:27px;line-height:1;font-weight:400;color:#000;white-space:nowrap;">Map rotation</div><div style="position:absolute;left:3007px;top:1298.5px;width:313px;height:45px;background:#fff;border:2px solid #a3a3a3;border-radius:6px;box-sizing:border-box"></div><div style="position:absolute;left:3017px;top:1307.37px;font-size:27px;line-height:1;font-weight:400;color:#000;white-space:nowrap;">0.00 °</div><div style="position:absolute;left:3289px;top:1300.5px;width:1.5px;height:41px;background:#cfcfcf"></div><svg style="position:absolute;left:3297px;top:1309px;" width="18" height="26" viewBox="0 0 18 26"><path d="M1 10 L17 10 L9 1 Z" fill="#444"/><path d="M1 16 L17 16 L9 25 Z" fill="#444"/></svg><svg style="position:absolute;left:3338px;top:1311px;overflow:visible" width="54" height="28" viewBox="0 0 54 28"><path d="M1.5 11 L10 2 L10 20 Z" fill="#9a9a9a" stroke="#555" stroke-width="1.6" stroke-linejoin="round"/><rect x="10.5" y="-3.5" width="24" height="30" fill="#fff" stroke="#7a7a7a" stroke-width="2.2"/><line x1="10.5" y1="11" x2="34.5" y2="11" stroke="#7a7a7a" stroke-width="2"/><line x1="16" y1="4" x2="30" y2="4" stroke="#555" stroke-width="4" stroke-linecap="round"/><line x1="16" y1="19" x2="30" y2="19" stroke="#555" stroke-width="2.5"/><path d="M42 20 L51 20 L46.5 24.5 Z" fill="#444"/></svg><div style="position:absolute;left:2841px;top:1372.97px;font-size:26.5px;line-height:1;font-weight:400;color:#000;white-space:nowrap;">CRS</div><div style="position:absolute;left:3007px;top:1361px;width:253px;height:51px;background:linear-gradient(#fbfbfb,#f1f1f1);border:2px solid #a8a8a8;border-radius:6px;box-sizing:border-box"></div><div style="position:absolute;left:3017px;top:1373.37px;font-size:26px;line-height:1;font-weight:400;color:#000;white-space:nowrap;">Use Project CRS</div><svg style="position:absolute;left:3227px;top:1381.5px;" width="18" height="10" viewBox="0 0 18 10"><path d="M1 1 L17 1 L9 9 Z" fill="#333"/></svg><div style="position:absolute;left:3272px;top:1362px;width:48px;height:47px;background:linear-gradient(#f9f9f9,#ededed);border:2px solid #b0b0b0;border-radius:5px;box-sizing:border-box"></div><svg style="position:absolute;left:3338px;top:1375px;overflow:visible" width="54" height="28" viewBox="0 0 54 28"><path d="M1.5 11 L10 2 L10 20 Z" fill="#9a9a9a" stroke="#555" stroke-width="1.6" stroke-linejoin="round"/><rect x="10.5" y="-3.5" width="24" height="30" fill="#fff" stroke="#7a7a7a" stroke-width="2.2"/><line x1="10.5" y1="11" x2="34.5" y2="11" stroke="#7a7a7a" stroke-width="2"/><line x1="16" y1="4" x2="30" y2="4" stroke="#555" stroke-width="4" stroke-linecap="round"/><line x1="16" y1="19" x2="30" y2="19" stroke="#555" stroke-width="2.5"/><path d="M42 20 L51 20 L46.5 24.5 Z" fill="#444"/></svg><svg style="position:absolute;left:2841px;top:1434px;" width="26" height="26" viewBox="0 0 26 26"><rect x="0.75" y="0.75" width="24.5" height="24.5" rx="0.5" fill="#fff" stroke="#ababab" stroke-width="1.5"/><path d="M6.5 13.5 L11 20 L19.5 5.5" fill="none" stroke="#222" stroke-width="3" stroke-linecap="butt" stroke-linejoin="miter"/></svg><div style="position:absolute;left:2879px;top:1433.89px;font-size:26.6px;line-height:1;font-weight:400;color:#222;white-space:nowrap;">Draw map canvas items</div><svg style="position:absolute;left:2818px;top:1518.5px;" width="22" height="16" viewBox="0 0 22 16"><path d="M0 0 L22 0 L11 15 Z" fill="#333"/></svg><div style="position:absolute;left:2857px;top:1514.05px;font-size:27px;line-height:1;font-weight:700;color:#000;white-space:nowrap;">Layers</div><div style="position:absolute;left:2815px;top:1549px;width:605px;height:224px;border:1.5px solid #d2d2d2;border-radius:4px;background:#e8e8e8;box-sizing:border-box"></div><svg style="position:absolute;left:2841px;top:1588px;" width="26" height="26" viewBox="0 0 26 26"><rect x="0.75" y="0.75" width="24.5" height="24.5" rx="0.5" fill="#fff" stroke="#ababab" stroke-width="1.5"/></svg><div style="position:absolute;left:2879px;top:1587.89px;font-size:26.6px;line-height:1;font-weight:400;color:#222;white-space:nowrap;">Follow map theme</div><div style="position:absolute;left:3123px;top:1577px;width:197px;height:47px;background:linear-gradient(#fbfbfb,#f1f1f1);border:2px solid #a8a8a8;border-radius:6px;box-sizing:border-box"></div><div style="position:absolute;left:3133px;top:1587.12px;font-size:26.5px;line-height:1;font-weight:400;color:#000;white-space:nowrap;">(none)</div><svg style="position:absolute;left:3287px;top:1595.5px;" width="18" height="10" viewBox="0 0 18 10"><path d="M1 1 L17 1 L9 9 Z" fill="#333"/></svg><svg style="position:absolute;left:3338px;top:1590px;overflow:visible" width="54" height="28" viewBox="0 0 54 28"><path d="M1.5 11 L10 2 L10 20 Z" fill="#9a9a9a" stroke="#555" stroke-width="1.6" stroke-linejoin="round"/><rect x="10.5" y="-3.5" width="24" height="30" fill="#fff" stroke="#7a7a7a" stroke-width="2.2"/><line x1="10.5" y1="11" x2="34.5" y2="11" stroke="#7a7a7a" stroke-width="2"/><line x1="16" y1="4" x2="30" y2="4" stroke="#555" stroke-width="4" stroke-linecap="round"/><line x1="16" y1="19" x2="30" y2="19" stroke="#555" stroke-width="2.5"/><path d="M42 20 L51 20 L46.5 24.5 Z" fill="#444"/></svg><svg style="position:absolute;left:2841px;top:1652px;" width="26" height="26" viewBox="0 0 26 26"><rect x="0.75" y="0.75" width="24.5" height="24.5" rx="0.5" fill="#fff" stroke="#ababab" stroke-width="1.5"/></svg><div style="position:absolute;left:2879px;top:1651.89px;font-size:26.6px;line-height:1;font-weight:400;color:#222;white-space:nowrap;">Lock layers</div><div style="position:absolute;left:3272px;top:1641px;width:48px;height:45px;background:linear-gradient(#f9f9f9,#ededed);border:2px solid #b0b0b0;border-radius:5px;box-sizing:border-box"></div><svg style="position:absolute;left:3338px;top:1654px;overflow:visible" width="54" height="28" viewBox="0 0 54 28"><path d="M1.5 11 L10 2 L10 20 Z" fill="#9a9a9a" stroke="#555" stroke-width="1.6" stroke-linejoin="round"/><rect x="10.5" y="-3.5" width="24" height="30" fill="#fff" stroke="#7a7a7a" stroke-width="2.2"/><line x1="10.5" y1="11" x2="34.5" y2="11" stroke="#7a7a7a" stroke-width="2"/><line x1="16" y1="4" x2="30" y2="4" stroke="#555" stroke-width="4" stroke-linecap="round"/><line x1="16" y1="19" x2="30" y2="19" stroke="#555" stroke-width="2.5"/><path d="M42 20 L51 20 L46.5 24.5 Z" fill="#444"/></svg><svg style="position:absolute;left:2841px;top:1711.5px;" width="26" height="26" viewBox="0 0 26 26"><rect x="0.75" y="0.75" width="24.5" height="24.5" rx="0.5" fill="#e9e9e9" stroke="#c8c8c8" stroke-width="1.5"/></svg><div style="position:absolute;left:2879px;top:1711.39px;font-size:26.6px;line-height:1;font-weight:400;color:#a9a9a9;white-space:nowrap;">Lock styles for layers</div><svg style="position:absolute;left:2818px;top:1796px;" width="22" height="16" viewBox="0 0 22 16"><path d="M0 0 L22 0 L11 15 Z" fill="#333"/></svg><div style="position:absolute;left:2857px;top:1791.55px;font-size:27px;line-height:1;font-weight:700;color:#000;white-space:nowrap;">Extents</div><div style="position:absolute;left:2815px;top:1827px;width:605px;height:300px;border:1.5px solid #d2d2d2;border-radius:4px;background:#e8e8e8;box-sizing:border-box"></div><div style="position:absolute;left:2840.5px;top:1865.14px;font-size:26.3px;line-height:1;font-weight:400;color:#000;white-space:nowrap;">X min</div><div style="position:absolute;left:2929px;top:1855px;width:391px;height:46px;background:#fff;border:2px solid #a3a3a3;border-radius:6px;box-sizing:border-box"></div><div style="position:absolute;left:2939px;top:1864.11px;font-size:27.5px;line-height:1;font-weight:400;color:#000;white-space:nowrap;">987072.946</div><svg style="position:absolute;left:3338px;top:1867px;overflow:visible" width="54" height="28" viewBox="0 0 54 28"><path d="M1.5 11 L10 2 L10 20 Z" fill="#9a9a9a" stroke="#555" stroke-width="1.6" stroke-linejoin="round"/><rect x="10.5" y="-3.5" width="24" height="30" fill="#fff" stroke="#7a7a7a" stroke-width="2.2"/><line x1="10.5" y1="11" x2="34.5" y2="11" stroke="#7a7a7a" stroke-width="2"/><line x1="16" y1="4" x2="30" y2="4" stroke="#555" stroke-width="4" stroke-linecap="round"/><line x1="16" y1="19" x2="30" y2="19" stroke="#555" stroke-width="2.5"/><path d="M42 20 L51 20 L46.5 24.5 Z" fill="#444"/></svg><div style="position:absolute;left:2840.5px;top:1929.14px;font-size:26.3px;line-height:1;font-weight:400;color:#000;white-space:nowrap;">Y min</div><div style="position:absolute;left:2929px;top:1919px;width:391px;height:46px;background:#fff;border:2px solid #a3a3a3;border-radius:6px;box-sizing:border-box"></div><div style="position:absolute;left:2939px;top:1928.11px;font-size:27.5px;line-height:1;font-weight:400;color:#000;white-space:nowrap;">225089.214</div><svg style="position:absolute;left:3338px;top:1931px;overflow:visible" width="54" height="28" viewBox="0 0 54 28"><path d="M1.5 11 L10 2 L10 20 Z" fill="#9a9a9a" stroke="#555" stroke-width="1.6" stroke-linejoin="round"/><rect x="10.5" y="-3.5" width="24" height="30" fill="#fff" stroke="#7a7a7a" stroke-width="2.2"/><line x1="10.5" y1="11" x2="34.5" y2="11" stroke="#7a7a7a" stroke-width="2"/><line x1="16" y1="4" x2="30" y2="4" stroke="#555" stroke-width="4" stroke-linecap="round"/><line x1="16" y1="19" x2="30" y2="19" stroke="#555" stroke-width="2.5"/><path d="M42 20 L51 20 L46.5 24.5 Z" fill="#444"/></svg><div style="position:absolute;left:2840.5px;top:1993.14px;font-size:26.3px;line-height:1;font-weight:400;color:#000;white-space:nowrap;">X max</div><div style="position:absolute;left:2929px;top:1983px;width:391px;height:46px;background:#fff;border:2px solid #a3a3a3;border-radius:6px;box-sizing:border-box"></div><div style="position:absolute;left:2939px;top:1992.11px;font-size:27.5px;line-height:1;font-weight:400;color:#000;white-space:nowrap;">1008601.861</div><svg style="position:absolute;left:3338px;top:1995px;overflow:visible" width="54" height="28" viewBox="0 0 54 28"><path d="M1.5 11 L10 2 L10 20 Z" fill="#9a9a9a" stroke="#555" stroke-width="1.6" stroke-linejoin="round"/><rect x="10.5" y="-3.5" width="24" height="30" fill="#fff" stroke="#7a7a7a" stroke-width="2.2"/><line x1="10.5" y1="11" x2="34.5" y2="11" stroke="#7a7a7a" stroke-width="2"/><line x1="16" y1="4" x2="30" y2="4" stroke="#555" stroke-width="4" stroke-linecap="round"/><line x1="16" y1="19" x2="30" y2="19" stroke="#555" stroke-width="2.5"/><path d="M42 20 L51 20 L46.5 24.5 Z" fill="#444"/></svg><div style="position:absolute;left:2840.5px;top:2057.14px;font-size:26.3px;line-height:1;font-weight:400;color:#000;white-space:nowrap;">Y max</div><div style="position:absolute;left:2929px;top:2047px;width:391px;height:46px;background:#fff;border:2px solid #a3a3a3;border-radius:6px;box-sizing:border-box"></div><div style="position:absolute;left:2939px;top:2056.11px;font-size:27.5px;line-height:1;font-weight:400;color:#000;white-space:nowrap;">241169.454</div><svg style="position:absolute;left:3338px;top:2059px;overflow:visible" width="54" height="28" viewBox="0 0 54 28"><path d="M1.5 11 L10 2 L10 20 Z" fill="#9a9a9a" stroke="#555" stroke-width="1.6" stroke-linejoin="round"/><rect x="10.5" y="-3.5" width="24" height="30" fill="#fff" stroke="#7a7a7a" stroke-width="2.2"/><line x1="10.5" y1="11" x2="34.5" y2="11" stroke="#7a7a7a" stroke-width="2"/><line x1="16" y1="4" x2="30" y2="4" stroke="#555" stroke-width="4" stroke-linecap="round"/><line x1="16" y1="19" x2="30" y2="19" stroke="#555" stroke-width="2.5"/><path d="M42 20 L51 20 L46.5 24.5 Z" fill="#444"/></svg><div style="position:absolute;left:2776px;top:2066px;width:696px;height:60px;background:#ececec"></div><div style="position:absolute;left:2788px;top:2066px;width:655px;height:1.5px;background:#c9c9c9"></div><div style="position:absolute;left:2367px;top:2086.39px;font-size:26.6px;line-height:1;font-weight:400;color:#000;white-space:nowrap;">x: 0 mm</div><div style="position:absolute;left:2579px;top:2086.39px;font-size:26.6px;line-height:1;font-weight:400;color:#000;white-space:nowrap;">y: 62 mm</div><div style="position:absolute;left:2791px;top:2086.73px;font-size:26.2px;line-height:1;font-weight:400;color:#000;white-space:nowrap;">page: 1</div><div style="position:absolute;left:3003px;top:2075px;width:254px;height:46px;background:#fff;border:2px solid #b0b0b0;border-radius:5px;box-sizing:border-box"></div><div style="position:absolute;left:3216px;top:2077px;width:39px;height:42px;background:linear-gradient(#fafafa,#eeeeee);border-left:1.5px solid #d0d0d0;border-radius:0 4px 4px 0;box-sizing:border-box"></div><div style="position:absolute;left:3011px;top:2086.39px;font-size:26.6px;line-height:1;font-weight:400;color:#000;white-space:nowrap;">78.1%</div><svg style="position:absolute;left:3226px;top:2093px;" width="18" height="10" viewBox="0 0 18 10"><path d="M1 1 L17 1 L9 9 Z" fill="#444"/></svg><div style="position:absolute;left:3272px;top:2092.5px;width:195px;height:9px;background:#f4f4f4;border:1.5px solid #c2c2c2;border-radius:5px;box-sizing:border-box"></div><div style="position:absolute;left:3273px;top:2093.5px;width:16px;height:7px;background:#3a8ee6;border-radius:4px"></div><div style="position:absolute;left:3284px;top:2083px;width:25px;height:27px;background:linear-gradient(#ffffff,#f0f0f0);border:1.5px solid #bdbdbd;border-radius:5px;box-sizing:border-box;box-shadow:0 1px 1px rgba(0,0,0,0.15)"></div><svg width="0" height="0" style="position:absolute"><defs><radialGradient id="lens" cx="0.35" cy="0.3" r="0.8"><stop offset="0" stop-color="#ffffff"/><stop offset="1" stop-color="#dcdcdc"/></radialGradient><linearGradient id="sky" x1="0" y1="0" x2="0" y2="1"><stop offset="0" stop-color="#2d7fd0"/><stop offset="1" stop-color="#7db8ea"/></linearGradient><linearGradient id="blueg" x1="0" y1="0" x2="0" y2="1"><stop offset="0" stop-color="#4f94dd"/><stop offset="1" stop-color="#1f5fb0"/></linearGradient></defs></svg><svg style="position:absolute;left:150px;top:148px;" width="40" height="42" viewBox="0 0 40 42"><rect x="1" y="1" width="38" height="40" rx="4.5" fill="#5b8fca" stroke="#3b6896" stroke-width="1.6"/><rect x="7" y="2.5" width="26" height="17.5" fill="#f4f4f4" stroke="#8a8a8a" stroke-width="1"/><rect x="10" y="6" width="20" height="1.9" fill="#555"/><rect x="10" y="10" width="20" height="1.9" fill="#555"/><rect x="10" y="14" width="20" height="1.9" fill="#555"/><rect x="8" y="26.5" width="24.5" height="14.5" fill="#e9e9e9" stroke="#7a7a7a" stroke-width="1"/><rect x="11" y="30" width="5.5" height="7.5" fill="#3b6896"/></svg><svg style="position:absolute;left:228px;top:148px;" width="48" height="48" viewBox="0 0 48 48"><path d="M1 3 L34 3 L44 13 L44 42 L1 42 Z" fill="#fff" stroke="#777" stroke-width="2" stroke-linejoin="miter"/><path d="M34 3 L34 13 L44 13" fill="#e8e8e8" stroke="#777" stroke-width="1.8"/><path d="M4.5 6.5 L32.5 6.5 M40.5 14.5 L40.5 38.5 L4.5 38.5 L4.5 6.5" fill="none" stroke="#c6d6f2" stroke-width="1.6"/><path d="M4 4 L23.5 4 L23.5 14 L13.5 14 L13.5 43.5 L4 43.5 Z" fill="#f6d84c" stroke="#dcb51c" stroke-width="1.3"/><rect x="5" y="17.0" width="4.5" height="1.6" fill="#9a7b10"/><rect x="5" y="21.2" width="4.5" height="1.6" fill="#9a7b10"/><rect x="5" y="25.4" width="4.5" height="1.6" fill="#9a7b10"/><rect x="5" y="29.6" width="4.5" height="1.6" fill="#9a7b10"/><rect x="5" y="33.8" width="4.5" height="1.6" fill="#9a7b10"/><rect x="5" y="38.0" width="4.5" height="1.6" fill="#9a7b10"/><path d="M6 6 L12 12" stroke="#dcb51c" stroke-width="1.2"/><rect x="24" y="24" width="22" height="22" rx="3.5" fill="#d8aa00"/><rect x="24" y="24" width="22" height="11.0" rx="3.5" fill="#e0b820" opacity="0.6"/><path d="M35.0 26 L35.0 44 M27.5 30.5 L42.5 39.5 M27.5 39.5 L42.5 30.5" stroke="#fff" stroke-width="2.2"/><circle cx="35.0" cy="35.0" r="4.6" fill="#fff"/><circle cx="35.0" cy="35.0" r="1.8" fill="#d8aa00"/></svg><svg style="position:absolute;left:292px;top:146px;" width="50" height="50" viewBox="0 0 50 50"><rect x="1" y="6" width="32" height="37" fill="#c8c8c8" stroke="#777" stroke-width="2"/><path d="M7.5 1 L37.5 1 L47.5 11 L47.5 37 L7.5 37 Z" fill="#fff" stroke="#777" stroke-width="2" stroke-linejoin="miter"/><path d="M37.5 1 L37.5 11 L47.5 11" fill="#e8e8e8" stroke="#777" stroke-width="1.8"/><path d="M11.0 4.5 L36.0 4.5 M44.0 12.5 L44.0 33.5 L11.0 33.5 L11.0 4.5" fill="none" stroke="#c6d6f2" stroke-width="1.6"/><rect x="26" y="24" width="22" height="22" rx="3.5" fill="#d8aa00"/><rect x="26" y="24" width="22" height="11.0" rx="3.5" fill="#e0b820" opacity="0.6"/><path d="M37.0 26 L37.0 44 M29.5 30.5 L44.5 39.5 M29.5 39.5 L44.5 30.5" stroke="#fff" stroke-width="2.2"/><circle cx="37.0" cy="35.0" r="4.6" fill="#fff"/><circle cx="37.0" cy="35.0" r="1.8" fill="#d8aa00"/></svg><svg style="position:absolute;left:360px;top:147px;" width="48" height="48" viewBox="0 0 48 48"><path d="M1 3 L34 3 L43 12 L43 42 L1 42 Z" fill="#fff" stroke="#777" stroke-width="2" stroke-linejoin="miter"/><path d="M34 3 L34 12 L43 12" fill="#e8e8e8" stroke="#777" stroke-width="1.8"/><path d="M4.5 6.5 L32.5 6.5 M39.5 13.5 L39.5 38.5 L4.5 38.5 L4.5 6.5" fill="none" stroke="#c6d6f2" stroke-width="1.6"/><g transform="translate(20,23) rotate(41.3)"><rect x="4" y="-4" width="29.3" height="8" rx="4" fill="#ebcf5a" stroke="#333" stroke-width="1.8"/><rect x="6" y="-4" width="6" height="8" fill="#333"/><circle cx="29.8" cy="0" r="1.6" fill="#333"/><path d="M-7.91 -2.8 L-1.5 -2.8 L-1.5 2.8 L-7.91 2.8 A8.5 8.5 0 1 0 -7.91 -2.8 Z" fill="#fff" stroke="#333" stroke-width="1.8" stroke-linejoin="round"/></g></svg><svg style="position:absolute;left:425px;top:151px;" width="47" height="38" viewBox="0 0 47 38"><path d="M1 3 L15 3 L15 8 L39 8 L39 14 L1 14 Z" fill="#fcd21c" stroke="#d2a80c" stroke-width="1.3"/><path d="M1 10 L1 36 L40 36 L45 12 L7 12 L1 36" fill="#fcd21c" stroke="#d2a80c" stroke-width="1.4" stroke-linejoin="round"/></svg><svg style="position:absolute;left:494px;top:148px;" width="40" height="42" viewBox="0 0 40 42"><rect x="1" y="1" width="38" height="40" rx="4.5" fill="#5b8fca" stroke="#3b6896" stroke-width="1.6"/><rect x="7" y="2.5" width="26" height="17.5" fill="#f4f4f4" stroke="#8a8a8a" stroke-width="1"/><rect x="10" y="6" width="20" height="1.9" fill="#555"/><rect x="10" y="10" width="20" height="1.9" fill="#555"/><rect x="10" y="14" width="20" height="1.9" fill="#555"/><rect x="8" y="26.5" width="24.5" height="14.5" fill="#e9e9e9" stroke="#7a7a7a" stroke-width="1"/><rect x="11" y="30" width="5.5" height="7.5" fill="#3b6896"/></svg><svg style="position:absolute;left:517px;top:174px;" width="22" height="22" viewBox="0 0 22 22"><rect x="1" y="1" width="20" height="20" rx="4" fill="#4b9a5b"/><rect x="1" y="1" width="20" height="9" rx="4" fill="#7ab585" opacity="0.7"/><path d="M6 16 L15.5 6.5" stroke="#fff" stroke-width="3.5" stroke-linecap="round"/></svg><svg style="position:absolute;left:577px;top:147px;" width="42" height="48" viewBox="0 0 42 48"><path d="M1 1 L23 1 L33 11 L33 43 L1 43 Z" fill="#fff" stroke="#777" stroke-width="2" stroke-linejoin="miter"/><path d="M23 1 L23 11 L33 11" fill="#e8e8e8" stroke="#777" stroke-width="1.8"/><rect x="18.5" y="24.5" width="22" height="22" rx="3.5" fill="#d8aa00"/><rect x="18.5" y="24.5" width="22" height="11.0" rx="3.5" fill="#e0b820" opacity="0.6"/><path d="M29.5 26.5 L29.5 44.5 M22.0 31.0 L37.0 40.0 M22.0 40.0 L37.0 31.0" stroke="#fff" stroke-width="2.2"/><circle cx="29.5" cy="35.5" r="4.6" fill="#fff"/><circle cx="29.5" cy="35.5" r="1.8" fill="#d8aa00"/></svg><svg style="position:absolute;left:654px;top:149px;" width="40" height="42" viewBox="0 0 40 42"><rect x="10" y="1" width="20" height="15" fill="#e6e6e6" stroke="#9a9a9a" stroke-width="1.6"/><rect x="1" y="9.5" width="38" height="21" rx="5" fill="#5b8fca" stroke="#3b6896" stroke-width="1.6"/><rect x="8" y="22" width="24" height="4" fill="#555"/><rect x="10" y="24" width="20" height="16" fill="#fff" stroke="#9a9a9a" stroke-width="1.6"/><rect x="13" y="29" width="14" height="1.6" fill="#999"/><rect x="13" y="33" width="14" height="1.6" fill="#999"/></svg><svg style="position:absolute;left:717px;top:146px;" width="48" height="48" viewBox="0 0 48 48"><path d="M1 1 L23 1 L31 9 L31 41 L1 41 Z" fill="#fff" stroke="#777" stroke-width="2" stroke-linejoin="miter"/><path d="M23 1 L23 9 L31 9" fill="#e8e8e8" stroke="#777" stroke-width="1.8"/><rect x="3" y="14" width="26" height="20" fill="url(#sky)"/><path d="M3 34 L3 28 Q14 18 29 25 L29 34 Z" fill="#c0a030"/><rect x="24" y="25" width="21" height="21" rx="3.5" fill="#2f5670"/><path d="M33 30 L29 30 L29 41 L33 41" fill="none" stroke="#fff" stroke-width="1.8"/><path d="M32 35.5 L40 35.5 M37 32 L40.5 35.5 L37 39" fill="none" stroke="#fff" stroke-width="2"/></svg><svg style="position:absolute;left:783px;top:146px;" width="48" height="48" viewBox="0 0 48 48"><path d="M1 1 L23 1 L31 9 L31 41 L1 41 Z" fill="#fff" stroke="#777" stroke-width="2" stroke-linejoin="miter"/><path d="M23 1 L23 9 L31 9" fill="#e8e8e8" stroke="#777" stroke-width="1.8"/><path d="M14 9 L14 27 M6 13 L22 23 M22 13 L6 23" stroke="#f29a10" stroke-width="3.2" stroke-linecap="round"/><rect x="24" y="25" width="21" height="21" rx="3.5" fill="#2f5670"/><path d="M33 30 L29 30 L29 41 L33 41" fill="none" stroke="#fff" stroke-width="1.8"/><path d="M32 35.5 L40 35.5 M37 32 L40.5 35.5 L37 39" fill="none" stroke="#fff" stroke-width="2"/></svg><svg style="position:absolute;left:849px;top:146px;" width="48" height="48" viewBox="0 0 48 48"><path d="M1 1 L23 1 L31 9 L31 41 L1 41 Z" fill="#fff" stroke="#777" stroke-width="2" stroke-linejoin="miter"/><path d="M23 1 L23 9 L31 9" fill="#e8e8e8" stroke="#777" stroke-width="1.8"/><path d="M5 32 Q14 20 16 9 Q17 4 14 9 Q13 16 20 26 Q26 31 28 26 Q22 23 10 27 Q5 30 5 32 Z" fill="none" stroke="#e02020" stroke-width="2"/><rect x="24" y="25" width="21" height="21" rx="3.5" fill="#2f5670"/><path d="M33 30 L29 30 L29 41 L33 41" fill="none" stroke="#fff" stroke-width="1.8"/><path d="M32 35.5 L40 35.5 M37 32 L40.5 35.5 L37 39" fill="none" stroke="#fff" stroke-width="2"/></svg><svg style="position:absolute;left:920px;top:152px;" width="37" height="38" viewBox="0 0 37 38"><path d="M2 14 L16 2 L16 9 Q34 8 34 24 Q34 36 22 36 Q30 30 27 23 Q24 17 16 19 L16 26 Z" fill="#ef7d23" stroke="#d8621a" stroke-width="1.2" stroke-linejoin="round"/></svg><svg style="position:absolute;left:985px;top:152px;" width="37" height="38" viewBox="0 0 37 38"><path d="M35 14 L21 2 L21 9 Q3 8 3 24 Q3 36 15 36 Q7 30 10 23 Q13 17 21 19 L21 26 Z" fill="#dcdcdc" stroke="#c4c4c4" stroke-width="1.2" stroke-linejoin="round"/></svg><svg style="position:absolute;left:1078px;top:152px;" width="48" height="37" viewBox="0 0 48 37"><rect x="1.5" y="1.5" width="45" height="33" rx="7" fill="#e4e4e4" stroke="#c6c6c6" stroke-width="2"/><path d="M7 9 Q14 6 20 10 L18 16 L12 15 Z M24 8 Q32 6 40 9 L38 14 L30 18 L26 13 Z M12 18 L18 20 L17 29 L13 27 Z M27 20 L33 21 L31 28 Z" fill="#b8b8b8"/></svg><svg style="position:absolute;left:1148px;top:149px;" width="40" height="42" viewBox="0 0 40 42"><rect x="1" y="1" width="4.5" height="40" rx="1" fill="#d4d4d4" stroke="#c6c6c6"/><path d="M8 21 L24 5 L24 14 L38 14 L38 28 L24 28 L24 37 Z" fill="#d9d9d9" stroke="#c8c8c8" stroke-width="1.3" stroke-linejoin="round"/></svg><svg style="position:absolute;left:1217px;top:151px;" width="35" height="38" viewBox="0 0 35 38"><path d="M1 19 L17 2 L17 12 L33 12 L33 26 L17 26 L17 36 Z" fill="#d9d9d9" stroke="#c8c8c8" stroke-width="1.3" stroke-linejoin="round"/></svg><div style="position:absolute;left:1269px;top:140.5px;width:166px;height:58.5px;background:linear-gradient(#fafafa,#eeeeee);border:2px solid #aaaaaa;border-radius:5px;box-sizing:border-box"></div><div style="position:absolute;left:1271px;top:142.5px;width:124px;height:54.5px;background:#fff;border-right:1.5px solid #9a9a9a;box-sizing:border-box;border-radius:3px 0 0 3px"></div><div style="position:absolute;left:1277px;top:157.20px;font-size:28px;line-height:1;font-weight:400;color:#aaa;white-space:nowrap;">1</div><svg style="position:absolute;left:1405px;top:165px;" width="18" height="10" viewBox="0 0 18 10"><path d="M1 1 L17 1 L9 9 Z" fill="#b0b0b0"/></svg><svg style="position:absolute;left:1453px;top:151px;" width="35" height="38" viewBox="0 0 35 38"><path d="M34 19 L18 2 L18 12 L2 12 L2 26 L18 26 L18 36 Z" fill="#d9d9d9" stroke="#c8c8c8" stroke-width="1.3" stroke-linejoin="round"/></svg><svg style="position:absolute;left:1516px;top:149px;" width="40" height="42" viewBox="0 0 40 42"><rect x="34.5" y="1" width="4.5" height="40" rx="1" fill="#d4d4d4" stroke="#c6c6c6"/><path d="M32 21 L16 5 L16 14 L2 14 L2 28 L16 28 L16 37 Z" fill="#d9d9d9" stroke="#c8c8c8" stroke-width="1.3" stroke-linejoin="round"/></svg><svg style="position:absolute;left:1583px;top:149px;" width="40" height="42" viewBox="0 0 40 42"><rect x="10" y="1" width="20" height="15" fill="#f0f0f0" stroke="#d0d0d0" stroke-width="1.6"/><rect x="1" y="9.5" width="38" height="21" rx="5" fill="#d8d8d8" stroke="#c8c8c8" stroke-width="1.6"/><rect x="10" y="24" width="20" height="16" fill="#f6f6f6" stroke="#d0d0d0" stroke-width="1.6"/><rect x="13" y="29" width="14" height="1.6" fill="#d0d0d0"/><rect x="13" y="33" width="14" height="1.6" fill="#d0d0d0"/></svg><svg style="position:absolute;left:1645px;top:146px;" width="48" height="48" viewBox="0 0 48 48"><path d="M1 1 L23 1 L31 9 L31 41 L1 41 Z" fill="#f4f4f4" stroke="#d0d0d0" stroke-width="2" stroke-linejoin="miter"/><path d="M23 1 L23 9 L31 9" fill="#e8e8e8" stroke="#d0d0d0" stroke-width="1.8"/><rect x="3" y="14" width="26" height="20" fill="#dcdcdc"/><rect x="24" y="25" width="21" height="21" rx="3.5" fill="#cfcfcf"/><path d="M33 30 L29 30 L29 41 L33 41" fill="none" stroke="#fff" stroke-width="1.8"/><path d="M32 35.5 L40 35.5 M37 32 L40.5 35.5 L37 39" fill="none" stroke="#fff" stroke-width="2"/></svg><svg style="position:absolute;left:1704px;top:166px;" width="18" height="10" viewBox="0 0 18 10"><path d="M1 1 L17 1 L9 9 Z" fill="#444"/></svg><svg style="position:absolute;left:1735px;top:148px;" width="48" height="46" viewBox="0 0 48 46"><rect x="1.5" y="1.5" width="38" height="30" rx="6" fill="#8fb4e0" stroke="#5f88bd" stroke-width="2"/><path d="M14 2 L14 31 M1 12 L40 12 M1 22 L40 22 M27 2 L27 31" stroke="#ffffff" stroke-width="1.5" opacity="0.8"/><path d="M5 8 Q10 5 15 8 L13 14 Z M22 6 Q30 4 36 8 L33 15 L26 16 Z M8 17 L13 19 L12 27 Z" fill="#2c5c96" opacity="0.7"/><g transform="translate(21,13) rotate(52.3)"><rect x="4" y="-4" width="35.2" height="8" rx="4" fill="#ebcf5a" stroke="#333" stroke-width="1.8"/><rect x="6" y="-4" width="6" height="8" fill="#333"/><circle cx="35.7" cy="0" r="1.6" fill="#333"/><path d="M-7.91 -2.8 L-1.5 -2.8 L-1.5 2.8 L-7.91 2.8 A8.5 8.5 0 1 0 -7.91 -2.8 Z" fill="#fff" stroke="#333" stroke-width="1.8" stroke-linejoin="round"/></g></svg><svg width="0" height="0" style="position:absolute"><defs><linearGradient id="scrollg" x1="0" x2="1"><stop offset="0" stop-color="#c8c8c8"/><stop offset="1" stop-color="#f2f2f2"/></linearGradient><linearGradient id="sky2" x1="0" y1="0" x2="0" y2="1"><stop offset="0" stop-color="#1a9ef0"/><stop offset="1" stop-color="#a8dcf8"/></linearGradient><linearGradient id="sand" x1="0" y1="0" x2="0" y2="1"><stop offset="0" stop-color="#e8cf78"/><stop offset="1" stop-color="#a89530"/></linearGradient></defs></svg><svg style="position:absolute;left:145px;top:225px;" width="48" height="48" viewBox="0 0 48 48"><path d="M1.8 43.5 L16 29.5" stroke="#3b3b3b" stroke-width="9" stroke-linecap="butt"/><path d="M3 42.3 L13 32.5" stroke="#f0cc2e" stroke-width="5"/><circle cx="16" cy="29.5" r="3" fill="#111"/><circle cx="30" cy="18" r="15.5" fill="url(#lens)" stroke="#6a6a6a" stroke-width="2.2"/><path d="M30 8.5 L30 27.5 M20.5 18 L39.5 18" stroke="#3f6c98" stroke-width="6.2" stroke-linecap="round"/><path d="M30 8.5 L30 27.5 M20.5 18 L39.5 18" stroke="#5f98d2" stroke-width="3.6" stroke-linecap="round"/></svg><svg style="position:absolute;left:211px;top:225px;" width="48" height="48" viewBox="0 0 48 48"><path d="M1.8 43.5 L16 29.5" stroke="#3b3b3b" stroke-width="9" stroke-linecap="butt"/><path d="M3 42.3 L13 32.5" stroke="#f0cc2e" stroke-width="5"/><circle cx="16" cy="29.5" r="3" fill="#111"/><circle cx="30" cy="18" r="15.5" fill="url(#lens)" stroke="#6a6a6a" stroke-width="2.2"/><path d="M20.5 18 L39.5 18" stroke="#3f6c98" stroke-width="6.2" stroke-linecap="round"/><path d="M20.5 18 L39.5 18" stroke="#5f98d2" stroke-width="3.6" stroke-linecap="round"/></svg><svg style="position:absolute;left:277px;top:225px;" width="48" height="48" viewBox="0 0 48 48"><rect x="4" y="2.5" width="24" height="26" fill="#ececec" stroke="#9a9a9a" stroke-width="1.8"/><path d="M1.8 43.5 L16 29.5" stroke="#3b3b3b" stroke-width="9" stroke-linecap="butt"/><path d="M3 42.3 L13 32.5" stroke="#f0cc2e" stroke-width="5"/><circle cx="16" cy="29.5" r="3" fill="#111"/><circle cx="30" cy="18" r="15.5" fill="url(#lens)" stroke="#6a6a6a" stroke-width="2.2"/><text x="29" y="24.5" font-size="17" font-weight="700" text-anchor="middle" fill="#222" font-family="Liberation Sans">1:1</text></svg><svg style="position:absolute;left:345px;top:224px;" width="48" height="48" viewBox="0 0 48 48"><path d="M6 0 L19 0 L15 4 L21 10 L16 15 L10 9 L6 13 Z" fill="#5b93cf" stroke="#3d6a98" stroke-width="1.2"/><path d="M47 0 L34 0 L38 4 L32 10 L37 15 L43 9 L47 13 Z" fill="#5b93cf" stroke="#3d6a98" stroke-width="1.2"/><path d="M47 41 L34 41 L38 37 L32 31 L37 26 L43 32 L47 28 Z" fill="#5b93cf" stroke="#3d6a98" stroke-width="1.2"/><path d="M1 45.5 L14 32.5" stroke="#3b3b3b" stroke-width="9"/><path d="M2.2 44.3 L11 35.5" stroke="#f0cc2e" stroke-width="5"/><circle cx="14" cy="32.5" r="3" fill="#111"/><circle cx="27" cy="20" r="13.5" fill="url(#lens)" stroke="#6a6a6a" stroke-width="2.2"/></svg><svg style="position:absolute;left:413px;top:225px;" width="43" height="45" viewBox="0 0 43 45"><path d="M4 22 Q4 5 22 4 Q32 4 37 10 L41 6 L41 21 L26 21 L31 16 Q27 11 21 11 Q11 12 10 20 Z" fill="url(#blueg)" stroke="#2a64a8" stroke-width="1"/><path d="M38 22 Q38 39 20 40 Q10 40 5 34 L1 38 L1 23 L16 23 L11 28 Q15 33 21 33 Q31 32 32 24 Z" fill="url(#blueg)" stroke="#2a64a8" stroke-width="1"/></svg><svg style="position:absolute;left:511px;top:230px;" width="44" height="42" viewBox="0 0 44 42"><rect x="1" y="1" width="25" height="22.5" fill="#c3e4f7" stroke="#4f7e98" stroke-width="1.6"/><path d="M17.5 21 L17.5 12 Q17.5 2.5 27.5 2.5 Q37.5 2.5 37.5 12 L37.5 21" fill="none" stroke="#999" stroke-width="4"/><path d="M17.5 21 L17.5 12 Q17.5 2.5 27.5 2.5 Q37.5 2.5 37.5 12 L37.5 21" fill="none" stroke="#f4f4f4" stroke-width="1.6"/><rect x="13" y="20" width="28.5" height="19.5" rx="3" fill="#f5d800" stroke="#cfa800" stroke-width="1.5"/></svg><svg style="position:absolute;left:578px;top:230px;" width="44" height="42" viewBox="0 0 44 42"><rect x="1" y="7" width="15" height="22.5" fill="#c3e4f7" stroke="#4f7e98" stroke-width="1.6"/><circle cx="25" cy="13.5" r="12" fill="#c3e4f7" stroke="#4f7e98" stroke-width="1.6"/><path d="M33 21 L33 14 Q33 5 25 5 Q18 5 16.5 11" fill="none" stroke="#999" stroke-width="4"/><path d="M33 21 L33 14 Q33 5 25 5 Q18 5 16.5 11" fill="none" stroke="#f4f4f4" stroke-width="1.6"/><rect x="12" y="20" width="29" height="19" rx="3" fill="#f5d800" stroke="#cfa800" stroke-width="1.5"/></svg><svg style="position:absolute;left:645px;top:229px;" width="42" height="42" viewBox="0 0 42 42"><rect x="3" y="15" width="25" height="18.5" fill="#c3e4f7" stroke="#4f7e98" stroke-width="1.6"/><circle cx="24" cy="13" r="12" fill="#c3e4f7" stroke="#4f7e98" stroke-width="1.6"/><rect x="0" y="0" width="4.2" height="4.2" fill="#000"/><rect x="36" y="0" width="4.2" height="4.2" fill="#000"/><rect x="0" y="36" width="4.2" height="4.2" fill="#000"/><rect x="36" y="36" width="4.2" height="4.2" fill="#000"/></svg><svg style="position:absolute;left:710px;top:229px;" width="42" height="42" viewBox="0 0 42 42"><rect x="5" y="15.5" width="24.5" height="17.5" fill="#eef09a" stroke="#999" stroke-width="1.6"/><circle cx="26" cy="13" r="12" fill="#c3e4f7" stroke="#4f7e98" stroke-width="1.6"/><rect x="10" y="0" width="4.2" height="4.2" fill="#000"/><rect x="36" y="0" width="4.2" height="4.2" fill="#000"/><rect x="0" y="12" width="4.2" height="4.2" fill="#000"/><rect x="10" y="25" width="4.2" height="4.2" fill="#000"/><rect x="36" y="25" width="4.2" height="4.2" fill="#000"/><rect x="0" y="36" width="4.2" height="4.2" fill="#000"/><rect x="30" y="36" width="4.2" height="4.2" fill="#000"/></svg><svg style="position:absolute;left:776px;top:228px;" width="50" height="48" viewBox="0 0 50 48"><rect x="1" y="16" width="30" height="23" fill="#c3e4f7" stroke="#7aa2b8" stroke-width="1.6"/><rect x="8.5" y="1" width="30" height="22" fill="#f2f08a" stroke="#909090" stroke-width="1.6"/><path d="M37 39 L48 39 L42.5 45 Z" fill="#444"/></svg><svg style="position:absolute;left:842px;top:226px;" width="50" height="50" viewBox="0 0 50 50"><rect x="1" y="0" width="2.2" height="44" fill="#222"/><rect x="2.5" y="2.5" width="19.5" height="16" fill="#b6f4b8" stroke="#6ab57a" stroke-width="1.6"/><rect x="2.5" y="22" width="27.5" height="19" fill="#c3e4f7" stroke="#7aa2b8" stroke-width="1.6"/><path d="M36 40.5 L47 40.5 L41.5 46.5 Z" fill="#444"/></svg><svg style="position:absolute;left:906px;top:226px;" width="50" height="50" viewBox="0 0 50 50"><rect x="1" y="2" width="1.8" height="16" fill="#222"/><rect x="19" y="2" width="1.8" height="16" fill="#222"/><rect x="37" y="2" width="1.8" height="16" fill="#222"/><rect x="1.2" y="12.5" width="8.5" height="20.5" fill="#b6f4b8" stroke="#6ab57a" stroke-width="1.6"/><rect x="19" y="12.5" width="13" height="28.5" fill="#c3e4f7" stroke="#7aa2b8" stroke-width="1.6"/><rect x="37" y="12.5" width="8.5" height="16.5" fill="#b6f4b8" stroke="#6ab57a" stroke-width="1.6"/><path d="M38.5 41 L49.5 41 L44.0 47 Z" fill="#444"/></svg><svg style="position:absolute;left:973px;top:225px;" width="50" height="50" viewBox="0 0 50 50"><rect x="1" y="3" width="22.5" height="38.5" fill="#c3e4f7" stroke="#7aa2b8" stroke-width="1.6"/><rect x="29" y="3" width="11" height="38.5" fill="#f2f08a" stroke="#909090" stroke-width="1.6"/><path d="M1 22 L10 22 M6 18 L10 22 L6 26 M23 22 L14 22 M18 18 L14 22 L18 26" fill="none" stroke="#333" stroke-width="1.8"/><path d="M37 41.5 L48 41.5 L42.5 47.5 Z" fill="#444"/></svg><svg style="position:absolute;left:134px;top:320px;" width="40" height="47" viewBox="0 0 40 47"><path d="M14 44 Q8 36 3 28 Q1 24 4 23 Q7 22 10 27 L12 30 L12 8 Q12 4 15 4 Q18 4 18 8 L18 20 L18 3 Q18 0 21 0 Q24 0 24 3 L24 20 L24 5 Q24 2 27 2 Q30 2 30 5 L30 21 L30 9 Q30 6 33 6 Q36 6 36 9 L36 30 Q36 38 32 44 Z" fill="#fff" stroke="#111" stroke-width="2.4" stroke-linejoin="round"/><path d="M18 20 L18 14 M24 20 L24 14 M30 21 L30 15" stroke="#111" stroke-width="1.5"/></svg><svg style="position:absolute;left:128px;top:386px;" width="48" height="46" viewBox="0 0 48 46"><rect x="1.5" y="1.5" width="20" height="26" fill="none" stroke="#222" stroke-width="2.4" stroke-dasharray="4 3"/><path d="M2 42 L12 32" stroke="#3b3b3b" stroke-width="7.5"/><path d="M2.5 41.5 L11.5 32.5" stroke="#f0cc2e" stroke-width="4.2"/><circle cx="14" cy="30" r="2.6" fill="#111"/><circle cx="29" cy="15" r="16" fill="url(#lens)" stroke="#6a6a6a" stroke-width="2.2"/><path d="M37 8 L37 22 M20 28 L36 28" stroke="#bbb" stroke-width="2.4" stroke-dasharray="4 3"/></svg><div style="position:absolute;left:120.5px;top:442px;width:63px;height:61.5px;background:linear-gradient(#dedede,#d2d2d2);border:1.8px solid #b4b4b4;border-radius:6px;box-sizing:border-box"></div><svg style="position:absolute;left:133px;top:452px;" width="38" height="44" viewBox="0 0 38 44"><rect x="1" y="1" width="34" height="34" fill="none" stroke="#777" stroke-width="1.8" stroke-dasharray="2 4"/><rect x="0" y="0" width="6" height="6" fill="#fff" stroke="#777" stroke-width="1.6"/><rect x="29" y="0" width="6" height="6" fill="#fff" stroke="#777" stroke-width="1.6"/><rect x="0" y="29" width="6" height="6" fill="#fff" stroke="#777" stroke-width="1.6"/><rect x="29" y="29" width="6" height="6" fill="#fff" stroke="#777" stroke-width="1.6"/><path d="M6 1 L6 36 L16 27 L24 42 L31 39 L23 24 L35 24 Z" fill="#fff" stroke="#000" stroke-width="2.4" stroke-linejoin="round"/></svg><svg style="position:absolute;left:131px;top:513px;" width="42" height="44" viewBox="0 0 42 44"><rect x="7" y="3" width="33" height="37" fill="url(#scrollg)" stroke="#8a8a8a" stroke-width="1.5"/><path d="M7 3 Q1 1 1 7 L1 39 Q1 43 7 40 L12 40 Q9 35 7 36 Z" fill="#e2e2e2" stroke="#8a8a8a" stroke-width="1.5"/><path d="M22 4 L12 14 L18 14 L18 20 L26 20 L26 14 L32 14 Z" fill="#5b93cf" stroke="#2f5f96" stroke-width="1.2"/><path d="M8 28 L14 22 L14 26 L19 26 L19 31 L14 31 L14 35 Z" fill="#5b93cf" stroke="#2f5f96" stroke-width="1.2"/><rect x="30" y="24" width="8" height="7" fill="#5b93cf" stroke="#2f5f96" stroke-width="1.2"/><rect x="19" y="36" width="7" height="6" fill="#5b93cf" stroke="#2f5f96" stroke-width="1.2"/></svg><svg style="position:absolute;left:129px;top:576px;" width="46" height="46" viewBox="0 0 46 46"><path d="M15 5.5 L4.5 40 M15 5.5 L39 17" stroke="#111" stroke-width="2.2"/><path d="M4.5 40 L26 32" stroke="#111" stroke-width="2" stroke-dasharray="2 2.5"/><path d="M20 38 L38 24" stroke="#c08000" stroke-width="5"/><path d="M21 36 L37 24" stroke="#f2d000" stroke-width="3"/><path d="M24 27 L42 41" stroke="#c89000" stroke-width="5"/><path d="M19 29 Q24 19 33 20 L36 24 L24 31 Z" fill="#c8c8c8" stroke="#777" stroke-width="1.4"/><circle cx="15" cy="5.5" r="4.6" fill="#0a78e8"/><circle cx="39.5" cy="17" r="4.6" fill="#0a78e8"/><circle cx="4.8" cy="40" r="4.6" fill="#0a78e8"/></svg><svg style="position:absolute;left:128.5px;top:647.5px;" width="48" height="42" viewBox="0 0 48 42"><path d="M10 3 L42 1 L43 30 L34 28 L1 25 Z" fill="#e0e0e0" stroke="#bbb" stroke-width="1.4"/><path d="M10 10 Q20 8 30 12 Q36 8 42 10 M6 17 Q18 14 28 20 Q34 16 43 18 M18 3 Q16 14 20 26 M31 2 Q28 14 32 28" fill="none" stroke="#c0c0c0" stroke-width="1.2"/><rect x="29.5" y="22.5" width="18" height="18" rx="3.5" fill="#4c9a5d"/><rect x="29.5" y="22.5" width="18" height="8.1" rx="3.5" fill="#78b585" opacity="0.55"/><path d="M38.5 26.0 L38.5 37.0 M33.0 31.5 L44.0 31.5" stroke="#fff" stroke-width="4"/></svg><div style="position:absolute;left:120px;top:698px;width:64px;height:61.5px;background:linear-gradient(#fbfbfb,#efefef);border:1.8px solid #b8b8b8;border-radius:7px;box-sizing:border-box"></div><svg style="position:absolute;left:131px;top:706px;" width="46" height="46" viewBox="0 0 46 46"><rect x="7" y="3" width="33" height="37" fill="url(#scrollg)" stroke="#8a8a8a" stroke-width="1.5"/><path d="M7 3 Q1 1 1 7 L1 39 Q1 43 7 40 L12 40 Q9 35 7 36 Z" fill="#e2e2e2" stroke="#8a8a8a" stroke-width="1.5"/><rect x="26" y="27" width="18" height="18" rx="3.5" fill="#4c9a5d"/><rect x="26" y="27" width="18" height="8.1" rx="3.5" fill="#78b585" opacity="0.55"/><path d="M35.0 30.5 L35.0 41.5 M29.5 36.0 L40.5 36.0" stroke="#fff" stroke-width="4"/></svg><svg style="position:absolute;left:131px;top:778px;" width="46" height="40" viewBox="0 0 46 40"><rect x="1" y="1" width="39" height="27" fill="url(#sky2)" stroke="#888" stroke-width="1.6"/><path d="M1.8 28 L1.8 15 Q14 8 20 6 Q30 12 39.2 20 L39.2 28 Z" fill="url(#sand)"/><rect x="26" y="20" width="18" height="18" rx="3.5" fill="#4c9a5d"/><rect x="26" y="20" width="18" height="8.1" rx="3.5" fill="#78b585" opacity="0.55"/><path d="M35.0 23.5 L35.0 34.5 M29.5 29.0 L40.5 29.0" stroke="#fff" stroke-width="4"/></svg><svg style="position:absolute;left:131px;top:842px;" width="46" height="40" viewBox="0 0 46 40"><rect x="1" y="1" width="39" height="27" fill="#f0f0f0" stroke="#888" stroke-width="1.6"/><text x="20" y="23" font-family="Liberation Serif" font-size="24" text-anchor="middle" fill="#222">T</text><rect x="26" y="20" width="18" height="18" rx="3.5" fill="#4c9a5d"/><rect x="26" y="20" width="18" height="8.1" rx="3.5" fill="#78b585" opacity="0.55"/><path d="M35.0 23.5 L35.0 34.5 M29.5 29.0 L40.5 29.0" stroke="#fff" stroke-width="4"/></svg><svg style="position:absolute;left:133px;top:902px;" width="46" height="44" viewBox="0 0 46 44"><rect x="2" y="1" width="8" height="8" fill="#f5c400" stroke="#b08000"/><rect x="2" y="13" width="8" height="8" fill="#e02000" stroke="#a01000"/><rect x="2" y="25" width="8" height="8" fill="#10a040" stroke="#0a6a2a"/><rect x="13" y="4" width="12" height="2.5" fill="#999"/><rect x="13" y="16" width="18" height="2.5" fill="#999"/><rect x="13" y="28" width="8" height="2.5" fill="#999"/><rect x="25" y="24" width="18" height="18" rx="3.5" fill="#4c9a5d"/><rect x="25" y="24" width="18" height="8.1" rx="3.5" fill="#78b585" opacity="0.55"/><path d="M34.0 27.5 L34.0 38.5 M28.5 33.0 L39.5 33.0" stroke="#fff" stroke-width="4"/></svg><svg style="position:absolute;left:131px;top:976px;" width="46" height="34" viewBox="0 0 46 34"><rect x="1" y="1" width="40" height="9" fill="#fff" stroke="#333" stroke-width="1.6"/><rect x="1" y="1" width="10" height="9" fill="#333"/><rect x="21" y="1" width="10" height="9" fill="#333"/><rect x="26" y="13" width="18" height="18" rx="3.5" fill="#4c9a5d"/><rect x="26" y="13" width="18" height="8.1" rx="3.5" fill="#78b585" opacity="0.55"/><path d="M35.0 16.5 L35.0 27.5 M29.5 22.0 L40.5 22.0" stroke="#fff" stroke-width="4"/></svg><svg style="position:absolute;left:135px;top:1027px;" width="46" height="46" viewBox="0 0 46 46"><path d="M17 1 L3 38 L17 28 L31 38 Z" fill="#4a7fb5" stroke="#2d5a88" stroke-width="1.5"/><text x="17" y="28" font-size="13" font-weight="700" text-anchor="middle" fill="#fff" font-family="Liberation Sans">N</text><rect x="25" y="25" width="18" height="18" rx="3.5" fill="#4c9a5d"/><rect x="25" y="25" width="18" height="8.1" rx="3.5" fill="#78b585" opacity="0.55"/><path d="M34.0 28.5 L34.0 39.5 M28.5 34.0 L39.5 34.0" stroke="#fff" stroke-width="4"/></svg><svg style="position:absolute;left:132px;top:1088px;" width="48" height="48" viewBox="0 0 48 48"><rect x="1" y="17" width="28" height="21" fill="#c3e4f7" stroke="#7aa2b8" stroke-width="1.5"/><circle cx="30" cy="22" r="10" fill="#f0a0a0" stroke="#c07070" stroke-width="1.5"/><path d="M19 1 L6 24 L32 24 Z" fill="#a8e6a0" stroke="#5aa85a" stroke-width="1.5"/><rect x="26" y="27" width="18" height="18" rx="3.5" fill="#4c9a5d"/><rect x="26" y="27" width="18" height="8.1" rx="3.5" fill="#78b585" opacity="0.55"/><path d="M35.0 30.5 L35.0 41.5 M29.5 36.0 L40.5 36.0" stroke="#fff" stroke-width="4"/><path d="M36 42 L46 42 L41.0 47 Z" fill="#333"/></svg><svg style="position:absolute;left:133px;top:1155px;" width="46" height="46" viewBox="0 0 46 46"><path d="M21 1 L26.5 14 L41 14.5 L30 24 L34 38.5 L21 30.5 L8 38.5 L12 24 L1 14.5 L15.5 14 Z" fill="#f8d070" stroke="#d88a40" stroke-width="1.6" stroke-linejoin="round"/><rect x="25" y="26" width="18" height="18" rx="3.5" fill="#4c9a5d"/><rect x="25" y="26" width="18" height="8.1" rx="3.5" fill="#78b585" opacity="0.55"/><path d="M34.0 29.5 L34.0 40.5 M28.5 35.0 L39.5 35.0" stroke="#fff" stroke-width="4"/></svg><svg style="position:absolute;left:131px;top:1219px;" width="46" height="46" viewBox="0 0 46 46"><rect x="1" y="35" width="6" height="6" fill="#333"/><path d="M4 38 L35 7" stroke="#333" stroke-width="2.2"/><path d="M26 4 L38 1 L35 13 Z" fill="#fff" stroke="#333" stroke-width="2"/><rect x="26" y="26" width="18" height="18" rx="3.5" fill="#4c9a5d"/><rect x="26" y="26" width="18" height="8.1" rx="3.5" fill="#78b585" opacity="0.55"/><path d="M35.0 29.5 L35.0 40.5 M29.5 35.0 L40.5 35.0" stroke="#fff" stroke-width="4"/></svg><svg style="position:absolute;left:132px;top:1282px;" width="48" height="48" viewBox="0 0 48 48"><path d="M10 4 L4 38 M10 4 L33 14" stroke="#111" stroke-width="2.2"/><path d="M4 38 L33 14" stroke="#111" stroke-width="2" stroke-dasharray="2 2.5"/><circle cx="10" cy="4.5" r="4.6" fill="#0a78e8"/><circle cx="33" cy="14" r="4.6" fill="#0a78e8"/><circle cx="4.5" cy="38" r="4.6" fill="#0a78e8"/><rect x="25" y="27" width="18" height="18" rx="3.5" fill="#4c9a5d"/><rect x="25" y="27" width="18" height="8.1" rx="3.5" fill="#78b585" opacity="0.55"/><path d="M34.0 30.5 L34.0 41.5 M28.5 36.0 L39.5 36.0" stroke="#fff" stroke-width="4"/><path d="M35 41 L45 41 L40.0 46 Z" fill="#333"/></svg><svg style="position:absolute;left:131px;top:1347px;" width="46" height="46" viewBox="0 0 46 46"><rect x="1" y="1" width="39" height="32" fill="#f4f4f4" stroke="#888" stroke-width="1.6"/><text x="20" y="17" font-size="14" font-weight="700" text-anchor="middle" fill="#222" font-family="Liberation Mono">&lt;/&gt;</text><rect x="5" y="13" width="8" height="2.2" fill="#4a80c0"/><rect x="5" y="19" width="18" height="2.2" fill="#4a80c0"/><rect x="5" y="24" width="14" height="2.2" fill="#4a80c0"/><rect x="5" y="29" width="10" height="2.2" fill="#4a80c0"/><rect x="25" y="25" width="18" height="18" rx="3.5" fill="#4c9a5d"/><rect x="25" y="25" width="18" height="8.1" rx="3.5" fill="#78b585" opacity="0.55"/><path d="M34.0 28.5 L34.0 39.5 M28.5 34.0 L39.5 34.0" stroke="#fff" stroke-width="4"/></svg><svg style="position:absolute;left:131px;top:1412px;" width="46" height="46" viewBox="0 0 46 46"><rect x="1" y="1" width="39" height="36" fill="#eaf2fa" stroke="#6a9ac8" stroke-width="1.6"/><rect x="1" y="1" width="39" height="6" fill="#8fb8e0"/><rect x="5" y="11" width="12" height="2.2" fill="#6a9ac8"/><rect x="21" y="11" width="14" height="2.2" fill="#6a9ac8"/><rect x="5" y="17" width="12" height="2.2" fill="#6a9ac8"/><rect x="21" y="17" width="14" height="2.2" fill="#6a9ac8"/><rect x="5" y="23" width="12" height="2.2" fill="#6a9ac8"/><rect x="21" y="23" width="14" height="2.2" fill="#6a9ac8"/><rect x="5" y="29" width="12" height="2.2" fill="#6a9ac8"/><rect x="21" y="29" width="14" height="2.2" fill="#6a9ac8"/><rect x="25" y="25" width="18" height="18" rx="3.5" fill="#4c9a5d"/><rect x="25" y="25" width="18" height="8.1" rx="3.5" fill="#78b585" opacity="0.55"/><path d="M34.0 28.5 L34.0 39.5 M28.5 34.0 L39.5 34.0" stroke="#fff" stroke-width="4"/></svg><svg style="position:absolute;left:131px;top:1474px;" width="46" height="46" viewBox="0 0 46 46"><rect x="1" y="4" width="39" height="33" fill="#eaf2fa" stroke="#6a9ac8" stroke-width="1.6"/><rect x="1" y="4" width="39" height="6" fill="#8fb8e0"/><rect x="5" y="14" width="12" height="2.2" fill="#6a9ac8"/><rect x="5" y="20" width="12" height="2.2" fill="#6a9ac8"/><rect x="5" y="26" width="12" height="2.2" fill="#6a9ac8"/><path d="M22 30 L38 4" stroke="#7a5a10" stroke-width="6"/><path d="M22.5 29 L37.5 5" stroke="#f0b040" stroke-width="3.5"/><path d="M19 36 L22 29 L25 31 Z" fill="#333"/><rect x="25" y="25" width="18" height="18" rx="3.5" fill="#4c9a5d"/><rect x="25" y="25" width="18" height="8.1" rx="3.5" fill="#78b585" opacity="0.55"/><path d="M34.0 28.5 L34.0 39.5 M28.5 34.0 L39.5 34.0" stroke="#fff" stroke-width="4"/></svg><svg style="position:absolute;left:2805px;top:1095px;" width="30" height="31" viewBox="0 0 43 45"><path d="M4 22 Q4 5 22 4 Q32 4 37 10 L41 6 L41 21 L26 21 L31 16 Q27 11 21 11 Q11 12 10 20 Z" fill="url(#blueg)" stroke="#2a64a8" stroke-width="1"/><path d="M38 22 Q38 39 20 40 Q10 40 5 34 L1 38 L1 23 L16 23 L11 28 Q15 33 21 33 Q31 32 32 24 Z" fill="url(#blueg)" stroke="#2a64a8" stroke-width="1"/></svg><svg style="position:absolute;left:2866px;top:1091px;" width="36" height="38" viewBox="0 0 36 38"><rect x="7" y="7" width="21" height="23" fill="url(#scrollg)" stroke="#8a8a8a" stroke-width="1.5"/><path d="M7 7 Q1 5 1 11 L1 29 Q1 33 7 30 L12 30 Q9 25 7 26 Z" fill="#e2e2e2" stroke="#8a8a8a" stroke-width="1.5"/><path d="M6 23 L28 30 M28 10 L6 30" stroke="#333" stroke-width="1.5"/><path d="M13 1 Q4 3 9 10 L9 17 L4 17 L13 26 L22 17 L17 17 L17 9 Q17 4 13 4" fill="#f08020"/></svg><svg style="position:absolute;left:2918px;top:1091px;" width="36" height="38" viewBox="0 0 36 38"><rect x="7" y="7" width="21" height="23" fill="url(#scrollg)" stroke="#8a8a8a" stroke-width="1.5"/><path d="M7 7 Q1 5 1 11 L1 29 Q1 33 7 30 L12 30 Q9 25 7 26 Z" fill="#e2e2e2" stroke="#8a8a8a" stroke-width="1.5"/><path d="M6 23 L28 30 M28 10 L6 30" stroke="#333" stroke-width="1.5"/><path d="M8 24 Q8 10 22 9 L22 4 L31 11 L22 18 L22 14 Q13 14 12 24 Z" fill="#f08020"/></svg><svg style="position:absolute;left:2981px;top:1091px;" width="36" height="38" viewBox="0 0 36 38"><rect x="7" y="7" width="21" height="23" fill="url(#scrollg)" stroke="#8a8a8a" stroke-width="1.5"/><path d="M7 7 Q1 5 1 11 L1 29 Q1 33 7 30 L12 30 Q9 25 7 26 Z" fill="#e2e2e2" stroke="#8a8a8a" stroke-width="1.5"/><text x="18" y="31" font-size="10" fill="#444" text-anchor="middle" font-family="Liberation Sans">1:23</text><path d="M13 1 Q4 3 9 10 L9 17 L4 17 L13 26 L22 17 L17 17 L17 9 Q17 4 13 4" fill="#f08020"/></svg><svg style="position:absolute;left:3033px;top:1091px;" width="36" height="38" viewBox="0 0 36 38"><rect x="7" y="7" width="21" height="23" fill="url(#scrollg)" stroke="#8a8a8a" stroke-width="1.5"/><path d="M7 7 Q1 5 1 11 L1 29 Q1 33 7 30 L12 30 Q9 25 7 26 Z" fill="#e2e2e2" stroke="#8a8a8a" stroke-width="1.5"/><text x="18" y="31" font-size="10" fill="#444" text-anchor="middle" font-family="Liberation Sans">1:23</text><path d="M8 24 Q8 10 22 9 L22 4 L31 11 L22 18 L22 14 Q13 14 12 24 Z" fill="#f08020"/></svg><svg style="position:absolute;left:3097px;top:1091px;" width="40" height="40" viewBox="0 0 40 40"><rect x="7" y="7" width="21" height="23" fill="url(#scrollg)" stroke="#8a8a8a" stroke-width="1.5"/><path d="M7 7 Q1 5 1 11 L1 29 Q1 33 7 30 L12 30 Q9 25 7 26 Z" fill="#e2e2e2" stroke="#8a8a8a" stroke-width="1.5"/><path d="M15 3 L15 14 L19 19 L23 14 L23 3 Z" fill="#5b93cf" stroke="#2f5f96" stroke-width="1.2"/><path d="M27 33 L37 33 L32.0 38 Z" fill="#333"/></svg><svg style="position:absolute;left:3145px;top:1091px;" width="36" height="38" viewBox="0 0 36 38"><rect x="7" y="7" width="21" height="23" fill="url(#scrollg)" stroke="#8a8a8a" stroke-width="1.5"/><path d="M7 7 Q1 5 1 11 L1 29 Q1 33 7 30 L12 30 Q9 25 7 26 Z" fill="#e2e2e2" stroke="#8a8a8a" stroke-width="1.5"/><path d="M19 7 L12 14 L16 14 L16 19 L22 19 L22 14 L26 14 Z M6 24 L11 19 L11 29 Z M10 30 L15 30 L15 34 L10 34 Z M24 22 L28 22 L28 27 L24 27 Z" fill="#5b93cf" stroke="#2f5f96" stroke-width="1"/></svg><svg style="position:absolute;left:3211px;top:1099px;" width="32" height="20" viewBox="0 0 32 20"><path d="M1 10 L7 2 L30 2 L30 18 L7 18 Z" fill="#f5e020" stroke="#b09000" stroke-width="1.4"/><text x="17.5" y="14.5" font-size="10.5" font-weight="700" text-anchor="middle" fill="#333" font-family="Liberation Sans">abc</text></svg><svg style="position:absolute;left:3262px;top:1091px;" width="36" height="38" viewBox="0 0 36 38"><rect x="2" y="13" width="20" height="20" fill="#a8c8b0" stroke="#555" stroke-width="1.3" stroke-dasharray="2 2"/><circle cx="22" cy="12" r="10" fill="#a8c8c8" stroke="#555" stroke-width="1.3" stroke-dasharray="2 2"/><path d="M12 13 L22 13 L22 22" fill="#6090a8"/></svg><svg style="position:absolute;left:3280px;top:1368px;" width="34" height="34" viewBox="0 0 34 34"><circle cx="15" cy="16" r="13" fill="#9ec8f0" stroke="#4a7aa8" stroke-width="1.4"/><path d="M2 16 L28 16 M15 3 L15 29 M4 9 Q15 13 26 9 M4 23 Q15 19 26 23 M15 3 Q7 16 15 29 M15 3 Q23 16 15 29" fill="none" stroke="#777" stroke-width="1.2"/><rect x="17" y="17" width="15" height="15" rx="2.5" fill="#e8b800"/><path d="M21 29 L29 21" stroke="#fff" stroke-width="2.5"/></svg><svg style="position:absolute;left:3280px;top:1651px;" width="36" height="26" viewBox="0 0 36 26"><path d="M1 12 Q15 -2 31 12 Q15 26 1 12 Z" fill="#fafafa" stroke="#666" stroke-width="1.5"/><circle cx="16" cy="12" r="7" fill="#5a90d0" stroke="#2f5f96" stroke-width="1"/><circle cx="16" cy="12" r="3" fill="#111"/><circle cx="17.5" cy="10.5" r="1.2" fill="#fff"/><path d="M24 20 L34 20 L29 25 Z" fill="#333"/></svg>
</div></body></html>
